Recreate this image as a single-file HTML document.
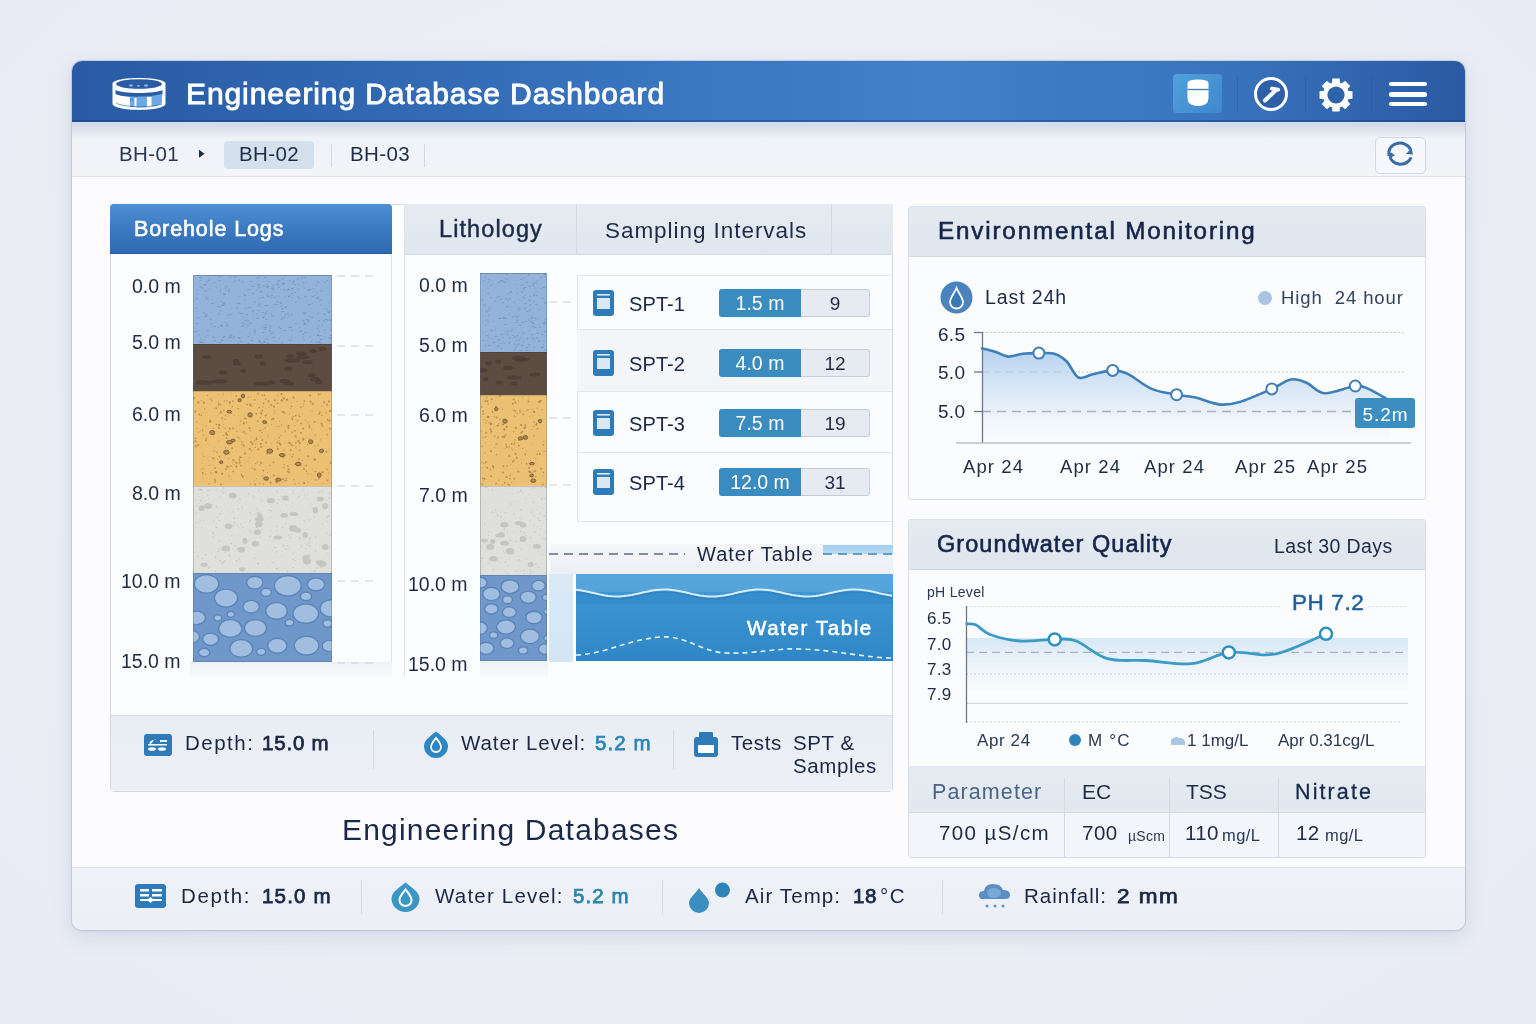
<!DOCTYPE html><html><head><meta charset="utf-8"><style>
html,body{margin:0;padding:0;}
body{width:1536px;height:1024px;overflow:hidden;position:relative;background:#eceef4;font-family:"Liberation Sans",sans-serif;}
.t{position:absolute;white-space:nowrap;line-height:1;will-change:transform;}
.r{position:absolute;display:block;}
</style></head><body>
<div class="r" style="left:0px;top:0px;width:1536px;height:1024px;background:radial-gradient(ellipse at 50% 45%, #eff1f7 0%, #ebeef5 60%, #e8ebf3 100%);"></div>
<div class="r" style="left:72px;top:61px;width:1393px;height:869px;background:#fafbfd;border-radius:10px;box-shadow:0 0 0 1px rgba(175,185,205,0.55),0 6px 22px rgba(70,100,160,0.15),0 1px 3px rgba(70,100,160,0.10);"></div>
<div class="r" style="left:72px;top:61px;width:1393px;height:61px;border-radius:10px 10px 0 0;background:linear-gradient(90deg,#2a5aa4 0%,#3168b2 22%,#3c79c4 48%,#4280c9 62%,#3a74bf 82%,#2a5aa2 100%);box-shadow:inset 0 -2px 0 rgba(20,60,120,0.45);"></div>
<svg class="r" style="left:110px;top:74px;" width="58" height="40" viewBox="0 0 58 40">
<path d="M2.5 9.5 C2.5 2 55.5 2 55.5 9.5 V29.5 C55.5 38 2.5 38 2.5 29.5Z" fill="#fff"/>
<ellipse cx="29" cy="10" rx="23" ry="4.8" fill="#2a5ca6"/>
<ellipse cx="21" cy="11.5" rx="2" ry="1.2" fill="#7eaee4"/><ellipse cx="28.5" cy="11.8" rx="1.8" ry="0.9" fill="#7eaee4"/><ellipse cx="36" cy="11.5" rx="2.2" ry="1.3" fill="#7eaee4"/>
<path d="M5.5 16 C12 20 46 20 52.5 16 V20 C46 24.5 12 24 5.5 20Z" fill="#2a5ca6"/>
<path d="M20 22.5 C33 23 45 22 52 20 V29 C49 32 40 33.5 29 33.5 C25 33.5 22 33.3 20 33Z" fill="#6ea8e6"/>
<rect x="24.5" y="24" width="2" height="9.5" fill="#fff"/><rect x="37" y="23" width="4.5" height="10" fill="#fff"/><rect x="20" y="24.5" width="3" height="2" fill="#4d86cc"/>
<path d="M6 29 C12 33 40 34.5 52 30" stroke="#2a5ca6" stroke-width="0.9" fill="none" opacity="0.7"/>
</svg>
<div class="t" style="left:186.0px;top:79.0px;font-size:30px;color:#ffffff;font-weight:400;letter-spacing:0.9px;-webkit-text-stroke:0.9px #ffffff;">Engineering Database Dashboard</div>
<div class="r" style="left:1173px;top:74px;width:49px;height:39px;background:linear-gradient(135deg,#52a0dc,#3f88cc);border-radius:4px;"></div>
<svg class="r" style="left:1185px;top:78px;" width="26" height="30" viewBox="0 0 26 30"><path d="M2.5 5 Q2.5 1.5 13 1.5 Q23.5 1.5 23.5 5 V20 Q23.5 28 13 28 Q2.5 28 2.5 20Z" fill="#fff"/><line x1="2.5" y1="11.5" x2="23.5" y2="11.5" stroke="#3f7fc0" stroke-width="1.3"/></svg>
<div class="r" style="left:1237px;top:76px;width:1px;height:36px;background:rgba(20,50,100,0.14);"></div>
<div class="r" style="left:1305px;top:76px;width:1px;height:36px;background:rgba(20,50,100,0.14);"></div>
<div class="r" style="left:1371px;top:76px;width:1px;height:36px;background:rgba(20,50,100,0.14);"></div>
<svg class="r" style="left:1252px;top:75px;" width="38" height="38" viewBox="0 0 38 38"><circle cx="19" cy="19" r="15.5" stroke="#fff" stroke-width="3" fill="#2e60a8"/><path d="M13 25.5 L24 15" stroke="#fff" stroke-width="4" stroke-linecap="round"/><path d="M20 13.6 L26 14.6" stroke="#fff" stroke-width="4" stroke-linecap="round"/></svg>
<svg class="r" style="left:1317px;top:75.5px;" width="38" height="38" viewBox="0 0 38 38"><path d="M30.87 15.07 L35.49 15.31 L35.49 22.69 L30.87 22.93 L30.17 24.61 L33.27 28.05 L28.05 33.27 L24.61 30.17 L22.93 30.87 L22.69 35.49 L15.31 35.49 L15.07 30.87 L13.39 30.17 L9.95 33.27 L4.73 28.05 L7.83 24.61 L7.13 22.93 L2.51 22.69 L2.51 15.31 L7.13 15.07 L7.83 13.39 L4.73 9.95 L9.95 4.73 L13.39 7.83 L15.07 7.13 L15.31 2.51 L22.69 2.51 L22.93 7.13 L24.61 7.83 L28.05 4.73 L33.27 9.95 L30.17 13.39Z" fill="#fff"/><circle cx="19" cy="19" r="13" fill="#fff"/><circle cx="19" cy="19" r="8.6" fill="#2f63ac"/></svg>
<div class="r" style="left:1389px;top:81.9px;width:38px;height:4.6px;background:#fff;border-radius:2.3px;"></div>
<div class="r" style="left:1389px;top:92.0px;width:38px;height:4.6px;background:#fff;border-radius:2.3px;"></div>
<div class="r" style="left:1389px;top:101.6px;width:38px;height:4.6px;background:#fff;border-radius:2.3px;"></div>
<div class="r" style="left:72px;top:122px;width:1393px;height:54px;background:linear-gradient(180deg,#eef1f7,#f3f5f9);border-bottom:1px solid #dfe4ec;"></div>
<div class="r" style="left:72px;top:122px;width:1393px;height:2px;background:#cfdff3;"></div>
<div class="r" style="left:72px;top:124px;width:1393px;height:14px;background:linear-gradient(180deg,rgba(190,198,215,0.55),rgba(230,234,242,0));"></div>
<div class="t" style="left:119.0px;top:143.6px;font-size:20.5px;color:#2a3856;font-weight:400;letter-spacing:0.4px;">BH-01</div>
<svg class="r" style="left:198px;top:149px;" width="8" height="10" viewBox="0 0 8 10"><path d="M1 0.8 L6.5 4.8 L1 8.8Z" fill="#1e2c48"/></svg>
<div class="r" style="left:224px;top:141px;width:90px;height:28px;background:#d5e0ed;border-radius:4px;"></div>
<div class="t" style="left:239.0px;top:143.6px;font-size:20.5px;color:#1e2c48;font-weight:400;letter-spacing:0.4px;">BH-02</div>
<div class="r" style="left:331px;top:144px;width:1px;height:23px;background:#d3d9e3;"></div>
<div class="t" style="left:350.0px;top:143.6px;font-size:20.5px;color:#1e2c48;font-weight:400;letter-spacing:0.4px;">BH-03</div>
<div class="r" style="left:424px;top:144px;width:1px;height:23px;background:#d3d9e3;"></div>
<div class="r" style="left:1375px;top:137px;width:51px;height:37px;background:#f5f7fa;border:1px solid #d3d9e3;border-radius:5px;box-sizing:border-box;"></div>
<svg class="r" style="left:1384px;top:140px;" width="32" height="30" viewBox="0 0 32 30"><path d="M5.5 15.4 A10.7 9 0 0 1 26.5 9.5" stroke="#3a6ca6" stroke-width="3" fill="none"/><path d="M22 14 L29 14.5 L27.5 8Z" fill="#3a6ca6"/><path d="M6 16.4 A10.7 9 0 0 0 27 17.3" stroke="#3a6ca6" stroke-width="3" fill="none"/><path d="M3 15.4 L7.5 12.5 L11 15.4 L7 17.3Z" fill="#3a6ca6"/></svg>
<div class="r" style="left:72px;top:176px;width:1393px;height:691px;background:#fcfcfe;"></div>
<div class="r" style="left:72px;top:176px;width:1393px;height:1px;background:#dde2ea;"></div>
<div class="r" style="left:110px;top:204px;width:783px;height:588px;background:#fcfdfe;border:1px solid #d3d9e3;border-radius:4px;box-sizing:border-box;"></div>
<div class="r" style="left:110px;top:204px;width:282px;height:50px;background:linear-gradient(180deg,#4f8fd3 0%,#3a78c0 55%,#2f69b0 100%);border-radius:4px 4px 0 0;box-shadow:inset 0 -1px 0 #2a5d9e;"></div>
<div class="t" style="left:134.0px;top:218.8px;font-size:21.5px;color:#ffffff;font-weight:400;letter-spacing:0.9px;-webkit-text-stroke:0.6px #ffffff;">Borehole Logs</div>
<div class="r" style="left:391px;top:254px;width:1px;height:422px;background:#dde3ec;"></div>
<div class="r" style="left:190px;top:662px;width:202px;height:14px;background:linear-gradient(180deg,#eef1f6,#f7f8fb);"></div>
<svg class="r" style="left:193px;top:275px;" width="139" height="387" viewBox="0 0 139 387"><defs><clipPath id="c11"><rect width="139" height="387"/></clipPath></defs><g clip-path="url(#c11)"><rect x="0" y="0" width="139" height="69" fill="#94b3da"/><rect x="63.0" y="38.5" width="2.5" height="0.9" fill="#6582b0" opacity="0.6"/><rect x="64.8" y="35.0" width="1.9" height="0.9" fill="#6582b0" opacity="0.6"/><rect x="26.3" y="35.3" width="2.0" height="0.9" fill="#6582b0" opacity="0.6"/><rect x="109.6" y="7.3" width="1.5" height="0.9" fill="#6582b0" opacity="0.6"/><rect x="13.4" y="55.2" width="2.1" height="0.9" fill="#6582b0" opacity="0.6"/><rect x="6.7" y="66.8" width="2.5" height="0.9" fill="#6582b0" opacity="0.6"/><rect x="90.6" y="42.2" width="1.3" height="0.9" fill="#6582b0" opacity="0.6"/><rect x="3.1" y="36.4" width="1.1" height="0.9" fill="#6582b0" opacity="0.6"/><rect x="27.1" y="17.2" width="1.0" height="0.9" fill="#6582b0" opacity="0.6"/><rect x="64.6" y="30.5" width="2.3" height="0.9" fill="#6582b0" opacity="0.6"/><rect x="72.1" y="43.9" width="1.8" height="0.9" fill="#6582b0" opacity="0.6"/><rect x="91.8" y="31.6" width="1.4" height="0.9" fill="#6582b0" opacity="0.6"/><rect x="137.7" y="67.7" width="2.3" height="0.9" fill="#6582b0" opacity="0.6"/><rect x="98.0" y="22.1" width="1.4" height="0.9" fill="#6582b0" opacity="0.6"/><rect x="40.6" y="5.7" width="2.2" height="0.9" fill="#6582b0" opacity="0.6"/><rect x="55.9" y="57.7" width="1.6" height="0.9" fill="#6582b0" opacity="0.6"/><rect x="132.3" y="57.8" width="1.0" height="0.9" fill="#6582b0" opacity="0.6"/><rect x="29.7" y="62.0" width="1.8" height="0.9" fill="#6582b0" opacity="0.6"/><rect x="135.3" y="27.6" width="1.1" height="0.9" fill="#6582b0" opacity="0.6"/><rect x="87.2" y="53.2" width="1.4" height="0.9" fill="#6582b0" opacity="0.6"/><rect x="12.9" y="23.3" width="2.5" height="0.9" fill="#6582b0" opacity="0.6"/><rect x="104.9" y="8.9" width="1.4" height="0.9" fill="#6582b0" opacity="0.6"/><rect x="14.8" y="5.0" width="2.3" height="0.9" fill="#6582b0" opacity="0.6"/><rect x="25.3" y="38.5" width="1.7" height="0.9" fill="#6582b0" opacity="0.6"/><rect x="27.1" y="50.0" width="1.2" height="0.9" fill="#6582b0" opacity="0.6"/><rect x="89.2" y="8.8" width="1.7" height="0.9" fill="#6582b0" opacity="0.6"/><rect x="30.2" y="19.1" width="2.6" height="0.9" fill="#6582b0" opacity="0.6"/><rect x="111.1" y="21.4" width="2.4" height="0.9" fill="#6582b0" opacity="0.6"/><rect x="29.9" y="27.4" width="2.4" height="0.9" fill="#6582b0" opacity="0.6"/><rect x="88.9" y="7.7" width="2.6" height="0.9" fill="#6582b0" opacity="0.6"/><rect x="30.2" y="18.3" width="2.2" height="0.9" fill="#6582b0" opacity="0.6"/><rect x="46.1" y="20.9" width="1.1" height="0.9" fill="#6582b0" opacity="0.6"/><rect x="13.3" y="40.0" width="1.4" height="0.9" fill="#6582b0" opacity="0.6"/><rect x="83.4" y="25.9" width="1.7" height="0.9" fill="#6582b0" opacity="0.6"/><rect x="132.4" y="33.4" width="1.9" height="0.9" fill="#6582b0" opacity="0.6"/><rect x="119.7" y="13.2" width="1.2" height="0.9" fill="#6582b0" opacity="0.6"/><rect x="125.5" y="55.8" width="1.4" height="0.9" fill="#6582b0" opacity="0.6"/><rect x="27.0" y="50.5" width="2.5" height="0.9" fill="#6582b0" opacity="0.6"/><rect x="27.9" y="64.7" width="2.4" height="0.9" fill="#6582b0" opacity="0.6"/><rect x="83.7" y="29.2" width="1.2" height="0.9" fill="#6582b0" opacity="0.6"/><rect x="6.3" y="65.5" width="1.4" height="0.9" fill="#6582b0" opacity="0.6"/><rect x="97.5" y="18.2" width="2.3" height="0.9" fill="#6582b0" opacity="0.6"/><rect x="82.7" y="20.7" width="1.3" height="0.9" fill="#6582b0" opacity="0.6"/><rect x="99.7" y="5.6" width="1.4" height="0.9" fill="#6582b0" opacity="0.6"/><rect x="77.6" y="58.1" width="2.0" height="0.9" fill="#6582b0" opacity="0.6"/><rect x="39.4" y="62.5" width="1.3" height="0.9" fill="#6582b0" opacity="0.6"/><rect x="3.3" y="19.0" width="1.7" height="0.9" fill="#6582b0" opacity="0.6"/><rect x="9.3" y="12.8" width="1.6" height="0.9" fill="#6582b0" opacity="0.6"/><rect x="79.4" y="9.8" width="1.6" height="0.9" fill="#6582b0" opacity="0.6"/><rect x="123.1" y="66.7" width="2.1" height="0.9" fill="#6582b0" opacity="0.6"/><rect x="95.7" y="40.2" width="1.2" height="0.9" fill="#6582b0" opacity="0.6"/><rect x="5.8" y="2.2" width="2.5" height="0.9" fill="#6582b0" opacity="0.6"/><rect x="97.0" y="65.5" width="1.0" height="0.9" fill="#6582b0" opacity="0.6"/><rect x="88.2" y="33.3" width="2.2" height="0.9" fill="#6582b0" opacity="0.6"/><rect x="44.7" y="68.0" width="1.1" height="0.9" fill="#6582b0" opacity="0.6"/><rect x="75.8" y="50.4" width="2.4" height="0.9" fill="#6582b0" opacity="0.6"/><rect x="102.0" y="48.1" width="2.3" height="0.9" fill="#6582b0" opacity="0.6"/><rect x="126.4" y="24.6" width="2.1" height="0.9" fill="#6582b0" opacity="0.6"/><rect x="124.4" y="59.4" width="1.7" height="0.9" fill="#6582b0" opacity="0.6"/><rect x="109.3" y="58.9" width="1.9" height="0.9" fill="#6582b0" opacity="0.6"/><rect x="86.6" y="26.6" width="1.9" height="0.9" fill="#6582b0" opacity="0.6"/><rect x="84.4" y="6.4" width="2.0" height="0.9" fill="#6582b0" opacity="0.6"/><rect x="137.1" y="59.9" width="2.2" height="0.9" fill="#6582b0" opacity="0.6"/><rect x="54.2" y="50.2" width="1.9" height="0.9" fill="#6582b0" opacity="0.6"/><rect x="61.4" y="57.2" width="1.1" height="0.9" fill="#6582b0" opacity="0.6"/><rect x="103.8" y="3.0" width="2.0" height="0.9" fill="#6582b0" opacity="0.6"/><rect x="66.9" y="16.4" width="2.1" height="0.9" fill="#6582b0" opacity="0.6"/><rect x="69.1" y="42.2" width="2.5" height="0.9" fill="#6582b0" opacity="0.6"/><rect x="36.0" y="1.8" width="1.5" height="0.9" fill="#6582b0" opacity="0.6"/><rect x="93.9" y="14.6" width="1.3" height="0.9" fill="#6582b0" opacity="0.6"/><rect x="125.1" y="45.2" width="1.7" height="0.9" fill="#6582b0" opacity="0.6"/><rect x="123.2" y="22.9" width="2.1" height="0.9" fill="#6582b0" opacity="0.6"/><rect x="28.2" y="29.9" width="2.3" height="0.9" fill="#6582b0" opacity="0.6"/><rect x="126.2" y="60.0" width="1.6" height="0.9" fill="#6582b0" opacity="0.6"/><rect x="80.9" y="22.2" width="1.2" height="0.9" fill="#6582b0" opacity="0.6"/><rect x="69.0" y="57.1" width="2.4" height="0.9" fill="#6582b0" opacity="0.6"/><rect x="98.4" y="64.7" width="1.4" height="0.9" fill="#6582b0" opacity="0.6"/><rect x="24.2" y="31.2" width="1.4" height="0.9" fill="#6582b0" opacity="0.6"/><rect x="30.3" y="28.7" width="2.0" height="0.9" fill="#6582b0" opacity="0.6"/><rect x="68.7" y="22.1" width="2.3" height="0.9" fill="#6582b0" opacity="0.6"/><rect x="135.5" y="31.3" width="1.1" height="0.9" fill="#6582b0" opacity="0.6"/><rect x="5.3" y="59.5" width="1.1" height="0.9" fill="#6582b0" opacity="0.6"/><rect x="98.1" y="39.2" width="1.5" height="0.9" fill="#6582b0" opacity="0.6"/><rect x="109.4" y="2.3" width="1.2" height="0.9" fill="#6582b0" opacity="0.6"/><rect x="63.3" y="2.7" width="2.3" height="0.9" fill="#6582b0" opacity="0.6"/><rect x="33.5" y="10.4" width="1.1" height="0.9" fill="#6582b0" opacity="0.6"/><rect x="87.2" y="30.9" width="2.0" height="0.9" fill="#6582b0" opacity="0.6"/><rect x="90.7" y="55.1" width="2.5" height="0.9" fill="#6582b0" opacity="0.6"/><rect x="94.8" y="14.4" width="1.8" height="0.9" fill="#6582b0" opacity="0.6"/><rect x="25.5" y="1.7" width="1.8" height="0.9" fill="#6582b0" opacity="0.6"/><rect x="98.8" y="13.0" width="1.4" height="0.9" fill="#6582b0" opacity="0.6"/><rect x="48.4" y="47.7" width="1.8" height="0.9" fill="#6582b0" opacity="0.6"/><rect x="85.2" y="51.7" width="1.6" height="0.9" fill="#6582b0" opacity="0.6"/><rect x="109.5" y="61.7" width="1.1" height="0.9" fill="#6582b0" opacity="0.6"/><rect x="128.8" y="49.4" width="1.2" height="0.9" fill="#6582b0" opacity="0.6"/><rect x="63.1" y="42.9" width="2.5" height="0.9" fill="#6582b0" opacity="0.6"/><rect x="52.6" y="39.1" width="2.4" height="0.9" fill="#6582b0" opacity="0.6"/><rect x="110.2" y="64.3" width="1.7" height="0.9" fill="#6582b0" opacity="0.6"/><rect x="90.2" y="14.7" width="2.2" height="0.9" fill="#6582b0" opacity="0.6"/><rect x="113.1" y="44.0" width="2.1" height="0.9" fill="#6582b0" opacity="0.6"/><rect x="30.2" y="61.3" width="2.6" height="0.9" fill="#6582b0" opacity="0.6"/><rect x="134.9" y="37.0" width="2.3" height="0.9" fill="#6582b0" opacity="0.6"/><rect x="44.9" y="62.0" width="2.4" height="0.9" fill="#6582b0" opacity="0.6"/><rect x="48.7" y="6.5" width="1.7" height="0.9" fill="#6582b0" opacity="0.6"/><rect x="76.4" y="52.5" width="1.8" height="0.9" fill="#6582b0" opacity="0.6"/><rect x="4.9" y="55.2" width="1.1" height="0.9" fill="#6582b0" opacity="0.6"/><rect x="110.6" y="12.6" width="1.5" height="0.9" fill="#6582b0" opacity="0.6"/><rect x="108.9" y="10.4" width="1.2" height="0.9" fill="#6582b0" opacity="0.6"/><rect x="71.8" y="49.5" width="2.3" height="0.9" fill="#6582b0" opacity="0.6"/><rect x="95.4" y="64.4" width="1.8" height="0.9" fill="#6582b0" opacity="0.6"/><rect x="131.0" y="6.8" width="1.4" height="0.9" fill="#6582b0" opacity="0.6"/><rect x="73.2" y="20.4" width="2.2" height="0.9" fill="#6582b0" opacity="0.6"/><rect x="88.5" y="36.0" width="2.3" height="0.9" fill="#6582b0" opacity="0.6"/><rect x="77.7" y="21.9" width="1.6" height="0.9" fill="#6582b0" opacity="0.6"/><rect x="116.8" y="61.3" width="1.3" height="0.9" fill="#6582b0" opacity="0.6"/><rect x="117.6" y="65.9" width="1.8" height="0.9" fill="#6582b0" opacity="0.6"/><rect x="79.5" y="14.5" width="1.9" height="0.9" fill="#6582b0" opacity="0.6"/><rect x="69.9" y="41.6" width="1.0" height="0.9" fill="#6582b0" opacity="0.6"/><rect x="133.8" y="35.6" width="1.6" height="0.9" fill="#6582b0" opacity="0.6"/><rect x="110.7" y="38.7" width="1.8" height="0.9" fill="#6582b0" opacity="0.6"/><rect x="95.7" y="5.4" width="1.9" height="0.9" fill="#6582b0" opacity="0.6"/><rect x="57.7" y="65.1" width="2.5" height="0.9" fill="#6582b0" opacity="0.6"/><rect x="37.9" y="32.7" width="1.2" height="0.9" fill="#6582b0" opacity="0.6"/><rect x="60.4" y="55.7" width="2.4" height="0.9" fill="#6582b0" opacity="0.6"/><rect x="66.3" y="22.3" width="1.3" height="0.9" fill="#6582b0" opacity="0.6"/><rect x="85.7" y="63.0" width="1.2" height="0.9" fill="#6582b0" opacity="0.6"/><rect x="107.8" y="2.5" width="1.3" height="0.9" fill="#6582b0" opacity="0.6"/><rect x="32.1" y="47.0" width="1.5" height="0.9" fill="#6582b0" opacity="0.6"/><rect x="49.7" y="42.5" width="1.2" height="0.9" fill="#6582b0" opacity="0.6"/><rect x="101.1" y="9.2" width="1.8" height="0.9" fill="#6582b0" opacity="0.6"/><rect x="35.3" y="14.2" width="1.8" height="0.9" fill="#6582b0" opacity="0.6"/><rect x="60.8" y="26.2" width="1.7" height="0.9" fill="#6582b0" opacity="0.6"/><rect x="73.5" y="11.7" width="1.3" height="0.9" fill="#6582b0" opacity="0.6"/><rect x="87.5" y="43.8" width="1.8" height="0.9" fill="#6582b0" opacity="0.6"/><rect x="117.6" y="42.0" width="2.4" height="0.9" fill="#6582b0" opacity="0.6"/><rect x="32.9" y="50.6" width="2.3" height="0.9" fill="#6582b0" opacity="0.6"/><rect x="124.7" y="22.2" width="1.5" height="0.9" fill="#6582b0" opacity="0.6"/><rect x="127.4" y="15.6" width="2.6" height="0.9" fill="#6582b0" opacity="0.6"/><rect x="122.6" y="10.0" width="1.4" height="0.9" fill="#6582b0" opacity="0.6"/><rect x="100.5" y="18.4" width="1.2" height="0.9" fill="#6582b0" opacity="0.6"/><rect x="115.0" y="29.2" width="2.3" height="0.9" fill="#6582b0" opacity="0.6"/><rect x="18.3" y="28.0" width="2.1" height="0.9" fill="#6582b0" opacity="0.6"/><rect x="3.4" y="14.5" width="2.1" height="0.9" fill="#6582b0" opacity="0.6"/><rect x="125.9" y="65.9" width="1.2" height="0.9" fill="#6582b0" opacity="0.6"/><rect x="70.3" y="51.8" width="1.8" height="0.9" fill="#6582b0" opacity="0.6"/><rect x="94.9" y="13.7" width="1.1" height="0.9" fill="#6582b0" opacity="0.6"/><rect x="15.5" y="3.5" width="1.9" height="0.9" fill="#6582b0" opacity="0.6"/><rect x="71.5" y="39.1" width="1.2" height="0.9" fill="#6582b0" opacity="0.6"/><rect x="26.3" y="14.7" width="2.3" height="0.9" fill="#6582b0" opacity="0.6"/><rect x="136.7" y="63.1" width="1.2" height="0.9" fill="#6582b0" opacity="0.6"/><rect x="9.5" y="64.8" width="1.7" height="0.9" fill="#6582b0" opacity="0.6"/><rect x="105.8" y="22.9" width="1.7" height="0.9" fill="#6582b0" opacity="0.6"/><rect x="71.6" y="29.8" width="2.0" height="0.9" fill="#6582b0" opacity="0.6"/><rect x="2.8" y="48.0" width="2.4" height="0.9" fill="#6582b0" opacity="0.6"/><rect x="25.8" y="31.4" width="2.2" height="0.9" fill="#6582b0" opacity="0.6"/><rect x="56.5" y="14.1" width="1.3" height="0.9" fill="#6582b0" opacity="0.6"/><rect x="71.2" y="2.0" width="2.4" height="0.9" fill="#6582b0" opacity="0.6"/><rect x="110.8" y="48.2" width="2.4" height="0.9" fill="#6582b0" opacity="0.6"/><rect x="87.2" y="28.1" width="2.0" height="0.9" fill="#6582b0" opacity="0.6"/><rect x="70.1" y="66.8" width="2.3" height="0.9" fill="#6582b0" opacity="0.6"/><rect x="36.4" y="62.1" width="2.2" height="0.9" fill="#6582b0" opacity="0.6"/><rect x="107.6" y="55.6" width="1.6" height="0.9" fill="#6582b0" opacity="0.6"/><rect x="123.8" y="59.9" width="2.1" height="0.9" fill="#6582b0" opacity="0.6"/><rect x="106.1" y="52.3" width="1.6" height="0.9" fill="#6582b0" opacity="0.6"/><rect x="100.0" y="5.7" width="1.5" height="0.9" fill="#6582b0" opacity="0.6"/><rect x="65.2" y="1.7" width="1.6" height="0.9" fill="#6582b0" opacity="0.6"/><rect x="88.5" y="42.8" width="1.4" height="0.9" fill="#6582b0" opacity="0.6"/><rect x="130.4" y="45.6" width="1.5" height="0.9" fill="#6582b0" opacity="0.6"/><rect x="91.4" y="39.2" width="1.9" height="0.9" fill="#6582b0" opacity="0.6"/><rect x="54.4" y="68.0" width="2.0" height="0.9" fill="#6582b0" opacity="0.6"/><rect x="97.1" y="52.0" width="2.6" height="0.9" fill="#6582b0" opacity="0.6"/><rect x="4.1" y="42.2" width="2.2" height="0.9" fill="#6582b0" opacity="0.6"/><rect x="36.2" y="27.9" width="1.1" height="0.9" fill="#6582b0" opacity="0.6"/><rect x="27.8" y="26.2" width="1.2" height="0.9" fill="#6582b0" opacity="0.6"/><rect x="35.4" y="61.7" width="1.9" height="0.9" fill="#6582b0" opacity="0.6"/><rect x="70.6" y="65.8" width="1.9" height="0.9" fill="#6582b0" opacity="0.6"/><rect x="137.3" y="43.7" width="2.3" height="0.9" fill="#6582b0" opacity="0.6"/><rect x="11.4" y="41.0" width="2.2" height="0.9" fill="#6582b0" opacity="0.6"/><rect x="7.2" y="63.3" width="1.3" height="0.9" fill="#6582b0" opacity="0.6"/><rect x="65.6" y="12.3" width="1.8" height="0.9" fill="#6582b0" opacity="0.6"/><rect x="84.7" y="4.9" width="2.5" height="0.9" fill="#6582b0" opacity="0.6"/><rect x="58.6" y="36.3" width="2.0" height="0.9" fill="#6582b0" opacity="0.6"/><rect x="51.1" y="20.1" width="2.0" height="0.9" fill="#6582b0" opacity="0.6"/><rect x="77.8" y="20.0" width="2.1" height="0.9" fill="#6582b0" opacity="0.6"/><rect x="41.6" y="1.9" width="1.4" height="0.9" fill="#6582b0" opacity="0.6"/><rect x="6.9" y="11.5" width="2.2" height="0.9" fill="#6582b0" opacity="0.6"/><rect x="54.4" y="61.1" width="2.2" height="0.9" fill="#6582b0" opacity="0.6"/><rect x="7.9" y="67.2" width="2.5" height="0.9" fill="#6582b0" opacity="0.6"/><rect x="11.1" y="61.7" width="1.7" height="0.9" fill="#6582b0" opacity="0.6"/><rect x="66.4" y="66.2" width="1.4" height="0.9" fill="#6582b0" opacity="0.6"/><rect x="72.7" y="63.8" width="2.2" height="0.9" fill="#6582b0" opacity="0.6"/><rect x="65.2" y="66.6" width="2.3" height="0.9" fill="#6582b0" opacity="0.6"/><rect x="83.7" y="8.7" width="2.0" height="0.9" fill="#6582b0" opacity="0.6"/><rect x="63.4" y="14.6" width="1.1" height="0.9" fill="#6582b0" opacity="0.6"/><rect x="73.3" y="9.3" width="1.7" height="0.9" fill="#6582b0" opacity="0.6"/><rect x="92.5" y="31.5" width="1.4" height="0.9" fill="#6582b0" opacity="0.6"/><rect x="80.8" y="29.1" width="2.2" height="0.9" fill="#6582b0" opacity="0.6"/><rect x="73.7" y="67.8" width="2.5" height="0.9" fill="#6582b0" opacity="0.6"/><rect x="101.6" y="17.0" width="1.2" height="0.9" fill="#6582b0" opacity="0.6"/><rect x="123.3" y="53.5" width="2.0" height="0.9" fill="#6582b0" opacity="0.6"/><rect x="50.2" y="19.2" width="2.1" height="0.9" fill="#6582b0" opacity="0.6"/><rect x="78.4" y="40.6" width="2.0" height="0.9" fill="#6582b0" opacity="0.6"/><rect x="104.2" y="13.7" width="1.4" height="0.9" fill="#6582b0" opacity="0.6"/><rect x="135.2" y="62.4" width="2.4" height="0.9" fill="#6582b0" opacity="0.6"/><rect x="6.4" y="5.1" width="1.4" height="0.9" fill="#6582b0" opacity="0.6"/><rect x="59.3" y="42.8" width="1.2" height="0.9" fill="#6582b0" opacity="0.6"/><rect x="75.2" y="5.9" width="1.1" height="0.9" fill="#6582b0" opacity="0.6"/><rect x="93.7" y="37.9" width="2.0" height="0.9" fill="#6582b0" opacity="0.6"/><rect x="52.1" y="33.1" width="1.3" height="0.9" fill="#6582b0" opacity="0.6"/><rect x="48.1" y="50.9" width="2.3" height="0.9" fill="#6582b0" opacity="0.6"/><rect x="11.2" y="9.0" width="2.3" height="0.9" fill="#6582b0" opacity="0.6"/><rect x="86.5" y="52.5" width="1.3" height="0.9" fill="#6582b0" opacity="0.6"/><rect x="59.1" y="18.3" width="2.3" height="0.9" fill="#6582b0" opacity="0.6"/><rect x="51.5" y="44.8" width="2.6" height="0.9" fill="#6582b0" opacity="0.6"/><rect x="45.6" y="37.8" width="2.2" height="0.9" fill="#6582b0" opacity="0.6"/><rect x="127.2" y="29.7" width="1.6" height="0.9" fill="#6582b0" opacity="0.6"/><rect x="14.3" y="59.6" width="1.1" height="0.9" fill="#6582b0" opacity="0.6"/><rect x="12.4" y="38.8" width="1.8" height="0.9" fill="#6582b0" opacity="0.6"/><rect x="94.9" y="21.0" width="2.2" height="0.9" fill="#6582b0" opacity="0.6"/><rect x="11.4" y="15.3" width="2.1" height="0.9" fill="#6582b0" opacity="0.6"/><rect x="12.2" y="21.4" width="2.2" height="0.9" fill="#6582b0" opacity="0.6"/><rect x="96.1" y="20.0" width="1.2" height="0.9" fill="#6582b0" opacity="0.6"/><rect x="50.0" y="49.6" width="1.6" height="0.9" fill="#6582b0" opacity="0.6"/><rect x="17.1" y="48.5" width="1.9" height="0.9" fill="#6582b0" opacity="0.6"/><rect x="126.8" y="64.0" width="2.5" height="0.9" fill="#6582b0" opacity="0.6"/><rect x="61.0" y="54.8" width="1.5" height="0.9" fill="#6582b0" opacity="0.6"/><rect x="44.5" y="27.8" width="2.5" height="0.9" fill="#6582b0" opacity="0.6"/><rect x="123.6" y="17.6" width="1.6" height="0.9" fill="#6582b0" opacity="0.6"/><rect x="51.1" y="25.3" width="1.6" height="0.9" fill="#6582b0" opacity="0.6"/><rect x="54.1" y="14.1" width="1.9" height="0.9" fill="#6582b0" opacity="0.6"/><rect x="110.2" y="37.2" width="2.3" height="0.9" fill="#6582b0" opacity="0.6"/><rect x="78.1" y="12.8" width="2.2" height="0.9" fill="#6582b0" opacity="0.6"/><rect x="121.7" y="19.9" width="1.0" height="0.9" fill="#6582b0" opacity="0.6"/><rect x="71.6" y="37.5" width="1.9" height="0.9" fill="#6582b0" opacity="0.6"/><rect x="133.4" y="44.6" width="2.3" height="0.9" fill="#6582b0" opacity="0.6"/><rect x="9.8" y="37.6" width="2.3" height="0.9" fill="#6582b0" opacity="0.6"/><rect x="12.5" y="6.5" width="2.2" height="0.9" fill="#6582b0" opacity="0.6"/><rect x="124.2" y="6.7" width="2.0" height="0.9" fill="#6582b0" opacity="0.6"/><rect x="20.7" y="51.0" width="2.0" height="0.9" fill="#6582b0" opacity="0.6"/><rect x="34.6" y="15.8" width="2.2" height="0.9" fill="#6582b0" opacity="0.6"/><rect x="72.5" y="52.2" width="1.6" height="0.9" fill="#6582b0" opacity="0.6"/><rect x="47.3" y="65.9" width="2.1" height="0.9" fill="#6582b0" opacity="0.6"/><rect x="68.6" y="37.0" width="2.2" height="0.9" fill="#6582b0" opacity="0.6"/><rect x="98.0" y="62.3" width="1.7" height="0.9" fill="#6582b0" opacity="0.6"/><rect x="114.2" y="45.7" width="2.4" height="0.9" fill="#6582b0" opacity="0.6"/><rect x="111.4" y="56.9" width="2.4" height="0.9" fill="#6582b0" opacity="0.6"/><rect x="132.2" y="43.9" width="1.8" height="0.9" fill="#6582b0" opacity="0.6"/><rect x="98.3" y="54.8" width="1.7" height="0.9" fill="#6582b0" opacity="0.6"/><rect x="58.6" y="10.8" width="2.2" height="0.9" fill="#6582b0" opacity="0.6"/><rect x="136.8" y="26.2" width="1.3" height="0.9" fill="#6582b0" opacity="0.6"/><rect x="29.0" y="29.5" width="1.5" height="0.9" fill="#6582b0" opacity="0.6"/><rect x="133.9" y="5.0" width="1.5" height="0.9" fill="#6582b0" opacity="0.6"/><rect x="16.7" y="44.4" width="2.2" height="0.9" fill="#6582b0" opacity="0.6"/><rect x="25.6" y="5.2" width="1.7" height="0.9" fill="#6582b0" opacity="0.6"/><rect x="81.0" y="61.9" width="1.1" height="0.9" fill="#6582b0" opacity="0.6"/><rect x="15.9" y="13.4" width="1.3" height="0.9" fill="#6582b0" opacity="0.6"/><rect x="33.3" y="49.1" width="2.0" height="0.9" fill="#6582b0" opacity="0.6"/><rect x="31.7" y="13.4" width="1.4" height="0.9" fill="#6582b0" opacity="0.6"/><rect x="24.6" y="51.8" width="1.5" height="0.9" fill="#6582b0" opacity="0.6"/><rect x="76.1" y="55.7" width="1.8" height="0.9" fill="#6582b0" opacity="0.6"/><rect x="36.7" y="60.5" width="2.5" height="0.9" fill="#6582b0" opacity="0.6"/><rect x="47.9" y="37.7" width="2.5" height="0.9" fill="#6582b0" opacity="0.6"/><rect x="67.1" y="15.8" width="1.1" height="0.9" fill="#6582b0" opacity="0.6"/><rect x="130.8" y="54.7" width="1.6" height="0.9" fill="#6582b0" opacity="0.6"/><rect x="73.3" y="35.6" width="1.4" height="0.9" fill="#6582b0" opacity="0.6"/><rect x="136.7" y="45.1" width="1.4" height="0.9" fill="#6582b0" opacity="0.6"/><rect x="2.5" y="32.7" width="1.6" height="0.9" fill="#6582b0" opacity="0.6"/><rect x="110.2" y="48.8" width="2.0" height="0.9" fill="#6582b0" opacity="0.6"/><rect x="22.5" y="11.5" width="1.5" height="0.9" fill="#6582b0" opacity="0.6"/><rect x="36.5" y="59.2" width="1.8" height="0.9" fill="#6582b0" opacity="0.6"/><rect x="88.3" y="67.5" width="1.4" height="0.9" fill="#6582b0" opacity="0.6"/><rect x="74.2" y="11.1" width="2.2" height="0.9" fill="#6582b0" opacity="0.6"/><rect x="1.2" y="56.0" width="2.4" height="0.9" fill="#6582b0" opacity="0.6"/><rect x="113.6" y="6.5" width="1.4" height="0.9" fill="#6582b0" opacity="0.6"/><rect x="99.2" y="7.5" width="1.8" height="0.9" fill="#6582b0" opacity="0.6"/><rect x="65.2" y="65.0" width="1.9" height="0.9" fill="#6582b0" opacity="0.6"/><rect x="118.5" y="21.3" width="2.3" height="0.9" fill="#6582b0" opacity="0.6"/><rect x="58.1" y="62.4" width="1.1" height="0.9" fill="#6582b0" opacity="0.6"/><rect x="114.2" y="15.0" width="1.9" height="0.9" fill="#6582b0" opacity="0.6"/><rect x="73.0" y="11.6" width="2.3" height="0.9" fill="#6582b0" opacity="0.6"/><rect x="43.7" y="21.8" width="1.1" height="0.9" fill="#6582b0" opacity="0.6"/><rect x="42.9" y="32.3" width="2.1" height="0.9" fill="#6582b0" opacity="0.6"/><rect x="50.3" y="47.0" width="1.2" height="0.9" fill="#6582b0" opacity="0.6"/><rect x="55.0" y="31.9" width="2.5" height="0.9" fill="#6582b0" opacity="0.6"/><rect x="114.7" y="44.8" width="1.0" height="0.9" fill="#6582b0" opacity="0.6"/><rect x="52.7" y="48.6" width="1.4" height="0.9" fill="#6582b0" opacity="0.6"/><rect x="78.3" y="31.7" width="1.0" height="0.9" fill="#6582b0" opacity="0.6"/><rect x="136.9" y="54.6" width="1.3" height="0.9" fill="#6582b0" opacity="0.6"/><rect x="85.4" y="20.5" width="1.6" height="0.9" fill="#6582b0" opacity="0.6"/><rect x="74.9" y="21.0" width="1.5" height="0.9" fill="#6582b0" opacity="0.6"/><rect x="54.7" y="45.7" width="1.4" height="0.9" fill="#6582b0" opacity="0.6"/><rect x="28.4" y="50.0" width="1.5" height="0.9" fill="#6582b0" opacity="0.6"/><rect x="130.5" y="38.7" width="2.2" height="0.9" fill="#6582b0" opacity="0.6"/><rect x="46.4" y="56.4" width="1.1" height="0.9" fill="#6582b0" opacity="0.6"/><rect x="20.3" y="7.3" width="2.1" height="0.9" fill="#6582b0" opacity="0.6"/><rect x="98.0" y="13.1" width="1.6" height="0.9" fill="#6582b0" opacity="0.6"/><rect x="115.7" y="40.7" width="1.1" height="0.9" fill="#6582b0" opacity="0.6"/><rect x="32.0" y="11.5" width="1.2" height="0.9" fill="#6582b0" opacity="0.6"/><rect x="56.7" y="5.9" width="2.5" height="0.9" fill="#6582b0" opacity="0.6"/><rect x="59.5" y="35.3" width="2.0" height="0.9" fill="#6582b0" opacity="0.6"/><rect x="106.1" y="56.0" width="1.6" height="0.9" fill="#6582b0" opacity="0.6"/><rect x="46.4" y="28.6" width="1.0" height="0.9" fill="#6582b0" opacity="0.6"/><rect x="55.9" y="47.9" width="2.6" height="0.9" fill="#6582b0" opacity="0.6"/><rect x="109.2" y="45.2" width="2.0" height="0.9" fill="#6582b0" opacity="0.6"/><rect x="3.5" y="23.2" width="1.5" height="0.9" fill="#6582b0" opacity="0.6"/><rect x="90.1" y="8.1" width="1.6" height="0.9" fill="#6582b0" opacity="0.6"/><rect x="70.8" y="53.8" width="2.3" height="0.9" fill="#6582b0" opacity="0.6"/><rect x="84.8" y="11.6" width="2.2" height="0.9" fill="#6582b0" opacity="0.6"/><rect x="124.7" y="37.7" width="1.6" height="0.9" fill="#6582b0" opacity="0.6"/><rect x="69.6" y="10.5" width="2.1" height="0.9" fill="#6582b0" opacity="0.6"/><rect x="136.2" y="35.6" width="2.1" height="0.9" fill="#6582b0" opacity="0.6"/><rect x="115.5" y="14.2" width="2.5" height="0.9" fill="#6582b0" opacity="0.6"/><rect x="86.9" y="14.3" width="1.1" height="0.9" fill="#6582b0" opacity="0.6"/><rect x="34.5" y="39.6" width="2.1" height="0.9" fill="#6582b0" opacity="0.6"/><rect x="46.1" y="63.2" width="1.6" height="0.9" fill="#6582b0" opacity="0.6"/><rect x="64.4" y="9.3" width="2.6" height="0.9" fill="#6582b0" opacity="0.6"/><rect x="19.6" y="61.6" width="1.9" height="0.9" fill="#6582b0" opacity="0.6"/><rect x="77.8" y="38.5" width="1.4" height="0.9" fill="#6582b0" opacity="0.6"/><rect x="125.6" y="67.5" width="2.3" height="0.9" fill="#6582b0" opacity="0.6"/><rect x="83.4" y="9.2" width="2.3" height="0.9" fill="#6582b0" opacity="0.6"/><rect x="40.5" y="61.1" width="1.4" height="0.9" fill="#6582b0" opacity="0.6"/><rect x="79.6" y="56.7" width="1.3" height="0.9" fill="#6582b0" opacity="0.6"/><rect x="76.1" y="6.1" width="1.1" height="0.9" fill="#6582b0" opacity="0.6"/><rect x="25.7" y="67.1" width="2.5" height="0.9" fill="#6582b0" opacity="0.6"/><rect x="91.2" y="21.6" width="2.1" height="0.9" fill="#6582b0" opacity="0.6"/><rect x="102.1" y="26.6" width="1.9" height="0.9" fill="#6582b0" opacity="0.6"/><rect x="111.1" y="2.1" width="1.3" height="0.9" fill="#6582b0" opacity="0.6"/><rect x="65.1" y="10.6" width="1.6" height="0.9" fill="#6582b0" opacity="0.6"/><rect x="79.0" y="12.6" width="1.8" height="0.9" fill="#6582b0" opacity="0.6"/><rect x="37.1" y="39.1" width="1.5" height="0.9" fill="#6582b0" opacity="0.6"/><rect x="88.9" y="3.5" width="2.1" height="0.9" fill="#6582b0" opacity="0.6"/><rect x="20.8" y="65.3" width="2.0" height="0.9" fill="#6582b0" opacity="0.6"/><rect x="65.4" y="28.6" width="2.0" height="0.9" fill="#6582b0" opacity="0.6"/><rect x="95.4" y="51.8" width="2.2" height="0.9" fill="#6582b0" opacity="0.6"/><rect x="67.6" y="67.6" width="2.3" height="0.9" fill="#6582b0" opacity="0.6"/><rect x="118.1" y="28.4" width="1.7" height="0.9" fill="#6582b0" opacity="0.6"/><rect x="78.5" y="61.7" width="1.8" height="0.9" fill="#6582b0" opacity="0.6"/><rect x="72.9" y="30.0" width="2.4" height="0.9" fill="#6582b0" opacity="0.6"/><rect x="44.9" y="4.7" width="2.2" height="0.9" fill="#6582b0" opacity="0.6"/><rect x="124.3" y="50.0" width="2.0" height="0.9" fill="#6582b0" opacity="0.6"/><rect x="104.0" y="21.4" width="1.9" height="0.9" fill="#6582b0" opacity="0.6"/><rect x="10.6" y="9.3" width="1.7" height="0.9" fill="#6582b0" opacity="0.6"/><rect x="0" y="0" width="139" height="1" fill="#000" opacity="0.12"/><rect x="0" y="69" width="139" height="47" fill="#5d4c42"/><ellipse cx="69.9" cy="88.7" rx="2.8" ry="1.6" fill="#4f4038" stroke="#463830" stroke-width="0.6"/><ellipse cx="95.4" cy="93.5" rx="3.8" ry="1.6" fill="#4f4038" stroke="#463830" stroke-width="0.6"/><ellipse cx="43.7" cy="88.6" rx="3.8" ry="1.6" fill="#4f4038" stroke="#463830" stroke-width="0.6"/><ellipse cx="12.1" cy="107.7" rx="7.8" ry="1.6" fill="#4f4038" stroke="#463830" stroke-width="0.6"/><ellipse cx="91.5" cy="106.1" rx="4.8" ry="1.6" fill="#4f4038" stroke="#463830" stroke-width="0.6"/><ellipse cx="110.1" cy="82.2" rx="6.6" ry="1.6" fill="#4f4038" stroke="#463830" stroke-width="0.6"/><ellipse cx="78.4" cy="107.4" rx="3.0" ry="1.6" fill="#4f4038" stroke="#463830" stroke-width="0.6"/><ellipse cx="108.4" cy="78.6" rx="5.5" ry="1.6" fill="#4f4038" stroke="#463830" stroke-width="0.6"/><ellipse cx="129.5" cy="74.0" rx="3.8" ry="1.6" fill="#4f4038" stroke="#463830" stroke-width="0.6"/><ellipse cx="42.8" cy="86.0" rx="2.8" ry="1.6" fill="#4f4038" stroke="#463830" stroke-width="0.6"/><ellipse cx="122.1" cy="104.2" rx="4.7" ry="1.6" fill="#4f4038" stroke="#463830" stroke-width="0.6"/><ellipse cx="50.4" cy="95.7" rx="2.8" ry="1.6" fill="#4f4038" stroke="#463830" stroke-width="0.6"/><ellipse cx="7.1" cy="107.2" rx="4.2" ry="1.6" fill="#4f4038" stroke="#463830" stroke-width="0.6"/><ellipse cx="69.3" cy="108.6" rx="7.9" ry="1.6" fill="#4f4038" stroke="#463830" stroke-width="0.6"/><ellipse cx="65.9" cy="81.6" rx="4.1" ry="1.6" fill="#4f4038" stroke="#463830" stroke-width="0.6"/><ellipse cx="125.7" cy="107.2" rx="3.6" ry="1.6" fill="#4f4038" stroke="#463830" stroke-width="0.6"/><ellipse cx="114.4" cy="87.1" rx="5.1" ry="1.6" fill="#4f4038" stroke="#463830" stroke-width="0.6"/><ellipse cx="25.9" cy="106.5" rx="8.0" ry="1.6" fill="#4f4038" stroke="#463830" stroke-width="0.6"/><ellipse cx="29.9" cy="97.4" rx="3.6" ry="1.6" fill="#4f4038" stroke="#463830" stroke-width="0.6"/><ellipse cx="120.1" cy="75.9" rx="3.1" ry="1.6" fill="#4f4038" stroke="#463830" stroke-width="0.6"/><ellipse cx="99.5" cy="85.6" rx="7.5" ry="1.6" fill="#4f4038" stroke="#463830" stroke-width="0.6"/><ellipse cx="118.7" cy="100.4" rx="3.2" ry="1.6" fill="#4f4038" stroke="#463830" stroke-width="0.6"/><ellipse cx="95.6" cy="108.7" rx="4.9" ry="1.6" fill="#4f4038" stroke="#463830" stroke-width="0.6"/><ellipse cx="13.5" cy="82.3" rx="4.2" ry="1.6" fill="#4f4038" stroke="#463830" stroke-width="0.6"/><ellipse cx="97.5" cy="81.3" rx="3.5" ry="1.6" fill="#4f4038" stroke="#463830" stroke-width="0.6"/><rect x="0" y="69" width="139" height="1" fill="#000" opacity="0.12"/><rect x="0" y="116" width="139" height="95" fill="#ecc174"/><circle cx="33.3" cy="178.8" r="0.94" fill="#a27940" opacity="0.7"/><circle cx="52.0" cy="178.6" r="1.01" fill="#a27940" opacity="0.7"/><circle cx="81.8" cy="138.3" r="0.58" fill="#a27940" opacity="0.7"/><circle cx="128.0" cy="179.0" r="0.56" fill="#a27940" opacity="0.7"/><circle cx="88.7" cy="125.4" r="1.09" fill="#a27940" opacity="0.7"/><circle cx="61.3" cy="166.1" r="0.75" fill="#a27940" opacity="0.7"/><circle cx="7.2" cy="172.8" r="0.56" fill="#a27940" opacity="0.7"/><circle cx="35.4" cy="191.7" r="0.42" fill="#a27940" opacity="0.7"/><circle cx="40.1" cy="187.3" r="0.53" fill="#a27940" opacity="0.7"/><circle cx="39.2" cy="168.0" r="0.49" fill="#a27940" opacity="0.7"/><circle cx="123.9" cy="208.9" r="0.38" fill="#a27940" opacity="0.7"/><circle cx="64.2" cy="186.8" r="0.64" fill="#a27940" opacity="0.7"/><circle cx="128.3" cy="163.5" r="0.48" fill="#a27940" opacity="0.7"/><circle cx="77.2" cy="177.0" r="0.62" fill="#a27940" opacity="0.7"/><circle cx="91.2" cy="189.8" r="0.74" fill="#a27940" opacity="0.7"/><circle cx="70.3" cy="195.6" r="0.86" fill="#a27940" opacity="0.7"/><circle cx="72.3" cy="205.5" r="0.48" fill="#a27940" opacity="0.7"/><circle cx="107.8" cy="132.4" r="0.81" fill="#a27940" opacity="0.7"/><circle cx="33.2" cy="158.0" r="0.93" fill="#a27940" opacity="0.7"/><circle cx="108.8" cy="190.6" r="0.53" fill="#a27940" opacity="0.7"/><circle cx="68.0" cy="137.6" r="0.79" fill="#a27940" opacity="0.7"/><circle cx="69.4" cy="120.3" r="0.80" fill="#a27940" opacity="0.7"/><circle cx="98.9" cy="170.3" r="1.00" fill="#a27940" opacity="0.7"/><circle cx="25.7" cy="131.1" r="0.36" fill="#a27940" opacity="0.7"/><circle cx="69.0" cy="157.4" r="0.68" fill="#a27940" opacity="0.7"/><circle cx="37.0" cy="191.3" r="0.40" fill="#a27940" opacity="0.7"/><circle cx="125.3" cy="169.9" r="0.76" fill="#a27940" opacity="0.7"/><circle cx="109.5" cy="139.1" r="0.46" fill="#a27940" opacity="0.7"/><circle cx="43.6" cy="120.9" r="0.59" fill="#a27940" opacity="0.7"/><circle cx="86.1" cy="165.9" r="0.55" fill="#a27940" opacity="0.7"/><circle cx="81.7" cy="125.2" r="0.97" fill="#a27940" opacity="0.7"/><circle cx="24.5" cy="140.7" r="0.47" fill="#a27940" opacity="0.7"/><circle cx="95.6" cy="194.3" r="0.94" fill="#a27940" opacity="0.7"/><circle cx="9.4" cy="155.2" r="0.62" fill="#a27940" opacity="0.7"/><circle cx="30.6" cy="207.3" r="0.38" fill="#a27940" opacity="0.7"/><circle cx="68.1" cy="187.8" r="1.09" fill="#a27940" opacity="0.7"/><circle cx="20.8" cy="159.3" r="0.91" fill="#a27940" opacity="0.7"/><circle cx="6.4" cy="139.4" r="1.02" fill="#a27940" opacity="0.7"/><circle cx="20.4" cy="153.5" r="0.57" fill="#a27940" opacity="0.7"/><circle cx="59.1" cy="124.1" r="0.38" fill="#a27940" opacity="0.7"/><circle cx="137.5" cy="188.0" r="0.90" fill="#a27940" opacity="0.7"/><circle cx="32.5" cy="140.5" r="0.76" fill="#a27940" opacity="0.7"/><circle cx="34.1" cy="159.9" r="1.05" fill="#a27940" opacity="0.7"/><circle cx="50.9" cy="148.3" r="1.09" fill="#a27940" opacity="0.7"/><circle cx="84.7" cy="120.7" r="0.65" fill="#a27940" opacity="0.7"/><circle cx="90.0" cy="122.4" r="0.61" fill="#a27940" opacity="0.7"/><circle cx="96.2" cy="197.4" r="0.79" fill="#a27940" opacity="0.7"/><circle cx="122.4" cy="160.0" r="0.64" fill="#a27940" opacity="0.7"/><circle cx="116.5" cy="152.4" r="0.94" fill="#a27940" opacity="0.7"/><circle cx="30.5" cy="149.3" r="0.49" fill="#a27940" opacity="0.7"/><circle cx="76.3" cy="132.2" r="0.50" fill="#a27940" opacity="0.7"/><circle cx="30.4" cy="160.5" r="0.58" fill="#a27940" opacity="0.7"/><circle cx="62.3" cy="209.4" r="0.86" fill="#a27940" opacity="0.7"/><circle cx="119.2" cy="136.0" r="0.64" fill="#a27940" opacity="0.7"/><circle cx="11.0" cy="181.3" r="0.62" fill="#a27940" opacity="0.7"/><circle cx="38.6" cy="118.7" r="0.49" fill="#a27940" opacity="0.7"/><circle cx="36.9" cy="153.5" r="1.04" fill="#a27940" opacity="0.7"/><circle cx="99.0" cy="142.0" r="0.62" fill="#a27940" opacity="0.7"/><circle cx="22.0" cy="204.1" r="0.62" fill="#a27940" opacity="0.7"/><circle cx="105.9" cy="184.3" r="1.03" fill="#a27940" opacity="0.7"/><circle cx="3.8" cy="147.0" r="0.64" fill="#a27940" opacity="0.7"/><circle cx="12.4" cy="199.1" r="0.59" fill="#a27940" opacity="0.7"/><circle cx="106.6" cy="165.3" r="0.39" fill="#a27940" opacity="0.7"/><circle cx="55.0" cy="139.2" r="0.38" fill="#a27940" opacity="0.7"/><circle cx="21.7" cy="172.4" r="0.37" fill="#a27940" opacity="0.7"/><circle cx="43.8" cy="156.4" r="0.76" fill="#a27940" opacity="0.7"/><circle cx="19.6" cy="182.7" r="0.55" fill="#a27940" opacity="0.7"/><circle cx="100.4" cy="179.0" r="0.46" fill="#a27940" opacity="0.7"/><circle cx="29.1" cy="143.1" r="0.88" fill="#a27940" opacity="0.7"/><circle cx="56.5" cy="152.9" r="1.00" fill="#a27940" opacity="0.7"/><circle cx="32.0" cy="144.2" r="0.61" fill="#a27940" opacity="0.7"/><circle cx="30.6" cy="120.8" r="0.37" fill="#a27940" opacity="0.7"/><circle cx="87.4" cy="169.6" r="0.96" fill="#a27940" opacity="0.7"/><circle cx="134.7" cy="144.7" r="0.85" fill="#a27940" opacity="0.7"/><circle cx="126.9" cy="137.1" r="0.87" fill="#a27940" opacity="0.7"/><circle cx="92.3" cy="205.8" r="1.00" fill="#a27940" opacity="0.7"/><circle cx="33.1" cy="175.8" r="0.42" fill="#a27940" opacity="0.7"/><circle cx="59.6" cy="153.5" r="0.40" fill="#a27940" opacity="0.7"/><circle cx="53.5" cy="147.5" r="0.72" fill="#a27940" opacity="0.7"/><circle cx="39.3" cy="131.7" r="0.65" fill="#a27940" opacity="0.7"/><circle cx="66.1" cy="132.5" r="0.85" fill="#a27940" opacity="0.7"/><circle cx="33.9" cy="125.7" r="0.61" fill="#a27940" opacity="0.7"/><circle cx="58.9" cy="131.0" r="0.79" fill="#a27940" opacity="0.7"/><circle cx="97.1" cy="168.4" r="0.88" fill="#a27940" opacity="0.7"/><circle cx="4.2" cy="153.4" r="0.62" fill="#a27940" opacity="0.7"/><circle cx="9.6" cy="154.6" r="0.39" fill="#a27940" opacity="0.7"/><circle cx="68.9" cy="171.5" r="0.70" fill="#a27940" opacity="0.7"/><circle cx="45.6" cy="140.6" r="0.37" fill="#a27940" opacity="0.7"/><circle cx="48.6" cy="199.9" r="0.77" fill="#a27940" opacity="0.7"/><circle cx="36.9" cy="179.1" r="0.49" fill="#a27940" opacity="0.7"/><circle cx="65.3" cy="174.2" r="1.07" fill="#a27940" opacity="0.7"/><circle cx="50.7" cy="170.6" r="1.06" fill="#a27940" opacity="0.7"/><circle cx="106.7" cy="175.3" r="0.82" fill="#a27940" opacity="0.7"/><circle cx="57.3" cy="155.6" r="0.56" fill="#a27940" opacity="0.7"/><circle cx="114.7" cy="198.8" r="0.64" fill="#a27940" opacity="0.7"/><circle cx="125.6" cy="120.5" r="0.45" fill="#a27940" opacity="0.7"/><circle cx="70.5" cy="145.7" r="0.62" fill="#a27940" opacity="0.7"/><circle cx="134.8" cy="130.9" r="0.49" fill="#a27940" opacity="0.7"/><circle cx="32.3" cy="180.3" r="0.53" fill="#a27940" opacity="0.7"/><circle cx="1.1" cy="167.6" r="0.65" fill="#a27940" opacity="0.7"/><circle cx="33.8" cy="162.9" r="0.84" fill="#a27940" opacity="0.7"/><circle cx="76.1" cy="175.1" r="0.77" fill="#a27940" opacity="0.7"/><circle cx="114.9" cy="207.1" r="0.60" fill="#a27940" opacity="0.7"/><circle cx="48.5" cy="199.4" r="0.59" fill="#a27940" opacity="0.7"/><circle cx="99.1" cy="181.7" r="0.86" fill="#a27940" opacity="0.7"/><circle cx="133.1" cy="193.7" r="0.47" fill="#a27940" opacity="0.7"/><circle cx="86.2" cy="162.6" r="0.77" fill="#a27940" opacity="0.7"/><circle cx="51.6" cy="143.6" r="0.91" fill="#a27940" opacity="0.7"/><circle cx="74.2" cy="139.0" r="0.54" fill="#a27940" opacity="0.7"/><circle cx="45.5" cy="133.5" r="0.74" fill="#a27940" opacity="0.7"/><circle cx="18.3" cy="122.9" r="0.40" fill="#a27940" opacity="0.7"/><circle cx="15.0" cy="182.5" r="0.43" fill="#a27940" opacity="0.7"/><circle cx="62.9" cy="188.8" r="0.71" fill="#a27940" opacity="0.7"/><circle cx="23.3" cy="197.6" r="1.00" fill="#a27940" opacity="0.7"/><circle cx="8.3" cy="140.6" r="0.73" fill="#a27940" opacity="0.7"/><circle cx="110.1" cy="153.5" r="0.89" fill="#a27940" opacity="0.7"/><circle cx="35.5" cy="183.6" r="0.60" fill="#a27940" opacity="0.7"/><circle cx="46.7" cy="187.6" r="0.98" fill="#a27940" opacity="0.7"/><circle cx="114.5" cy="169.8" r="0.67" fill="#a27940" opacity="0.7"/><circle cx="97.8" cy="174.9" r="0.97" fill="#a27940" opacity="0.7"/><circle cx="110.8" cy="128.6" r="0.63" fill="#a27940" opacity="0.7"/><circle cx="92.7" cy="138.5" r="0.49" fill="#a27940" opacity="0.7"/><circle cx="2.9" cy="171.5" r="1.06" fill="#a27940" opacity="0.7"/><circle cx="133.9" cy="129.4" r="0.87" fill="#a27940" opacity="0.7"/><circle cx="58.4" cy="175.7" r="0.65" fill="#a27940" opacity="0.7"/><circle cx="128.9" cy="209.0" r="0.39" fill="#a27940" opacity="0.7"/><circle cx="98.7" cy="128.0" r="0.38" fill="#a27940" opacity="0.7"/><circle cx="40.2" cy="185.0" r="1.10" fill="#a27940" opacity="0.7"/><circle cx="17.5" cy="147.7" r="0.37" fill="#a27940" opacity="0.7"/><circle cx="75.3" cy="161.9" r="0.63" fill="#a27940" opacity="0.7"/><circle cx="43.4" cy="191.4" r="0.98" fill="#a27940" opacity="0.7"/><circle cx="39.9" cy="153.4" r="0.81" fill="#a27940" opacity="0.7"/><circle cx="105.9" cy="208.2" r="0.64" fill="#a27940" opacity="0.7"/><circle cx="96.1" cy="167.8" r="0.95" fill="#a27940" opacity="0.7"/><circle cx="21.1" cy="133.3" r="0.43" fill="#a27940" opacity="0.7"/><circle cx="128.9" cy="140.4" r="0.72" fill="#a27940" opacity="0.7"/><circle cx="17.5" cy="147.1" r="0.36" fill="#a27940" opacity="0.7"/><circle cx="78.5" cy="130.4" r="0.82" fill="#a27940" opacity="0.7"/><circle cx="38.5" cy="138.2" r="0.71" fill="#a27940" opacity="0.7"/><circle cx="51.1" cy="141.1" r="0.39" fill="#a27940" opacity="0.7"/><circle cx="9.8" cy="200.0" r="0.58" fill="#a27940" opacity="0.7"/><circle cx="11.7" cy="134.0" r="0.71" fill="#a27940" opacity="0.7"/><circle cx="137.6" cy="135.8" r="1.00" fill="#a27940" opacity="0.7"/><circle cx="67.3" cy="155.6" r="0.96" fill="#a27940" opacity="0.7"/><circle cx="55.2" cy="122.4" r="0.76" fill="#a27940" opacity="0.7"/><circle cx="91.0" cy="174.9" r="0.56" fill="#a27940" opacity="0.7"/><circle cx="129.6" cy="197.4" r="1.10" fill="#a27940" opacity="0.7"/><circle cx="61.7" cy="194.5" r="0.89" fill="#a27940" opacity="0.7"/><circle cx="25.1" cy="119.5" r="0.48" fill="#a27940" opacity="0.7"/><circle cx="17.3" cy="123.9" r="0.62" fill="#a27940" opacity="0.7"/><circle cx="104.2" cy="145.8" r="0.74" fill="#a27940" opacity="0.7"/><circle cx="2.4" cy="136.5" r="1.07" fill="#a27940" opacity="0.7"/><circle cx="2.5" cy="166.0" r="0.96" fill="#a27940" opacity="0.7"/><circle cx="109.5" cy="185.4" r="0.65" fill="#a27940" opacity="0.7"/><circle cx="111.0" cy="194.0" r="0.93" fill="#a27940" opacity="0.7"/><circle cx="136.1" cy="126.4" r="1.06" fill="#a27940" opacity="0.7"/><circle cx="56.1" cy="182.6" r="0.54" fill="#a27940" opacity="0.7"/><circle cx="125.6" cy="119.2" r="0.78" fill="#a27940" opacity="0.7"/><circle cx="32.1" cy="153.1" r="0.63" fill="#a27940" opacity="0.7"/><circle cx="91.0" cy="192.4" r="0.62" fill="#a27940" opacity="0.7"/><circle cx="88.4" cy="149.9" r="0.56" fill="#a27940" opacity="0.7"/><circle cx="125.0" cy="146.9" r="0.42" fill="#a27940" opacity="0.7"/><circle cx="46.9" cy="186.0" r="0.51" fill="#a27940" opacity="0.7"/><circle cx="102.8" cy="167.8" r="0.86" fill="#a27940" opacity="0.7"/><circle cx="25.3" cy="126.8" r="0.46" fill="#a27940" opacity="0.7"/><circle cx="49.0" cy="157.1" r="0.36" fill="#a27940" opacity="0.7"/><circle cx="69.9" cy="154.5" r="0.59" fill="#a27940" opacity="0.7"/><circle cx="74.6" cy="205.6" r="0.50" fill="#a27940" opacity="0.7"/><circle cx="121.6" cy="146.8" r="0.92" fill="#a27940" opacity="0.7"/><circle cx="15.8" cy="208.8" r="0.67" fill="#a27940" opacity="0.7"/><circle cx="132.9" cy="137.4" r="0.66" fill="#a27940" opacity="0.7"/><circle cx="97.7" cy="133.5" r="0.56" fill="#a27940" opacity="0.7"/><circle cx="93.8" cy="205.1" r="0.59" fill="#a27940" opacity="0.7"/><circle cx="26.1" cy="150.2" r="1.09" fill="#a27940" opacity="0.7"/><circle cx="21.3" cy="176.0" r="0.63" fill="#a27940" opacity="0.7"/><circle cx="89.2" cy="136.7" r="0.81" fill="#a27940" opacity="0.7"/><circle cx="122.6" cy="196.6" r="0.82" fill="#a27940" opacity="0.7"/><circle cx="70.2" cy="169.8" r="0.44" fill="#a27940" opacity="0.7"/><circle cx="115.7" cy="181.2" r="0.69" fill="#a27940" opacity="0.7"/><circle cx="92.2" cy="156.0" r="0.64" fill="#a27940" opacity="0.7"/><circle cx="32.5" cy="172.9" r="0.78" fill="#a27940" opacity="0.7"/><circle cx="71.6" cy="120.0" r="0.82" fill="#a27940" opacity="0.7"/><circle cx="62.2" cy="172.2" r="0.80" fill="#a27940" opacity="0.7"/><circle cx="128.6" cy="131.1" r="0.70" fill="#a27940" opacity="0.7"/><circle cx="137.0" cy="185.6" r="0.58" fill="#a27940" opacity="0.7"/><circle cx="101.9" cy="209.0" r="0.65" fill="#a27940" opacity="0.7"/><circle cx="119.8" cy="128.8" r="1.09" fill="#a27940" opacity="0.7"/><circle cx="68.3" cy="138.8" r="0.98" fill="#a27940" opacity="0.7"/><circle cx="89.9" cy="204.2" r="0.97" fill="#a27940" opacity="0.7"/><circle cx="110.3" cy="164.6" r="1.10" fill="#a27940" opacity="0.7"/><circle cx="9.9" cy="197.9" r="0.88" fill="#a27940" opacity="0.7"/><circle cx="35.3" cy="192.1" r="0.69" fill="#a27940" opacity="0.7"/><circle cx="74.5" cy="197.5" r="0.50" fill="#a27940" opacity="0.7"/><circle cx="39.3" cy="176.9" r="0.41" fill="#a27940" opacity="0.7"/><circle cx="77.0" cy="190.2" r="0.72" fill="#a27940" opacity="0.7"/><circle cx="34.1" cy="191.4" r="0.99" fill="#a27940" opacity="0.7"/><circle cx="106.6" cy="168.1" r="1.03" fill="#a27940" opacity="0.7"/><circle cx="110.2" cy="131.1" r="0.62" fill="#a27940" opacity="0.7"/><circle cx="14.7" cy="120.4" r="0.61" fill="#a27940" opacity="0.7"/><circle cx="119.5" cy="194.6" r="0.44" fill="#a27940" opacity="0.7"/><circle cx="25.9" cy="153.1" r="0.99" fill="#a27940" opacity="0.7"/><circle cx="85.5" cy="200.9" r="0.40" fill="#a27940" opacity="0.7"/><circle cx="136.3" cy="136.2" r="0.82" fill="#a27940" opacity="0.7"/><circle cx="121.1" cy="184.7" r="0.50" fill="#a27940" opacity="0.7"/><circle cx="92.6" cy="157.1" r="0.36" fill="#a27940" opacity="0.7"/><circle cx="47.5" cy="146.3" r="0.82" fill="#a27940" opacity="0.7"/><circle cx="39.2" cy="173.1" r="0.87" fill="#a27940" opacity="0.7"/><circle cx="25.8" cy="128.9" r="0.87" fill="#a27940" opacity="0.7"/><circle cx="64.9" cy="129.0" r="0.44" fill="#a27940" opacity="0.7"/><circle cx="129.9" cy="173.7" r="0.62" fill="#a27940" opacity="0.7"/><circle cx="27.9" cy="209.5" r="0.87" fill="#a27940" opacity="0.7"/><circle cx="101.9" cy="150.5" r="0.58" fill="#a27940" opacity="0.7"/><circle cx="56.9" cy="130.6" r="0.82" fill="#a27940" opacity="0.7"/><circle cx="59.2" cy="193.3" r="0.66" fill="#a27940" opacity="0.7"/><circle cx="63.6" cy="164.1" r="1.06" fill="#a27940" opacity="0.7"/><circle cx="48.5" cy="182.4" r="0.53" fill="#a27940" opacity="0.7"/><circle cx="80.4" cy="143.5" r="1.00" fill="#a27940" opacity="0.7"/><circle cx="40.2" cy="196.5" r="0.86" fill="#a27940" opacity="0.7"/><circle cx="63.3" cy="203.8" r="0.64" fill="#a27940" opacity="0.7"/><circle cx="102.8" cy="172.9" r="0.69" fill="#a27940" opacity="0.7"/><circle cx="9.8" cy="156.0" r="0.56" fill="#a27940" opacity="0.7"/><circle cx="61.4" cy="205.8" r="0.57" fill="#a27940" opacity="0.7"/><circle cx="96.2" cy="179.5" r="0.53" fill="#a27940" opacity="0.7"/><circle cx="57.4" cy="129.3" r="1.02" fill="#a27940" opacity="0.7"/><circle cx="35.5" cy="156.1" r="0.61" fill="#a27940" opacity="0.7"/><circle cx="113.4" cy="196.1" r="0.79" fill="#a27940" opacity="0.7"/><circle cx="75.8" cy="126.2" r="1.02" fill="#a27940" opacity="0.7"/><circle cx="13.1" cy="150.8" r="0.63" fill="#a27940" opacity="0.7"/><circle cx="100.1" cy="179.2" r="0.61" fill="#a27940" opacity="0.7"/><circle cx="124.0" cy="205.3" r="0.37" fill="#a27940" opacity="0.7"/><circle cx="87.7" cy="160.6" r="0.62" fill="#a27940" opacity="0.7"/><circle cx="64.7" cy="146.4" r="0.85" fill="#a27940" opacity="0.7"/><circle cx="84.0" cy="207.2" r="1.08" fill="#a27940" opacity="0.7"/><circle cx="137.0" cy="153.7" r="0.97" fill="#a27940" opacity="0.7"/><circle cx="90.0" cy="182.2" r="1.10" fill="#a27940" opacity="0.7"/><circle cx="10.1" cy="160.0" r="0.65" fill="#a27940" opacity="0.7"/><circle cx="90.9" cy="137.3" r="1.09" fill="#a27940" opacity="0.7"/><circle cx="29.7" cy="151.4" r="0.46" fill="#a27940" opacity="0.7"/><circle cx="55.1" cy="186.0" r="0.41" fill="#a27940" opacity="0.7"/><circle cx="23.9" cy="177.4" r="0.82" fill="#a27940" opacity="0.7"/><circle cx="102.7" cy="140.6" r="0.96" fill="#a27940" opacity="0.7"/><circle cx="101.1" cy="189.2" r="0.44" fill="#a27940" opacity="0.7"/><circle cx="65.2" cy="118.5" r="0.99" fill="#a27940" opacity="0.7"/><circle cx="130.4" cy="200.3" r="0.37" fill="#a27940" opacity="0.7"/><circle cx="49.1" cy="166.8" r="0.75" fill="#a27940" opacity="0.7"/><circle cx="16.2" cy="190.4" r="0.58" fill="#a27940" opacity="0.7"/><circle cx="70.5" cy="128.6" r="0.78" fill="#a27940" opacity="0.7"/><circle cx="18.8" cy="125.2" r="0.73" fill="#a27940" opacity="0.7"/><circle cx="41.3" cy="189.3" r="0.54" fill="#a27940" opacity="0.7"/><circle cx="57.7" cy="122.0" r="0.51" fill="#a27940" opacity="0.7"/><circle cx="62.9" cy="168.9" r="0.69" fill="#a27940" opacity="0.7"/><circle cx="117.6" cy="126.7" r="0.99" fill="#a27940" opacity="0.7"/><circle cx="22.2" cy="207.2" r="0.74" fill="#a27940" opacity="0.7"/><circle cx="56.7" cy="173.9" r="1.00" fill="#a27940" opacity="0.7"/><circle cx="133.0" cy="155.4" r="0.36" fill="#a27940" opacity="0.7"/><circle cx="22.1" cy="193.1" r="0.90" fill="#a27940" opacity="0.7"/><circle cx="98.6" cy="131.6" r="0.75" fill="#a27940" opacity="0.7"/><circle cx="4.9" cy="127.3" r="0.58" fill="#a27940" opacity="0.7"/><circle cx="133.4" cy="176.8" r="0.99" fill="#a27940" opacity="0.7"/><circle cx="7.3" cy="155.7" r="0.41" fill="#a27940" opacity="0.7"/><circle cx="36.7" cy="127.4" r="1.04" fill="#a27940" opacity="0.7"/><circle cx="46.0" cy="162.5" r="0.84" fill="#a27940" opacity="0.7"/><circle cx="122.5" cy="205.0" r="0.78" fill="#a27940" opacity="0.7"/><circle cx="69.6" cy="201.1" r="0.65" fill="#a27940" opacity="0.7"/><circle cx="42.0" cy="185.8" r="0.54" fill="#a27940" opacity="0.7"/><circle cx="51.4" cy="156.9" r="0.71" fill="#a27940" opacity="0.7"/><circle cx="50.1" cy="157.0" r="0.69" fill="#a27940" opacity="0.7"/><circle cx="7.8" cy="194.7" r="0.40" fill="#a27940" opacity="0.7"/><circle cx="73.3" cy="167.9" r="0.65" fill="#a27940" opacity="0.7"/><circle cx="31.5" cy="126.2" r="0.63" fill="#a27940" opacity="0.7"/><circle cx="44.1" cy="162.0" r="0.52" fill="#a27940" opacity="0.7"/><circle cx="103.7" cy="162.3" r="0.36" fill="#a27940" opacity="0.7"/><circle cx="56.7" cy="206.9" r="0.36" fill="#a27940" opacity="0.7"/><circle cx="82.3" cy="206.4" r="0.62" fill="#a27940" opacity="0.7"/><circle cx="82.9" cy="151.3" r="0.58" fill="#a27940" opacity="0.7"/><circle cx="84.5" cy="171.8" r="0.59" fill="#a27940" opacity="0.7"/><circle cx="69.2" cy="165.0" r="0.92" fill="#a27940" opacity="0.7"/><circle cx="8.3" cy="125.6" r="0.54" fill="#a27940" opacity="0.7"/><circle cx="38.0" cy="191.0" r="0.67" fill="#a27940" opacity="0.7"/><circle cx="118.8" cy="154.4" r="0.56" fill="#a27940" opacity="0.7"/><circle cx="94.1" cy="124.9" r="1.09" fill="#a27940" opacity="0.7"/><circle cx="114.9" cy="147.5" r="0.59" fill="#a27940" opacity="0.7"/><circle cx="113.3" cy="190.3" r="0.83" fill="#a27940" opacity="0.7"/><circle cx="8.8" cy="188.0" r="0.39" fill="#a27940" opacity="0.7"/><circle cx="86.6" cy="168.3" r="1.05" fill="#a27940" opacity="0.7"/><circle cx="88.5" cy="119.1" r="1.05" fill="#a27940" opacity="0.7"/><circle cx="104.1" cy="170.9" r="0.35" fill="#a27940" opacity="0.7"/><circle cx="102.0" cy="155.9" r="0.86" fill="#a27940" opacity="0.7"/><circle cx="135.8" cy="202.3" r="0.41" fill="#a27940" opacity="0.7"/><circle cx="108.1" cy="158.0" r="0.91" fill="#a27940" opacity="0.7"/><circle cx="52.8" cy="158.6" r="0.68" fill="#a27940" opacity="0.7"/><circle cx="17.2" cy="146.8" r="0.90" fill="#a27940" opacity="0.7"/><circle cx="10.8" cy="127.8" r="0.98" fill="#a27940" opacity="0.7"/><circle cx="92.3" cy="168.0" r="0.43" fill="#a27940" opacity="0.7"/><circle cx="17.2" cy="145.8" r="1.07" fill="#a27940" opacity="0.7"/><circle cx="77.7" cy="202.8" r="0.51" fill="#a27940" opacity="0.7"/><circle cx="57.8" cy="166.9" r="0.98" fill="#a27940" opacity="0.7"/><circle cx="17.9" cy="198.3" r="0.70" fill="#a27940" opacity="0.7"/><circle cx="5.3" cy="157.2" r="0.63" fill="#a27940" opacity="0.7"/><circle cx="93.4" cy="203.3" r="0.72" fill="#a27940" opacity="0.7"/><circle cx="95.5" cy="153.1" r="0.93" fill="#a27940" opacity="0.7"/><circle cx="15.4" cy="186.0" r="0.47" fill="#a27940" opacity="0.7"/><circle cx="81.3" cy="135.8" r="0.61" fill="#a27940" opacity="0.7"/><circle cx="23.4" cy="149.5" r="0.79" fill="#a27940" opacity="0.7"/><circle cx="72.2" cy="153.1" r="0.78" fill="#a27940" opacity="0.7"/><circle cx="116.4" cy="150.3" r="0.79" fill="#a27940" opacity="0.7"/><circle cx="66.8" cy="208.2" r="0.60" fill="#a27940" opacity="0.7"/><circle cx="96.5" cy="138.7" r="0.55" fill="#a27940" opacity="0.7"/><circle cx="101.1" cy="170.5" r="0.54" fill="#a27940" opacity="0.7"/><circle cx="9.8" cy="193.7" r="0.63" fill="#a27940" opacity="0.7"/><circle cx="99.2" cy="157.2" r="0.81" fill="#a27940" opacity="0.7"/><circle cx="77.7" cy="207.7" r="1.03" fill="#a27940" opacity="0.7"/><circle cx="63.4" cy="162.3" r="0.52" fill="#a27940" opacity="0.7"/><circle cx="104.2" cy="126.5" r="0.58" fill="#a27940" opacity="0.7"/><circle cx="117.1" cy="120.3" r="0.87" fill="#a27940" opacity="0.7"/><circle cx="78.8" cy="168.3" r="0.60" fill="#a27940" opacity="0.7"/><circle cx="21.8" cy="205.4" r="0.92" fill="#a27940" opacity="0.7"/><circle cx="111.4" cy="126.1" r="0.94" fill="#a27940" opacity="0.7"/><circle cx="30.9" cy="135.5" r="0.75" fill="#a27940" opacity="0.7"/><circle cx="84.5" cy="128.2" r="0.92" fill="#a27940" opacity="0.7"/><circle cx="80.8" cy="200.6" r="1.04" fill="#a27940" opacity="0.7"/><circle cx="95.4" cy="150.9" r="1.06" fill="#a27940" opacity="0.7"/><circle cx="99.4" cy="144.1" r="0.99" fill="#a27940" opacity="0.7"/><circle cx="100.6" cy="141.6" r="0.54" fill="#a27940" opacity="0.7"/><circle cx="3.8" cy="167.0" r="0.54" fill="#a27940" opacity="0.7"/><circle cx="41.1" cy="140.5" r="0.45" fill="#a27940" opacity="0.7"/><circle cx="67.4" cy="142.4" r="0.56" fill="#a27940" opacity="0.7"/><circle cx="39.0" cy="164.4" r="1.01" fill="#a27940" opacity="0.7"/><circle cx="22.9" cy="196.9" r="0.99" fill="#a27940" opacity="0.7"/><circle cx="84.5" cy="167.6" r="0.90" fill="#a27940" opacity="0.7"/><circle cx="74.2" cy="178.4" r="1.04" fill="#a27940" opacity="0.7"/><circle cx="107.2" cy="141.2" r="0.39" fill="#a27940" opacity="0.7"/><circle cx="129.3" cy="150.7" r="0.94" fill="#a27940" opacity="0.7"/><circle cx="33.0" cy="159.1" r="0.63" fill="#a27940" opacity="0.7"/><circle cx="100.9" cy="204.8" r="0.73" fill="#a27940" opacity="0.7"/><circle cx="78.5" cy="149.4" r="0.52" fill="#a27940" opacity="0.7"/><circle cx="131.1" cy="127.3" r="1.06" fill="#a27940" opacity="0.7"/><circle cx="91.0" cy="123.7" r="1.03" fill="#a27940" opacity="0.7"/><circle cx="15.0" cy="169.6" r="0.44" fill="#a27940" opacity="0.7"/><circle cx="136.5" cy="145.8" r="1.00" fill="#a27940" opacity="0.7"/><circle cx="9.4" cy="179.0" r="0.40" fill="#a27940" opacity="0.7"/><circle cx="5.1" cy="170.1" r="1.09" fill="#a27940" opacity="0.7"/><circle cx="94.9" cy="196.5" r="0.94" fill="#a27940" opacity="0.7"/><circle cx="72.4" cy="124.2" r="0.75" fill="#a27940" opacity="0.7"/><circle cx="26.3" cy="166.0" r="0.62" fill="#a27940" opacity="0.7"/><circle cx="69.4" cy="135.4" r="0.88" fill="#a27940" opacity="0.7"/><circle cx="58.2" cy="162.2" r="0.41" fill="#a27940" opacity="0.7"/><circle cx="67.7" cy="168.9" r="1.08" fill="#a27940" opacity="0.7"/><circle cx="77.9" cy="129.5" r="0.58" fill="#a27940" opacity="0.7"/><circle cx="47.0" cy="182.3" r="1.05" fill="#a27940" opacity="0.7"/><circle cx="134.7" cy="205.3" r="1.04" fill="#a27940" opacity="0.7"/><circle cx="118.6" cy="204.0" r="0.37" fill="#a27940" opacity="0.7"/><circle cx="68.1" cy="171.9" r="0.86" fill="#a27940" opacity="0.7"/><circle cx="84.9" cy="174.0" r="1.05" fill="#a27940" opacity="0.7"/><circle cx="12.8" cy="165.3" r="1.07" fill="#a27940" opacity="0.7"/><circle cx="5.4" cy="127.4" r="1.00" fill="#a27940" opacity="0.7"/><circle cx="132.1" cy="119.2" r="0.37" fill="#a27940" opacity="0.7"/><circle cx="114.7" cy="181.0" r="0.74" fill="#a27940" opacity="0.7"/><circle cx="80.5" cy="187.4" r="0.96" fill="#a27940" opacity="0.7"/><circle cx="1.1" cy="123.3" r="0.95" fill="#a27940" opacity="0.7"/><circle cx="134.6" cy="194.5" r="0.66" fill="#a27940" opacity="0.7"/><circle cx="47.0" cy="149.2" r="0.36" fill="#a27940" opacity="0.7"/><circle cx="106.5" cy="141.4" r="0.79" fill="#a27940" opacity="0.7"/><circle cx="73.1" cy="148.2" r="0.86" fill="#a27940" opacity="0.7"/><circle cx="63.3" cy="138.8" r="1.01" fill="#a27940" opacity="0.7"/><circle cx="25.1" cy="130.9" r="0.54" fill="#a27940" opacity="0.7"/><circle cx="66.6" cy="189.9" r="0.60" fill="#a27940" opacity="0.7"/><circle cx="33.6" cy="177.9" r="0.55" fill="#a27940" opacity="0.7"/><circle cx="72.6" cy="140.7" r="1.01" fill="#a27940" opacity="0.7"/><circle cx="26.3" cy="138.6" r="0.58" fill="#a27940" opacity="0.7"/><circle cx="46.2" cy="184.6" r="0.86" fill="#a27940" opacity="0.7"/><circle cx="109.3" cy="167.2" r="0.41" fill="#a27940" opacity="0.7"/><circle cx="105.6" cy="139.7" r="0.51" fill="#a27940" opacity="0.7"/><circle cx="57.8" cy="209.1" r="0.63" fill="#a27940" opacity="0.7"/><circle cx="49.8" cy="201.7" r="1.09" fill="#a27940" opacity="0.7"/><circle cx="54.0" cy="129.6" r="0.94" fill="#a27940" opacity="0.7"/><circle cx="108.2" cy="148.4" r="0.94" fill="#a27940" opacity="0.7"/><circle cx="53.0" cy="143.7" r="0.79" fill="#a27940" opacity="0.7"/><circle cx="102.6" cy="161.3" r="0.96" fill="#a27940" opacity="0.7"/><circle cx="2.9" cy="163.4" r="0.64" fill="#a27940" opacity="0.7"/><circle cx="9.9" cy="202.1" r="0.46" fill="#a27940" opacity="0.7"/><circle cx="29.2" cy="198.7" r="1.07" fill="#a27940" opacity="0.7"/><circle cx="128.6" cy="148.8" r="1.05" fill="#a27940" opacity="0.7"/><circle cx="20.4" cy="183.5" r="1.06" fill="#a27940" opacity="0.7"/><circle cx="27.4" cy="129.6" r="0.86" fill="#a27940" opacity="0.7"/><circle cx="121.9" cy="184.6" r="1.06" fill="#a27940" opacity="0.7"/><circle cx="63.2" cy="151.6" r="0.44" fill="#a27940" opacity="0.7"/><circle cx="38.4" cy="204.3" r="0.40" fill="#a27940" opacity="0.7"/><circle cx="26.3" cy="149.3" r="0.39" fill="#a27940" opacity="0.7"/><circle cx="43.1" cy="134.0" r="0.44" fill="#a27940" opacity="0.7"/><circle cx="73.2" cy="167.2" r="0.78" fill="#a27940" opacity="0.7"/><circle cx="105.4" cy="166.0" r="1.06" fill="#a27940" opacity="0.7"/><circle cx="12.2" cy="137.7" r="0.41" fill="#a27940" opacity="0.7"/><circle cx="43.4" cy="187.7" r="1.04" fill="#a27940" opacity="0.7"/><circle cx="70.0" cy="131.9" r="0.60" fill="#a27940" opacity="0.7"/><circle cx="78.9" cy="144.4" r="0.94" fill="#a27940" opacity="0.7"/><circle cx="134.2" cy="159.8" r="0.80" fill="#a27940" opacity="0.7"/><circle cx="116.9" cy="160.2" r="0.49" fill="#a27940" opacity="0.7"/><circle cx="130.3" cy="207.9" r="0.37" fill="#a27940" opacity="0.7"/><circle cx="105.5" cy="154.2" r="0.39" fill="#a27940" opacity="0.7"/><circle cx="23.3" cy="133.1" r="0.90" fill="#a27940" opacity="0.7"/><circle cx="30.0" cy="118.8" r="0.51" fill="#a27940" opacity="0.7"/><circle cx="110.5" cy="163.4" r="0.84" fill="#a27940" opacity="0.7"/><circle cx="64.7" cy="134.0" r="0.36" fill="#a27940" opacity="0.7"/><circle cx="42.7" cy="120.9" r="0.55" fill="#a27940" opacity="0.7"/><circle cx="85.8" cy="151.4" r="0.70" fill="#a27940" opacity="0.7"/><circle cx="86.5" cy="146.5" r="0.62" fill="#a27940" opacity="0.7"/><circle cx="122.1" cy="171.0" r="0.66" fill="#a27940" opacity="0.7"/><circle cx="75.0" cy="159.8" r="0.60" fill="#a27940" opacity="0.7"/><circle cx="126.2" cy="138.7" r="1.05" fill="#a27940" opacity="0.7"/><circle cx="117.9" cy="199.0" r="0.47" fill="#a27940" opacity="0.7"/><circle cx="70.7" cy="208.6" r="0.57" fill="#a27940" opacity="0.7"/><circle cx="24.4" cy="184.3" r="0.53" fill="#a27940" opacity="0.7"/><circle cx="81.0" cy="131.7" r="1.06" fill="#a27940" opacity="0.7"/><circle cx="39.9" cy="126.0" r="0.87" fill="#a27940" opacity="0.7"/><circle cx="48.6" cy="169.0" r="0.72" fill="#a27940" opacity="0.7"/><circle cx="127.4" cy="164.8" r="0.63" fill="#a27940" opacity="0.7"/><circle cx="1.2" cy="163.2" r="0.55" fill="#a27940" opacity="0.7"/><circle cx="79.7" cy="175.8" r="0.70" fill="#a27940" opacity="0.7"/><circle cx="13.3" cy="163.3" r="0.71" fill="#a27940" opacity="0.7"/><circle cx="88.9" cy="207.2" r="0.56" fill="#a27940" opacity="0.7"/><circle cx="61.7" cy="124.9" r="0.95" fill="#a27940" opacity="0.7"/><circle cx="33.1" cy="194.1" r="0.95" fill="#a27940" opacity="0.7"/><circle cx="35.9" cy="201.0" r="0.73" fill="#a27940" opacity="0.7"/><circle cx="59.4" cy="168.6" r="1.06" fill="#a27940" opacity="0.7"/><circle cx="68.1" cy="161.8" r="0.57" fill="#a27940" opacity="0.7"/><circle cx="116.2" cy="163.8" r="0.61" fill="#a27940" opacity="0.7"/><circle cx="27.9" cy="137.0" r="0.98" fill="#a27940" opacity="0.7"/><circle cx="111.1" cy="208.0" r="1.04" fill="#a27940" opacity="0.7"/><circle cx="94.9" cy="191.2" r="0.88" fill="#a27940" opacity="0.7"/><circle cx="111.9" cy="191.5" r="0.48" fill="#a27940" opacity="0.7"/><circle cx="112.6" cy="145.2" r="0.53" fill="#a27940" opacity="0.7"/><circle cx="127.0" cy="119.1" r="0.73" fill="#a27940" opacity="0.7"/><circle cx="48.0" cy="190.6" r="0.81" fill="#a27940" opacity="0.7"/><circle cx="125.8" cy="203.7" r="0.83" fill="#a27940" opacity="0.7"/><circle cx="9.8" cy="179.1" r="0.43" fill="#a27940" opacity="0.7"/><circle cx="135.6" cy="198.0" r="0.58" fill="#a27940" opacity="0.7"/><circle cx="26.5" cy="181.6" r="0.92" fill="#a27940" opacity="0.7"/><circle cx="135.9" cy="174.9" r="0.44" fill="#a27940" opacity="0.7"/><circle cx="100.6" cy="122.4" r="1.00" fill="#a27940" opacity="0.7"/><ellipse cx="105.2" cy="188.9" rx="2.8" ry="1.8" fill="#b08a52" stroke="#80603a" stroke-width="1"/><ellipse cx="128.5" cy="175.9" rx="2.2" ry="1.6" fill="#b08a52" stroke="#80603a" stroke-width="1"/><ellipse cx="50.0" cy="121.0" rx="1.7" ry="2.0" fill="#b08a52" stroke="#80603a" stroke-width="1"/><ellipse cx="33.4" cy="177.2" rx="2.7" ry="1.9" fill="#b08a52" stroke="#80603a" stroke-width="1"/><ellipse cx="71.6" cy="147.1" rx="1.9" ry="1.4" fill="#b08a52" stroke="#80603a" stroke-width="1"/><ellipse cx="89.2" cy="180.1" rx="2.9" ry="1.5" fill="#b08a52" stroke="#80603a" stroke-width="1"/><ellipse cx="126.3" cy="200.1" rx="1.9" ry="2.2" fill="#b08a52" stroke="#80603a" stroke-width="1"/><ellipse cx="85.4" cy="204.7" rx="2.7" ry="1.5" fill="#b08a52" stroke="#80603a" stroke-width="1"/><ellipse cx="40.1" cy="165.5" rx="2.2" ry="1.2" fill="#b08a52" stroke="#80603a" stroke-width="1"/><ellipse cx="117.7" cy="166.7" rx="2.2" ry="1.9" fill="#b08a52" stroke="#80603a" stroke-width="1"/><ellipse cx="36.2" cy="136.7" rx="2.4" ry="1.4" fill="#b08a52" stroke="#80603a" stroke-width="1"/><ellipse cx="46.6" cy="125.2" rx="1.6" ry="1.6" fill="#b08a52" stroke="#80603a" stroke-width="1"/><ellipse cx="73.1" cy="203.5" rx="2.5" ry="1.6" fill="#b08a52" stroke="#80603a" stroke-width="1"/><ellipse cx="57.1" cy="139.9" rx="2.2" ry="2.2" fill="#b08a52" stroke="#80603a" stroke-width="1"/><ellipse cx="19.2" cy="157.5" rx="2.5" ry="2.0" fill="#b08a52" stroke="#80603a" stroke-width="1"/><ellipse cx="76.8" cy="176.1" rx="2.9" ry="2.1" fill="#b08a52" stroke="#80603a" stroke-width="1"/><ellipse cx="36.4" cy="167.2" rx="3.0" ry="1.7" fill="#b08a52" stroke="#80603a" stroke-width="1"/><ellipse cx="28.2" cy="187.2" rx="1.6" ry="1.4" fill="#b08a52" stroke="#80603a" stroke-width="1"/><rect x="0" y="116" width="139" height="1" fill="#000" opacity="0.12"/><rect x="0" y="211" width="139" height="87" fill="#dfdfdb"/><circle cx="76.5" cy="235.2" r="0.67" fill="#b0b0ac" opacity="0.6"/><circle cx="100.6" cy="239.1" r="0.70" fill="#b0b0ac" opacity="0.6"/><circle cx="89.7" cy="272.0" r="0.56" fill="#b0b0ac" opacity="0.6"/><circle cx="60.2" cy="221.1" r="0.56" fill="#b0b0ac" opacity="0.6"/><circle cx="131.8" cy="287.5" r="0.38" fill="#b0b0ac" opacity="0.6"/><circle cx="10.7" cy="234.9" r="0.66" fill="#b0b0ac" opacity="0.6"/><circle cx="61.0" cy="222.9" r="0.54" fill="#b0b0ac" opacity="0.6"/><circle cx="79.5" cy="275.3" r="0.53" fill="#b0b0ac" opacity="0.6"/><circle cx="90.0" cy="269.9" r="0.63" fill="#b0b0ac" opacity="0.6"/><circle cx="7.4" cy="272.4" r="0.41" fill="#b0b0ac" opacity="0.6"/><circle cx="8.5" cy="252.3" r="0.36" fill="#b0b0ac" opacity="0.6"/><circle cx="11.0" cy="245.2" r="0.56" fill="#b0b0ac" opacity="0.6"/><circle cx="15.5" cy="293.1" r="0.73" fill="#b0b0ac" opacity="0.6"/><circle cx="67.7" cy="262.0" r="0.49" fill="#b0b0ac" opacity="0.6"/><circle cx="135.8" cy="222.2" r="0.49" fill="#b0b0ac" opacity="0.6"/><circle cx="31.3" cy="285.6" r="0.58" fill="#b0b0ac" opacity="0.6"/><circle cx="57.2" cy="245.9" r="0.75" fill="#b0b0ac" opacity="0.6"/><circle cx="36.3" cy="279.3" r="0.67" fill="#b0b0ac" opacity="0.6"/><circle cx="62.4" cy="243.1" r="0.55" fill="#b0b0ac" opacity="0.6"/><circle cx="63.1" cy="238.8" r="0.63" fill="#b0b0ac" opacity="0.6"/><circle cx="57.3" cy="237.8" r="0.70" fill="#b0b0ac" opacity="0.6"/><circle cx="63.4" cy="252.3" r="0.75" fill="#b0b0ac" opacity="0.6"/><circle cx="63.3" cy="244.0" r="0.75" fill="#b0b0ac" opacity="0.6"/><circle cx="134.8" cy="278.8" r="0.53" fill="#b0b0ac" opacity="0.6"/><circle cx="92.9" cy="275.0" r="0.48" fill="#b0b0ac" opacity="0.6"/><circle cx="100.2" cy="292.7" r="0.65" fill="#b0b0ac" opacity="0.6"/><circle cx="92.6" cy="249.0" r="0.64" fill="#b0b0ac" opacity="0.6"/><circle cx="32.0" cy="277.5" r="0.59" fill="#b0b0ac" opacity="0.6"/><circle cx="135.3" cy="241.0" r="0.67" fill="#b0b0ac" opacity="0.6"/><circle cx="3.3" cy="247.4" r="0.69" fill="#b0b0ac" opacity="0.6"/><circle cx="36.5" cy="264.1" r="0.45" fill="#b0b0ac" opacity="0.6"/><circle cx="55.6" cy="296.5" r="0.44" fill="#b0b0ac" opacity="0.6"/><circle cx="126.0" cy="217.1" r="0.61" fill="#b0b0ac" opacity="0.6"/><circle cx="113.5" cy="283.2" r="0.53" fill="#b0b0ac" opacity="0.6"/><circle cx="81.9" cy="272.5" r="0.69" fill="#b0b0ac" opacity="0.6"/><circle cx="103.3" cy="261.2" r="0.46" fill="#b0b0ac" opacity="0.6"/><circle cx="97.6" cy="259.7" r="0.59" fill="#b0b0ac" opacity="0.6"/><circle cx="136.2" cy="223.6" r="0.70" fill="#b0b0ac" opacity="0.6"/><circle cx="45.5" cy="273.8" r="0.78" fill="#b0b0ac" opacity="0.6"/><circle cx="38.6" cy="260.2" r="0.59" fill="#b0b0ac" opacity="0.6"/><circle cx="68.8" cy="226.2" r="0.63" fill="#b0b0ac" opacity="0.6"/><circle cx="123.4" cy="268.4" r="0.48" fill="#b0b0ac" opacity="0.6"/><circle cx="111.4" cy="247.7" r="0.42" fill="#b0b0ac" opacity="0.6"/><circle cx="84.0" cy="251.1" r="0.59" fill="#b0b0ac" opacity="0.6"/><circle cx="136.8" cy="260.4" r="0.78" fill="#b0b0ac" opacity="0.6"/><circle cx="49.3" cy="276.5" r="0.38" fill="#b0b0ac" opacity="0.6"/><circle cx="42.2" cy="270.8" r="0.66" fill="#b0b0ac" opacity="0.6"/><circle cx="114.5" cy="244.3" r="0.47" fill="#b0b0ac" opacity="0.6"/><circle cx="50.1" cy="257.7" r="0.36" fill="#b0b0ac" opacity="0.6"/><circle cx="52.3" cy="267.9" r="0.42" fill="#b0b0ac" opacity="0.6"/><circle cx="43.6" cy="286.2" r="0.77" fill="#b0b0ac" opacity="0.6"/><circle cx="35.2" cy="227.1" r="0.40" fill="#b0b0ac" opacity="0.6"/><circle cx="12.7" cy="279.5" r="0.68" fill="#b0b0ac" opacity="0.6"/><circle cx="37.2" cy="253.6" r="0.66" fill="#b0b0ac" opacity="0.6"/><circle cx="4.8" cy="281.6" r="0.74" fill="#b0b0ac" opacity="0.6"/><circle cx="29.9" cy="271.8" r="0.66" fill="#b0b0ac" opacity="0.6"/><circle cx="47.2" cy="286.7" r="0.45" fill="#b0b0ac" opacity="0.6"/><circle cx="65.9" cy="238.7" r="0.55" fill="#b0b0ac" opacity="0.6"/><circle cx="112.3" cy="260.4" r="0.62" fill="#b0b0ac" opacity="0.6"/><circle cx="136.2" cy="231.0" r="0.45" fill="#b0b0ac" opacity="0.6"/><circle cx="85.9" cy="224.8" r="0.78" fill="#b0b0ac" opacity="0.6"/><circle cx="47.8" cy="249.4" r="0.54" fill="#b0b0ac" opacity="0.6"/><circle cx="114.4" cy="289.8" r="0.65" fill="#b0b0ac" opacity="0.6"/><circle cx="24.5" cy="242.2" r="0.67" fill="#b0b0ac" opacity="0.6"/><circle cx="30.6" cy="287.0" r="0.74" fill="#b0b0ac" opacity="0.6"/><circle cx="32.0" cy="243.0" r="0.45" fill="#b0b0ac" opacity="0.6"/><circle cx="99.4" cy="216.0" r="0.66" fill="#b0b0ac" opacity="0.6"/><circle cx="9.6" cy="283.5" r="0.59" fill="#b0b0ac" opacity="0.6"/><circle cx="80.9" cy="220.1" r="0.37" fill="#b0b0ac" opacity="0.6"/><circle cx="49.4" cy="295.7" r="0.62" fill="#b0b0ac" opacity="0.6"/><circle cx="119.1" cy="217.3" r="0.40" fill="#b0b0ac" opacity="0.6"/><circle cx="3.9" cy="271.2" r="0.43" fill="#b0b0ac" opacity="0.6"/><circle cx="38.4" cy="268.7" r="0.66" fill="#b0b0ac" opacity="0.6"/><circle cx="45.2" cy="251.7" r="0.48" fill="#b0b0ac" opacity="0.6"/><circle cx="77.9" cy="242.2" r="0.51" fill="#b0b0ac" opacity="0.6"/><circle cx="35.1" cy="236.8" r="0.47" fill="#b0b0ac" opacity="0.6"/><circle cx="3.2" cy="238.4" r="0.62" fill="#b0b0ac" opacity="0.6"/><circle cx="37.8" cy="221.6" r="0.73" fill="#b0b0ac" opacity="0.6"/><circle cx="65.3" cy="255.5" r="0.49" fill="#b0b0ac" opacity="0.6"/><circle cx="122.5" cy="276.1" r="0.63" fill="#b0b0ac" opacity="0.6"/><circle cx="91.3" cy="270.9" r="0.58" fill="#b0b0ac" opacity="0.6"/><circle cx="57.6" cy="245.2" r="0.58" fill="#b0b0ac" opacity="0.6"/><circle cx="65.2" cy="257.0" r="0.59" fill="#b0b0ac" opacity="0.6"/><circle cx="109.0" cy="287.9" r="0.45" fill="#b0b0ac" opacity="0.6"/><circle cx="4.0" cy="237.6" r="0.36" fill="#b0b0ac" opacity="0.6"/><circle cx="110.1" cy="264.7" r="0.48" fill="#b0b0ac" opacity="0.6"/><circle cx="27.2" cy="285.8" r="0.73" fill="#b0b0ac" opacity="0.6"/><circle cx="94.7" cy="270.8" r="0.69" fill="#b0b0ac" opacity="0.6"/><circle cx="63.3" cy="245.8" r="0.60" fill="#b0b0ac" opacity="0.6"/><circle cx="121.6" cy="296.3" r="0.76" fill="#b0b0ac" opacity="0.6"/><circle cx="115.5" cy="218.3" r="0.46" fill="#b0b0ac" opacity="0.6"/><circle cx="134.0" cy="258.2" r="0.58" fill="#b0b0ac" opacity="0.6"/><circle cx="43.4" cy="285.3" r="0.58" fill="#b0b0ac" opacity="0.6"/><circle cx="136.7" cy="218.4" r="0.80" fill="#b0b0ac" opacity="0.6"/><circle cx="2.8" cy="224.6" r="0.53" fill="#b0b0ac" opacity="0.6"/><circle cx="88.6" cy="221.4" r="0.60" fill="#b0b0ac" opacity="0.6"/><circle cx="129.7" cy="249.0" r="0.69" fill="#b0b0ac" opacity="0.6"/><circle cx="82.1" cy="261.5" r="0.43" fill="#b0b0ac" opacity="0.6"/><circle cx="64.6" cy="288.5" r="0.65" fill="#b0b0ac" opacity="0.6"/><circle cx="30.7" cy="250.0" r="0.59" fill="#b0b0ac" opacity="0.6"/><circle cx="47.1" cy="261.1" r="0.63" fill="#b0b0ac" opacity="0.6"/><circle cx="3.4" cy="230.7" r="0.65" fill="#b0b0ac" opacity="0.6"/><circle cx="30.4" cy="218.2" r="0.69" fill="#b0b0ac" opacity="0.6"/><circle cx="46.7" cy="293.4" r="0.60" fill="#b0b0ac" opacity="0.6"/><circle cx="14.9" cy="266.1" r="0.47" fill="#b0b0ac" opacity="0.6"/><circle cx="112.6" cy="273.6" r="0.69" fill="#b0b0ac" opacity="0.6"/><circle cx="8.8" cy="214.9" r="0.71" fill="#b0b0ac" opacity="0.6"/><circle cx="20.2" cy="229.2" r="0.36" fill="#b0b0ac" opacity="0.6"/><circle cx="23.4" cy="252.3" r="0.78" fill="#b0b0ac" opacity="0.6"/><circle cx="45.0" cy="234.0" r="0.72" fill="#b0b0ac" opacity="0.6"/><circle cx="26.3" cy="266.0" r="0.63" fill="#b0b0ac" opacity="0.6"/><circle cx="129.1" cy="215.7" r="0.60" fill="#b0b0ac" opacity="0.6"/><circle cx="53.5" cy="282.0" r="0.46" fill="#b0b0ac" opacity="0.6"/><circle cx="99.0" cy="227.7" r="0.57" fill="#b0b0ac" opacity="0.6"/><circle cx="133.7" cy="232.4" r="0.48" fill="#b0b0ac" opacity="0.6"/><circle cx="126.7" cy="269.3" r="0.38" fill="#b0b0ac" opacity="0.6"/><circle cx="26.5" cy="232.2" r="0.48" fill="#b0b0ac" opacity="0.6"/><circle cx="116.7" cy="271.5" r="0.79" fill="#b0b0ac" opacity="0.6"/><circle cx="92.7" cy="265.4" r="0.52" fill="#b0b0ac" opacity="0.6"/><circle cx="99.3" cy="253.9" r="0.38" fill="#b0b0ac" opacity="0.6"/><circle cx="68.4" cy="244.6" r="0.59" fill="#b0b0ac" opacity="0.6"/><circle cx="7.7" cy="214.4" r="0.79" fill="#b0b0ac" opacity="0.6"/><circle cx="51.9" cy="240.1" r="0.42" fill="#b0b0ac" opacity="0.6"/><circle cx="82.2" cy="289.8" r="0.43" fill="#b0b0ac" opacity="0.6"/><circle cx="69.5" cy="254.5" r="0.69" fill="#b0b0ac" opacity="0.6"/><circle cx="78.4" cy="232.3" r="0.44" fill="#b0b0ac" opacity="0.6"/><circle cx="100.3" cy="218.6" r="0.74" fill="#b0b0ac" opacity="0.6"/><circle cx="5.6" cy="228.1" r="0.56" fill="#b0b0ac" opacity="0.6"/><circle cx="116.6" cy="264.7" r="0.69" fill="#b0b0ac" opacity="0.6"/><circle cx="105.3" cy="273.4" r="0.37" fill="#b0b0ac" opacity="0.6"/><circle cx="114.1" cy="224.6" r="0.42" fill="#b0b0ac" opacity="0.6"/><circle cx="6.1" cy="214.4" r="0.74" fill="#b0b0ac" opacity="0.6"/><circle cx="53.2" cy="219.4" r="0.37" fill="#b0b0ac" opacity="0.6"/><circle cx="117.0" cy="263.1" r="0.76" fill="#b0b0ac" opacity="0.6"/><circle cx="6.1" cy="221.6" r="0.48" fill="#b0b0ac" opacity="0.6"/><circle cx="27.2" cy="221.5" r="0.44" fill="#b0b0ac" opacity="0.6"/><circle cx="88.7" cy="226.3" r="0.43" fill="#b0b0ac" opacity="0.6"/><circle cx="74.4" cy="243.9" r="0.42" fill="#b0b0ac" opacity="0.6"/><circle cx="78.8" cy="255.2" r="0.52" fill="#b0b0ac" opacity="0.6"/><circle cx="66.0" cy="215.4" r="0.63" fill="#b0b0ac" opacity="0.6"/><circle cx="27.5" cy="240.5" r="0.35" fill="#b0b0ac" opacity="0.6"/><circle cx="122.6" cy="261.9" r="0.53" fill="#b0b0ac" opacity="0.6"/><circle cx="75.2" cy="291.9" r="0.41" fill="#b0b0ac" opacity="0.6"/><circle cx="53.5" cy="272.2" r="0.52" fill="#b0b0ac" opacity="0.6"/><circle cx="97.8" cy="289.2" r="0.37" fill="#b0b0ac" opacity="0.6"/><circle cx="40.0" cy="236.9" r="0.69" fill="#b0b0ac" opacity="0.6"/><circle cx="108.4" cy="271.5" r="0.77" fill="#b0b0ac" opacity="0.6"/><circle cx="26.4" cy="245.4" r="0.73" fill="#b0b0ac" opacity="0.6"/><circle cx="105.9" cy="221.6" r="0.79" fill="#b0b0ac" opacity="0.6"/><circle cx="102.4" cy="285.6" r="0.51" fill="#b0b0ac" opacity="0.6"/><circle cx="83.9" cy="293.5" r="0.75" fill="#b0b0ac" opacity="0.6"/><circle cx="80.1" cy="287.6" r="0.80" fill="#b0b0ac" opacity="0.6"/><circle cx="116.0" cy="267.7" r="0.78" fill="#b0b0ac" opacity="0.6"/><circle cx="20.7" cy="246.3" r="0.60" fill="#b0b0ac" opacity="0.6"/><circle cx="19.0" cy="278.4" r="0.38" fill="#b0b0ac" opacity="0.6"/><circle cx="87.1" cy="235.8" r="0.50" fill="#b0b0ac" opacity="0.6"/><circle cx="84.1" cy="228.3" r="0.55" fill="#b0b0ac" opacity="0.6"/><circle cx="118.4" cy="295.9" r="0.47" fill="#b0b0ac" opacity="0.6"/><circle cx="51.1" cy="271.0" r="0.44" fill="#b0b0ac" opacity="0.6"/><circle cx="117.3" cy="228.9" r="0.60" fill="#b0b0ac" opacity="0.6"/><circle cx="47.5" cy="212.1" r="0.35" fill="#b0b0ac" opacity="0.6"/><circle cx="1.3" cy="239.9" r="0.47" fill="#b0b0ac" opacity="0.6"/><circle cx="136.8" cy="266.2" r="0.38" fill="#b0b0ac" opacity="0.6"/><circle cx="99.1" cy="231.8" r="0.57" fill="#b0b0ac" opacity="0.6"/><circle cx="100.0" cy="284.8" r="0.77" fill="#b0b0ac" opacity="0.6"/><circle cx="58.7" cy="239.0" r="0.53" fill="#b0b0ac" opacity="0.6"/><circle cx="43.8" cy="275.0" r="0.56" fill="#b0b0ac" opacity="0.6"/><circle cx="94.9" cy="224.9" r="0.70" fill="#b0b0ac" opacity="0.6"/><circle cx="133.4" cy="229.3" r="0.63" fill="#b0b0ac" opacity="0.6"/><circle cx="23.2" cy="215.0" r="0.54" fill="#b0b0ac" opacity="0.6"/><circle cx="26.1" cy="274.1" r="0.61" fill="#b0b0ac" opacity="0.6"/><circle cx="93.4" cy="294.3" r="0.38" fill="#b0b0ac" opacity="0.6"/><circle cx="14.5" cy="215.0" r="0.56" fill="#b0b0ac" opacity="0.6"/><circle cx="114.0" cy="270.1" r="0.60" fill="#b0b0ac" opacity="0.6"/><circle cx="118.3" cy="243.6" r="0.40" fill="#b0b0ac" opacity="0.6"/><circle cx="88.9" cy="214.2" r="0.45" fill="#b0b0ac" opacity="0.6"/><circle cx="5.1" cy="225.7" r="0.38" fill="#b0b0ac" opacity="0.6"/><circle cx="73.8" cy="222.9" r="0.62" fill="#b0b0ac" opacity="0.6"/><circle cx="113.9" cy="241.3" r="0.40" fill="#b0b0ac" opacity="0.6"/><circle cx="93.0" cy="273.9" r="0.75" fill="#b0b0ac" opacity="0.6"/><circle cx="76.9" cy="261.5" r="0.74" fill="#b0b0ac" opacity="0.6"/><circle cx="93.8" cy="294.9" r="0.48" fill="#b0b0ac" opacity="0.6"/><circle cx="107.1" cy="265.8" r="0.56" fill="#b0b0ac" opacity="0.6"/><circle cx="2.5" cy="252.5" r="0.47" fill="#b0b0ac" opacity="0.6"/><circle cx="83.4" cy="255.3" r="0.58" fill="#b0b0ac" opacity="0.6"/><circle cx="9.1" cy="223.2" r="0.62" fill="#b0b0ac" opacity="0.6"/><circle cx="94.4" cy="296.2" r="0.71" fill="#b0b0ac" opacity="0.6"/><circle cx="40.7" cy="250.7" r="0.58" fill="#b0b0ac" opacity="0.6"/><circle cx="111.1" cy="245.5" r="0.76" fill="#b0b0ac" opacity="0.6"/><circle cx="67.3" cy="245.8" r="0.57" fill="#b0b0ac" opacity="0.6"/><circle cx="50.0" cy="297.0" r="0.37" fill="#b0b0ac" opacity="0.6"/><circle cx="55.8" cy="218.8" r="0.66" fill="#b0b0ac" opacity="0.6"/><circle cx="21.6" cy="224.7" r="0.54" fill="#b0b0ac" opacity="0.6"/><circle cx="83.5" cy="276.9" r="0.55" fill="#b0b0ac" opacity="0.6"/><circle cx="41.4" cy="243.3" r="0.75" fill="#b0b0ac" opacity="0.6"/><circle cx="30.2" cy="213.0" r="0.75" fill="#b0b0ac" opacity="0.6"/><circle cx="67.2" cy="223.2" r="0.41" fill="#b0b0ac" opacity="0.6"/><circle cx="123.0" cy="275.7" r="0.38" fill="#b0b0ac" opacity="0.6"/><circle cx="93.5" cy="230.2" r="0.55" fill="#b0b0ac" opacity="0.6"/><circle cx="83.9" cy="216.3" r="0.77" fill="#b0b0ac" opacity="0.6"/><circle cx="46.9" cy="224.2" r="0.70" fill="#b0b0ac" opacity="0.6"/><circle cx="16.0" cy="215.2" r="0.64" fill="#b0b0ac" opacity="0.6"/><circle cx="65.4" cy="288.6" r="0.71" fill="#b0b0ac" opacity="0.6"/><circle cx="29.3" cy="215.8" r="0.62" fill="#b0b0ac" opacity="0.6"/><circle cx="65.4" cy="237.6" r="0.76" fill="#b0b0ac" opacity="0.6"/><circle cx="29.6" cy="266.7" r="0.38" fill="#b0b0ac" opacity="0.6"/><circle cx="127.5" cy="292.6" r="0.63" fill="#b0b0ac" opacity="0.6"/><circle cx="44.9" cy="273.5" r="0.76" fill="#b0b0ac" opacity="0.6"/><circle cx="109.9" cy="215.5" r="0.58" fill="#b0b0ac" opacity="0.6"/><circle cx="20.2" cy="258.4" r="0.78" fill="#b0b0ac" opacity="0.6"/><circle cx="119.5" cy="233.1" r="0.60" fill="#b0b0ac" opacity="0.6"/><circle cx="44.5" cy="226.3" r="0.68" fill="#b0b0ac" opacity="0.6"/><circle cx="105.0" cy="240.6" r="0.54" fill="#b0b0ac" opacity="0.6"/><circle cx="96.4" cy="273.8" r="0.56" fill="#b0b0ac" opacity="0.6"/><circle cx="17.2" cy="220.1" r="0.43" fill="#b0b0ac" opacity="0.6"/><circle cx="114.2" cy="254.2" r="0.64" fill="#b0b0ac" opacity="0.6"/><circle cx="50.9" cy="243.4" r="0.43" fill="#b0b0ac" opacity="0.6"/><circle cx="134.5" cy="263.5" r="0.41" fill="#b0b0ac" opacity="0.6"/><circle cx="97.3" cy="262.8" r="0.63" fill="#b0b0ac" opacity="0.6"/><circle cx="106.5" cy="263.7" r="0.74" fill="#b0b0ac" opacity="0.6"/><circle cx="133.8" cy="246.6" r="0.64" fill="#b0b0ac" opacity="0.6"/><circle cx="52.3" cy="246.9" r="0.51" fill="#b0b0ac" opacity="0.6"/><circle cx="89.7" cy="242.0" r="0.51" fill="#b0b0ac" opacity="0.6"/><circle cx="117.0" cy="280.0" r="0.65" fill="#b0b0ac" opacity="0.6"/><circle cx="116.6" cy="244.8" r="0.64" fill="#b0b0ac" opacity="0.6"/><circle cx="35.4" cy="238.8" r="0.40" fill="#b0b0ac" opacity="0.6"/><circle cx="110.4" cy="290.3" r="0.49" fill="#b0b0ac" opacity="0.6"/><circle cx="52.8" cy="221.9" r="0.41" fill="#b0b0ac" opacity="0.6"/><circle cx="88.4" cy="287.8" r="0.39" fill="#b0b0ac" opacity="0.6"/><circle cx="35.9" cy="276.5" r="0.45" fill="#b0b0ac" opacity="0.6"/><circle cx="121.2" cy="242.0" r="0.56" fill="#b0b0ac" opacity="0.6"/><circle cx="28.6" cy="236.7" r="0.54" fill="#b0b0ac" opacity="0.6"/><circle cx="39.1" cy="274.0" r="0.36" fill="#b0b0ac" opacity="0.6"/><circle cx="88.5" cy="280.2" r="0.50" fill="#b0b0ac" opacity="0.6"/><circle cx="27.2" cy="222.2" r="0.38" fill="#b0b0ac" opacity="0.6"/><circle cx="109.5" cy="263.3" r="0.36" fill="#b0b0ac" opacity="0.6"/><circle cx="63.1" cy="262.9" r="0.49" fill="#b0b0ac" opacity="0.6"/><circle cx="5.8" cy="247.8" r="0.51" fill="#b0b0ac" opacity="0.6"/><circle cx="134.2" cy="242.6" r="0.77" fill="#b0b0ac" opacity="0.6"/><circle cx="119.9" cy="260.8" r="0.41" fill="#b0b0ac" opacity="0.6"/><circle cx="111.7" cy="219.7" r="0.60" fill="#b0b0ac" opacity="0.6"/><circle cx="14.3" cy="219.9" r="0.53" fill="#b0b0ac" opacity="0.6"/><circle cx="22.4" cy="296.3" r="0.61" fill="#b0b0ac" opacity="0.6"/><circle cx="123.9" cy="293.3" r="0.69" fill="#b0b0ac" opacity="0.6"/><circle cx="89.5" cy="252.2" r="0.70" fill="#b0b0ac" opacity="0.6"/><circle cx="92.7" cy="225.4" r="0.59" fill="#b0b0ac" opacity="0.6"/><circle cx="57.7" cy="255.8" r="0.67" fill="#b0b0ac" opacity="0.6"/><circle cx="95.4" cy="260.4" r="0.70" fill="#b0b0ac" opacity="0.6"/><circle cx="114.1" cy="219.9" r="0.42" fill="#b0b0ac" opacity="0.6"/><circle cx="7.5" cy="225.6" r="0.78" fill="#b0b0ac" opacity="0.6"/><circle cx="43.4" cy="249.3" r="0.56" fill="#b0b0ac" opacity="0.6"/><circle cx="78.3" cy="235.8" r="0.70" fill="#b0b0ac" opacity="0.6"/><circle cx="46.4" cy="283.9" r="0.71" fill="#b0b0ac" opacity="0.6"/><circle cx="1.2" cy="258.6" r="0.39" fill="#b0b0ac" opacity="0.6"/><circle cx="122.1" cy="217.9" r="0.47" fill="#b0b0ac" opacity="0.6"/><circle cx="106.3" cy="262.2" r="0.65" fill="#b0b0ac" opacity="0.6"/><circle cx="57.6" cy="256.2" r="0.44" fill="#b0b0ac" opacity="0.6"/><circle cx="64.3" cy="233.9" r="0.65" fill="#b0b0ac" opacity="0.6"/><circle cx="15.6" cy="223.7" r="0.44" fill="#b0b0ac" opacity="0.6"/><circle cx="74.0" cy="261.4" r="0.35" fill="#b0b0ac" opacity="0.6"/><circle cx="136.2" cy="283.0" r="0.52" fill="#b0b0ac" opacity="0.6"/><circle cx="22.8" cy="282.2" r="0.79" fill="#b0b0ac" opacity="0.6"/><circle cx="25.4" cy="276.3" r="0.72" fill="#b0b0ac" opacity="0.6"/><circle cx="129.4" cy="229.7" r="0.40" fill="#b0b0ac" opacity="0.6"/><circle cx="23.5" cy="231.7" r="0.76" fill="#b0b0ac" opacity="0.6"/><circle cx="125.7" cy="252.3" r="0.41" fill="#b0b0ac" opacity="0.6"/><circle cx="49.3" cy="232.5" r="0.64" fill="#b0b0ac" opacity="0.6"/><circle cx="99.6" cy="278.0" r="0.55" fill="#b0b0ac" opacity="0.6"/><circle cx="63.6" cy="251.8" r="0.52" fill="#b0b0ac" opacity="0.6"/><circle cx="63.3" cy="270.2" r="0.67" fill="#b0b0ac" opacity="0.6"/><circle cx="45.7" cy="260.2" r="0.42" fill="#b0b0ac" opacity="0.6"/><circle cx="7.2" cy="244.9" r="0.51" fill="#b0b0ac" opacity="0.6"/><circle cx="5.5" cy="218.8" r="0.54" fill="#b0b0ac" opacity="0.6"/><circle cx="130.1" cy="283.2" r="0.36" fill="#b0b0ac" opacity="0.6"/><circle cx="44.4" cy="243.3" r="0.49" fill="#b0b0ac" opacity="0.6"/><circle cx="19.8" cy="262.2" r="0.73" fill="#b0b0ac" opacity="0.6"/><circle cx="53.3" cy="227.0" r="0.40" fill="#b0b0ac" opacity="0.6"/><circle cx="3.1" cy="277.1" r="0.45" fill="#b0b0ac" opacity="0.6"/><circle cx="100.2" cy="279.2" r="0.39" fill="#b0b0ac" opacity="0.6"/><circle cx="26.9" cy="238.8" r="0.70" fill="#b0b0ac" opacity="0.6"/><circle cx="101.9" cy="237.7" r="0.55" fill="#b0b0ac" opacity="0.6"/><circle cx="49.6" cy="252.1" r="0.71" fill="#b0b0ac" opacity="0.6"/><circle cx="36.9" cy="280.9" r="0.76" fill="#b0b0ac" opacity="0.6"/><circle cx="83.3" cy="293.5" r="0.77" fill="#b0b0ac" opacity="0.6"/><circle cx="24.4" cy="296.3" r="0.44" fill="#b0b0ac" opacity="0.6"/><circle cx="111.2" cy="222.3" r="0.49" fill="#b0b0ac" opacity="0.6"/><circle cx="61.6" cy="283.3" r="0.66" fill="#b0b0ac" opacity="0.6"/><circle cx="28.9" cy="288.3" r="0.74" fill="#b0b0ac" opacity="0.6"/><circle cx="70.9" cy="216.3" r="0.48" fill="#b0b0ac" opacity="0.6"/><circle cx="41.1" cy="247.6" r="0.77" fill="#b0b0ac" opacity="0.6"/><circle cx="82.5" cy="281.7" r="0.38" fill="#b0b0ac" opacity="0.6"/><circle cx="34.6" cy="274.2" r="0.50" fill="#b0b0ac" opacity="0.6"/><circle cx="32.2" cy="217.4" r="0.37" fill="#b0b0ac" opacity="0.6"/><circle cx="57.5" cy="258.4" r="0.53" fill="#b0b0ac" opacity="0.6"/><circle cx="78.4" cy="236.7" r="0.36" fill="#b0b0ac" opacity="0.6"/><circle cx="93.4" cy="240.5" r="0.57" fill="#b0b0ac" opacity="0.6"/><circle cx="52.7" cy="234.9" r="0.37" fill="#b0b0ac" opacity="0.6"/><circle cx="41.6" cy="237.3" r="0.40" fill="#b0b0ac" opacity="0.6"/><circle cx="5.0" cy="252.9" r="0.36" fill="#b0b0ac" opacity="0.6"/><circle cx="121.4" cy="242.6" r="0.55" fill="#b0b0ac" opacity="0.6"/><circle cx="73.0" cy="214.0" r="0.40" fill="#b0b0ac" opacity="0.6"/><circle cx="108.6" cy="259.3" r="0.57" fill="#b0b0ac" opacity="0.6"/><ellipse cx="48.7" cy="274.8" rx="3.5" ry="3.0" fill="#c5c5c2"/><ellipse cx="114.1" cy="286.4" rx="4.0" ry="2.8" fill="#c5c5c2"/><ellipse cx="64.4" cy="257.2" rx="3.7" ry="2.6" fill="#c5c5c2"/><ellipse cx="111.9" cy="283.5" rx="2.6" ry="2.9" fill="#c5c5c2"/><ellipse cx="85.0" cy="262.5" rx="4.3" ry="2.1" fill="#c5c5c2"/><ellipse cx="66.2" cy="244.4" rx="4.4" ry="2.2" fill="#c5c5c2"/><ellipse cx="77.9" cy="225.7" rx="4.0" ry="2.6" fill="#c5c5c2"/><ellipse cx="100.8" cy="238.9" rx="4.3" ry="2.0" fill="#c5c5c2"/><ellipse cx="32.9" cy="273.4" rx="4.3" ry="2.9" fill="#c5c5c2"/><ellipse cx="39.6" cy="220.6" rx="3.9" ry="2.9" fill="#c5c5c2"/><ellipse cx="11.1" cy="289.7" rx="3.6" ry="2.0" fill="#c5c5c2"/><ellipse cx="66.8" cy="241.4" rx="2.7" ry="3.1" fill="#c5c5c2"/><ellipse cx="127.3" cy="224.1" rx="3.4" ry="2.3" fill="#c5c5c2"/><ellipse cx="92.4" cy="222.9" rx="3.2" ry="2.5" fill="#c5c5c2"/><ellipse cx="65.9" cy="249.2" rx="3.7" ry="3.1" fill="#c5c5c2"/><ellipse cx="126.9" cy="287.5" rx="4.2" ry="2.3" fill="#c5c5c2"/><ellipse cx="35.5" cy="251.2" rx="3.8" ry="2.7" fill="#c5c5c2"/><ellipse cx="49.5" cy="294.3" rx="3.1" ry="2.0" fill="#c5c5c2"/><ellipse cx="15.1" cy="231.0" rx="4.0" ry="3.0" fill="#c5c5c2"/><ellipse cx="8.6" cy="233.2" rx="3.0" ry="2.9" fill="#c5c5c2"/><ellipse cx="122.4" cy="235.3" rx="2.7" ry="3.2" fill="#c5c5c2"/><ellipse cx="132.2" cy="272.0" rx="3.4" ry="2.9" fill="#c5c5c2"/><ellipse cx="105.1" cy="255.3" rx="3.0" ry="2.6" fill="#c5c5c2"/><ellipse cx="91.1" cy="240.3" rx="3.8" ry="2.2" fill="#c5c5c2"/><ellipse cx="132.1" cy="231.1" rx="3.0" ry="3.2" fill="#c5c5c2"/><ellipse cx="129.4" cy="288.9" rx="4.2" ry="3.0" fill="#c5c5c2"/><ellipse cx="112.2" cy="259.9" rx="2.6" ry="2.9" fill="#c5c5c2"/><ellipse cx="114.2" cy="281.9" rx="2.6" ry="2.1" fill="#c5c5c2"/><ellipse cx="100.2" cy="253.5" rx="4.3" ry="3.2" fill="#c5c5c2"/><ellipse cx="62.4" cy="268.7" rx="3.8" ry="2.8" fill="#c5c5c2"/><ellipse cx="51.9" cy="265.8" rx="2.6" ry="3.1" fill="#c5c5c2"/><rect x="0" y="211" width="139" height="1" fill="#000" opacity="0.12"/><rect x="0" y="298" width="139" height="89" fill="#6f97c9"/><ellipse cx="112.8" cy="338.6" rx="13.4" ry="10.4" fill="#5a84b9"/><ellipse cx="112.8" cy="338.6" rx="12.1" ry="9.1" fill="#a1bde0"/><ellipse cx="62.5" cy="353.0" rx="11.7" ry="9.1" fill="#5a84b9"/><ellipse cx="62.5" cy="353.0" rx="10.4" ry="7.8" fill="#a1bde0"/><ellipse cx="13.5" cy="308.9" rx="12.8" ry="9.9" fill="#5a84b9"/><ellipse cx="13.5" cy="308.9" rx="11.5" ry="8.6" fill="#a1bde0"/><ellipse cx="33.0" cy="323.1" rx="12.3" ry="9.6" fill="#5a84b9"/><ellipse cx="33.0" cy="323.1" rx="11.0" ry="8.3" fill="#a1bde0"/><ellipse cx="94.8" cy="310.8" rx="14.0" ry="10.8" fill="#5a84b9"/><ellipse cx="94.8" cy="310.8" rx="12.7" ry="9.5" fill="#a1bde0"/><ellipse cx="113.6" cy="370.6" rx="13.0" ry="10.1" fill="#5a84b9"/><ellipse cx="113.6" cy="370.6" rx="11.7" ry="8.8" fill="#a1bde0"/><ellipse cx="48.2" cy="373.4" rx="12.1" ry="9.4" fill="#5a84b9"/><ellipse cx="48.2" cy="373.4" rx="10.8" ry="8.1" fill="#a1bde0"/><ellipse cx="37.3" cy="353.5" rx="12.3" ry="9.6" fill="#5a84b9"/><ellipse cx="37.3" cy="353.5" rx="11.0" ry="8.3" fill="#a1bde0"/><ellipse cx="83.5" cy="335.9" rx="11.5" ry="8.9" fill="#5a84b9"/><ellipse cx="83.5" cy="335.9" rx="10.2" ry="7.6" fill="#a1bde0"/><ellipse cx="138.3" cy="333.4" rx="11.9" ry="9.3" fill="#5a84b9"/><ellipse cx="138.3" cy="333.4" rx="10.6" ry="8.0" fill="#a1bde0"/><ellipse cx="-1.8" cy="361.7" rx="8.9" ry="7.0" fill="#5a84b9"/><ellipse cx="-1.8" cy="361.7" rx="7.6" ry="5.7" fill="#a1bde0"/><ellipse cx="61.8" cy="307.6" rx="8.8" ry="7.0" fill="#5a84b9"/><ellipse cx="61.8" cy="307.6" rx="7.5" ry="5.7" fill="#a1bde0"/><ellipse cx="3.6" cy="342.8" rx="9.5" ry="7.4" fill="#5a84b9"/><ellipse cx="3.6" cy="342.8" rx="8.2" ry="6.1" fill="#a1bde0"/><ellipse cx="58.1" cy="331.7" rx="8.8" ry="6.9" fill="#5a84b9"/><ellipse cx="58.1" cy="331.7" rx="7.5" ry="5.6" fill="#a1bde0"/><ellipse cx="123.0" cy="309.4" rx="9.2" ry="7.2" fill="#5a84b9"/><ellipse cx="123.0" cy="309.4" rx="7.9" ry="5.9" fill="#a1bde0"/><ellipse cx="136.3" cy="371.0" rx="7.8" ry="6.2" fill="#5a84b9"/><ellipse cx="136.3" cy="371.0" rx="6.5" ry="4.9" fill="#a1bde0"/><ellipse cx="17.6" cy="364.2" rx="8.6" ry="6.8" fill="#5a84b9"/><ellipse cx="17.6" cy="364.2" rx="7.3" ry="5.5" fill="#a1bde0"/><ellipse cx="84.3" cy="370.8" rx="10.3" ry="8.1" fill="#5a84b9"/><ellipse cx="84.3" cy="370.8" rx="9.0" ry="6.8" fill="#a1bde0"/><ellipse cx="134.5" cy="348.5" rx="5.1" ry="4.2" fill="#5a84b9"/><ellipse cx="134.5" cy="348.5" rx="3.8" ry="2.9" fill="#a1bde0"/><ellipse cx="113.0" cy="321.4" rx="6.3" ry="5.0" fill="#5a84b9"/><ellipse cx="113.0" cy="321.4" rx="5.0" ry="3.7" fill="#a1bde0"/><ellipse cx="11.2" cy="377.5" rx="6.2" ry="4.9" fill="#5a84b9"/><ellipse cx="11.2" cy="377.5" rx="4.9" ry="3.6" fill="#a1bde0"/><ellipse cx="68.2" cy="376.8" rx="5.1" ry="4.1" fill="#5a84b9"/><ellipse cx="68.2" cy="376.8" rx="3.8" ry="2.8" fill="#a1bde0"/><ellipse cx="96.5" cy="347.6" rx="4.9" ry="4.0" fill="#5a84b9"/><ellipse cx="96.5" cy="347.6" rx="3.6" ry="2.7" fill="#a1bde0"/><ellipse cx="73.1" cy="317.3" rx="5.8" ry="4.7" fill="#5a84b9"/><ellipse cx="73.1" cy="317.3" rx="4.5" ry="3.4" fill="#a1bde0"/><ellipse cx="24.9" cy="342.9" rx="4.5" ry="3.7" fill="#5a84b9"/><ellipse cx="24.9" cy="342.9" rx="3.2" ry="2.4" fill="#a1bde0"/><ellipse cx="37.8" cy="339.2" rx="4.3" ry="3.6" fill="#5a84b9"/><ellipse cx="37.8" cy="339.2" rx="3.0" ry="2.3" fill="#a1bde0"/><rect x="0" y="298" width="139" height="1" fill="#000" opacity="0.12"/><rect x="0.5" y="0.5" width="138" height="386" fill="none" stroke="#4a6280" stroke-opacity="0.3"/></g></svg>
<svg class="r" style="left:337px;top:275px;" width="40" height="2" viewBox="0 0 40 2"><line x1="0" y1="1" x2="40" y2="1" stroke="#c9d0da" stroke-width="1.2" stroke-dasharray="8 6"/></svg>
<svg class="r" style="left:337px;top:345px;" width="40" height="2" viewBox="0 0 40 2"><line x1="0" y1="1" x2="40" y2="1" stroke="#c9d0da" stroke-width="1.2" stroke-dasharray="8 6"/></svg>
<svg class="r" style="left:337px;top:414px;" width="40" height="2" viewBox="0 0 40 2"><line x1="0" y1="1" x2="40" y2="1" stroke="#c9d0da" stroke-width="1.2" stroke-dasharray="8 6"/></svg>
<svg class="r" style="left:337px;top:485px;" width="40" height="2" viewBox="0 0 40 2"><line x1="0" y1="1" x2="40" y2="1" stroke="#c9d0da" stroke-width="1.2" stroke-dasharray="8 6"/></svg>
<svg class="r" style="left:337px;top:580px;" width="40" height="2" viewBox="0 0 40 2"><line x1="0" y1="1" x2="40" y2="1" stroke="#c9d0da" stroke-width="1.2" stroke-dasharray="8 6"/></svg>
<svg class="r" style="left:337px;top:662px;" width="40" height="2" viewBox="0 0 40 2"><line x1="0" y1="1" x2="40" y2="1" stroke="#c9d0da" stroke-width="1.2" stroke-dasharray="8 6"/></svg>
<div class="t" style="right:1355.0px;top:277.0px;font-size:19.5px;color:#1e2a44;font-weight:400;">0.0 m</div>
<div class="t" style="right:1355.0px;top:333.0px;font-size:19.5px;color:#1e2a44;font-weight:400;">5.0 m</div>
<div class="t" style="right:1355.0px;top:404.5px;font-size:19.5px;color:#1e2a44;font-weight:400;">6.0 m</div>
<div class="t" style="right:1355.0px;top:483.5px;font-size:19.5px;color:#1e2a44;font-weight:400;">8.0 m</div>
<div class="t" style="right:1355.0px;top:571.5px;font-size:19.5px;color:#1e2a44;font-weight:400;">10.0 m</div>
<div class="t" style="right:1355.0px;top:652.0px;font-size:19.5px;color:#1e2a44;font-weight:400;">15.0 m</div>
<div class="r" style="left:405px;top:204px;width:488px;height:51px;background:linear-gradient(180deg,#e6ebf2,#e1e7ef);border-bottom:1px solid #d3dae4;box-sizing:border-box;"></div>
<div class="r" style="left:404px;top:204px;width:1px;height:472px;background:#dde3ec;"></div>
<div class="r" style="left:576px;top:204px;width:1px;height:51px;background:#d3dae4;"></div>
<div class="r" style="left:831px;top:204px;width:1px;height:51px;background:#d3dae4;"></div>
<div class="t" style="left:438.5px;top:217.9px;font-size:23.5px;color:#1a2948;font-weight:400;letter-spacing:1.1px;-webkit-text-stroke:0.45px #1a2948;">Lithology</div>
<div class="t" style="left:605.0px;top:219.5px;font-size:22.5px;color:#1e2b48;font-weight:400;letter-spacing:0.95px;">Sampling Intervals</div>
<svg class="r" style="left:480px;top:273px;" width="67" height="388" viewBox="0 0 67 388"><defs><clipPath id="c23"><rect width="67" height="388"/></clipPath></defs><g clip-path="url(#c23)"><rect x="0" y="0" width="67" height="79" fill="#94b3da"/><rect x="61.1" y="74.0" width="2.4" height="0.9" fill="#6582b0" opacity="0.6"/><rect x="6.4" y="46.6" width="1.7" height="0.9" fill="#6582b0" opacity="0.6"/><rect x="35.5" y="11.0" width="1.3" height="0.9" fill="#6582b0" opacity="0.6"/><rect x="29.9" y="18.0" width="1.7" height="0.9" fill="#6582b0" opacity="0.6"/><rect x="2.6" y="7.6" width="2.1" height="0.9" fill="#6582b0" opacity="0.6"/><rect x="28.4" y="40.5" width="2.2" height="0.9" fill="#6582b0" opacity="0.6"/><rect x="24.3" y="5.4" width="2.3" height="0.9" fill="#6582b0" opacity="0.6"/><rect x="39.3" y="51.7" width="2.0" height="0.9" fill="#6582b0" opacity="0.6"/><rect x="64.1" y="28.9" width="2.2" height="0.9" fill="#6582b0" opacity="0.6"/><rect x="25.0" y="45.0" width="2.1" height="0.9" fill="#6582b0" opacity="0.6"/><rect x="21.4" y="7.6" width="1.8" height="0.9" fill="#6582b0" opacity="0.6"/><rect x="47.7" y="46.5" width="1.7" height="0.9" fill="#6582b0" opacity="0.6"/><rect x="42.8" y="15.0" width="1.3" height="0.9" fill="#6582b0" opacity="0.6"/><rect x="22.0" y="63.8" width="1.3" height="0.9" fill="#6582b0" opacity="0.6"/><rect x="8.4" y="8.6" width="1.1" height="0.9" fill="#6582b0" opacity="0.6"/><rect x="18.9" y="45.1" width="2.3" height="0.9" fill="#6582b0" opacity="0.6"/><rect x="22.5" y="29.5" width="1.5" height="0.9" fill="#6582b0" opacity="0.6"/><rect x="20.8" y="60.9" width="1.9" height="0.9" fill="#6582b0" opacity="0.6"/><rect x="17.8" y="9.2" width="2.3" height="0.9" fill="#6582b0" opacity="0.6"/><rect x="47.0" y="64.8" width="1.4" height="0.9" fill="#6582b0" opacity="0.6"/><rect x="36.5" y="71.7" width="1.9" height="0.9" fill="#6582b0" opacity="0.6"/><rect x="62.5" y="13.9" width="2.6" height="0.9" fill="#6582b0" opacity="0.6"/><rect x="4.6" y="33.0" width="1.0" height="0.9" fill="#6582b0" opacity="0.6"/><rect x="53.6" y="53.9" width="2.6" height="0.9" fill="#6582b0" opacity="0.6"/><rect x="53.3" y="74.1" width="1.9" height="0.9" fill="#6582b0" opacity="0.6"/><rect x="65.2" y="58.7" width="1.6" height="0.9" fill="#6582b0" opacity="0.6"/><rect x="64.3" y="30.0" width="1.3" height="0.9" fill="#6582b0" opacity="0.6"/><rect x="5.9" y="36.9" width="1.3" height="0.9" fill="#6582b0" opacity="0.6"/><rect x="61.7" y="74.2" width="1.3" height="0.9" fill="#6582b0" opacity="0.6"/><rect x="7.7" y="41.7" width="1.3" height="0.9" fill="#6582b0" opacity="0.6"/><rect x="36.3" y="63.6" width="1.4" height="0.9" fill="#6582b0" opacity="0.6"/><rect x="28.4" y="70.4" width="1.7" height="0.9" fill="#6582b0" opacity="0.6"/><rect x="23.3" y="69.7" width="2.3" height="0.9" fill="#6582b0" opacity="0.6"/><rect x="59.2" y="54.0" width="1.7" height="0.9" fill="#6582b0" opacity="0.6"/><rect x="46.0" y="64.9" width="2.0" height="0.9" fill="#6582b0" opacity="0.6"/><rect x="16.5" y="23.7" width="1.7" height="0.9" fill="#6582b0" opacity="0.6"/><rect x="51.2" y="43.9" width="1.9" height="0.9" fill="#6582b0" opacity="0.6"/><rect x="54.7" y="9.4" width="2.0" height="0.9" fill="#6582b0" opacity="0.6"/><rect x="22.6" y="44.1" width="2.3" height="0.9" fill="#6582b0" opacity="0.6"/><rect x="17.1" y="74.3" width="1.1" height="0.9" fill="#6582b0" opacity="0.6"/><rect x="37.5" y="42.7" width="1.4" height="0.9" fill="#6582b0" opacity="0.6"/><rect x="37.5" y="37.2" width="1.7" height="0.9" fill="#6582b0" opacity="0.6"/><rect x="47.7" y="1.3" width="1.6" height="0.9" fill="#6582b0" opacity="0.6"/><rect x="52.1" y="11.9" width="2.4" height="0.9" fill="#6582b0" opacity="0.6"/><rect x="14.2" y="53.4" width="1.3" height="0.9" fill="#6582b0" opacity="0.6"/><rect x="30.2" y="33.5" width="1.1" height="0.9" fill="#6582b0" opacity="0.6"/><rect x="46.5" y="38.0" width="2.1" height="0.9" fill="#6582b0" opacity="0.6"/><rect x="36.0" y="43.8" width="1.8" height="0.9" fill="#6582b0" opacity="0.6"/><rect x="20.4" y="70.2" width="1.1" height="0.9" fill="#6582b0" opacity="0.6"/><rect x="58.0" y="67.5" width="1.8" height="0.9" fill="#6582b0" opacity="0.6"/><rect x="51.5" y="52.8" width="2.0" height="0.9" fill="#6582b0" opacity="0.6"/><rect x="20.0" y="25.6" width="1.6" height="0.9" fill="#6582b0" opacity="0.6"/><rect x="20.6" y="74.9" width="1.5" height="0.9" fill="#6582b0" opacity="0.6"/><rect x="26.2" y="33.3" width="2.3" height="0.9" fill="#6582b0" opacity="0.6"/><rect x="32.1" y="43.6" width="1.4" height="0.9" fill="#6582b0" opacity="0.6"/><rect x="19.1" y="7.9" width="1.3" height="0.9" fill="#6582b0" opacity="0.6"/><rect x="18.2" y="66.6" width="1.8" height="0.9" fill="#6582b0" opacity="0.6"/><rect x="8.2" y="36.6" width="1.2" height="0.9" fill="#6582b0" opacity="0.6"/><rect x="37.8" y="35.0" width="2.4" height="0.9" fill="#6582b0" opacity="0.6"/><rect x="17.9" y="66.5" width="1.4" height="0.9" fill="#6582b0" opacity="0.6"/><rect x="64.9" y="49.8" width="1.1" height="0.9" fill="#6582b0" opacity="0.6"/><rect x="53.5" y="22.2" width="1.6" height="0.9" fill="#6582b0" opacity="0.6"/><rect x="10.5" y="65.5" width="1.1" height="0.9" fill="#6582b0" opacity="0.6"/><rect x="49.0" y="31.5" width="2.1" height="0.9" fill="#6582b0" opacity="0.6"/><rect x="20.0" y="7.0" width="2.5" height="0.9" fill="#6582b0" opacity="0.6"/><rect x="43.6" y="14.1" width="2.6" height="0.9" fill="#6582b0" opacity="0.6"/><rect x="60.3" y="15.1" width="1.0" height="0.9" fill="#6582b0" opacity="0.6"/><rect x="40.7" y="11.7" width="2.2" height="0.9" fill="#6582b0" opacity="0.6"/><rect x="31.5" y="55.6" width="1.9" height="0.9" fill="#6582b0" opacity="0.6"/><rect x="51.1" y="64.3" width="2.0" height="0.9" fill="#6582b0" opacity="0.6"/><rect x="39.4" y="26.2" width="1.2" height="0.9" fill="#6582b0" opacity="0.6"/><rect x="7.0" y="67.0" width="1.3" height="0.9" fill="#6582b0" opacity="0.6"/><rect x="28.7" y="25.4" width="2.0" height="0.9" fill="#6582b0" opacity="0.6"/><rect x="35.7" y="67.1" width="1.7" height="0.9" fill="#6582b0" opacity="0.6"/><rect x="24.5" y="51.1" width="2.2" height="0.9" fill="#6582b0" opacity="0.6"/><rect x="61.2" y="25.0" width="2.4" height="0.9" fill="#6582b0" opacity="0.6"/><rect x="64.8" y="76.6" width="1.2" height="0.9" fill="#6582b0" opacity="0.6"/><rect x="25.7" y="60.6" width="2.3" height="0.9" fill="#6582b0" opacity="0.6"/><rect x="3.6" y="31.4" width="2.2" height="0.9" fill="#6582b0" opacity="0.6"/><rect x="50.3" y="42.2" width="1.3" height="0.9" fill="#6582b0" opacity="0.6"/><rect x="27.4" y="5.5" width="1.5" height="0.9" fill="#6582b0" opacity="0.6"/><rect x="28.8" y="64.4" width="1.9" height="0.9" fill="#6582b0" opacity="0.6"/><rect x="27.9" y="19.9" width="1.5" height="0.9" fill="#6582b0" opacity="0.6"/><rect x="44.6" y="35.3" width="1.3" height="0.9" fill="#6582b0" opacity="0.6"/><rect x="54.4" y="45.3" width="2.5" height="0.9" fill="#6582b0" opacity="0.6"/><rect x="35.9" y="49.0" width="1.7" height="0.9" fill="#6582b0" opacity="0.6"/><rect x="40.5" y="71.8" width="2.6" height="0.9" fill="#6582b0" opacity="0.6"/><rect x="44.0" y="34.1" width="1.1" height="0.9" fill="#6582b0" opacity="0.6"/><rect x="55.6" y="31.1" width="1.6" height="0.9" fill="#6582b0" opacity="0.6"/><rect x="4.7" y="3.6" width="1.6" height="0.9" fill="#6582b0" opacity="0.6"/><rect x="64.4" y="58.0" width="2.1" height="0.9" fill="#6582b0" opacity="0.6"/><rect x="44.4" y="22.0" width="1.3" height="0.9" fill="#6582b0" opacity="0.6"/><rect x="40.2" y="5.9" width="1.9" height="0.9" fill="#6582b0" opacity="0.6"/><rect x="34.4" y="42.8" width="1.2" height="0.9" fill="#6582b0" opacity="0.6"/><rect x="5.4" y="37.4" width="1.2" height="0.9" fill="#6582b0" opacity="0.6"/><rect x="42.7" y="24.8" width="2.0" height="0.9" fill="#6582b0" opacity="0.6"/><rect x="49.8" y="47.7" width="1.9" height="0.9" fill="#6582b0" opacity="0.6"/><rect x="13.8" y="27.7" width="2.6" height="0.9" fill="#6582b0" opacity="0.6"/><rect x="18.5" y="22.9" width="1.8" height="0.9" fill="#6582b0" opacity="0.6"/><rect x="36.5" y="61.9" width="1.5" height="0.9" fill="#6582b0" opacity="0.6"/><rect x="63.6" y="2.7" width="2.3" height="0.9" fill="#6582b0" opacity="0.6"/><rect x="38.0" y="70.4" width="1.2" height="0.9" fill="#6582b0" opacity="0.6"/><rect x="45.8" y="73.9" width="2.1" height="0.9" fill="#6582b0" opacity="0.6"/><rect x="8.3" y="71.9" width="2.6" height="0.9" fill="#6582b0" opacity="0.6"/><rect x="8.2" y="64.7" width="1.1" height="0.9" fill="#6582b0" opacity="0.6"/><rect x="6.3" y="62.2" width="2.2" height="0.9" fill="#6582b0" opacity="0.6"/><rect x="63.2" y="49.7" width="1.8" height="0.9" fill="#6582b0" opacity="0.6"/><rect x="18.7" y="45.1" width="2.6" height="0.9" fill="#6582b0" opacity="0.6"/><rect x="43.0" y="68.4" width="1.3" height="0.9" fill="#6582b0" opacity="0.6"/><rect x="48.8" y="57.3" width="1.1" height="0.9" fill="#6582b0" opacity="0.6"/><rect x="54.3" y="14.6" width="1.3" height="0.9" fill="#6582b0" opacity="0.6"/><rect x="5.0" y="52.0" width="1.2" height="0.9" fill="#6582b0" opacity="0.6"/><rect x="64.4" y="1.0" width="2.3" height="0.9" fill="#6582b0" opacity="0.6"/><rect x="50.3" y="44.8" width="1.9" height="0.9" fill="#6582b0" opacity="0.6"/><rect x="52.9" y="50.0" width="1.2" height="0.9" fill="#6582b0" opacity="0.6"/><rect x="52.8" y="28.2" width="1.9" height="0.9" fill="#6582b0" opacity="0.6"/><rect x="34.3" y="70.6" width="1.7" height="0.9" fill="#6582b0" opacity="0.6"/><rect x="56.5" y="7.3" width="1.5" height="0.9" fill="#6582b0" opacity="0.6"/><rect x="44.6" y="48.1" width="2.3" height="0.9" fill="#6582b0" opacity="0.6"/><rect x="14.5" y="62.9" width="2.3" height="0.9" fill="#6582b0" opacity="0.6"/><rect x="10.3" y="11.8" width="1.9" height="0.9" fill="#6582b0" opacity="0.6"/><rect x="64.4" y="48.3" width="1.7" height="0.9" fill="#6582b0" opacity="0.6"/><rect x="33.9" y="63.3" width="1.8" height="0.9" fill="#6582b0" opacity="0.6"/><rect x="35.9" y="46.7" width="2.5" height="0.9" fill="#6582b0" opacity="0.6"/><rect x="53.0" y="65.6" width="1.4" height="0.9" fill="#6582b0" opacity="0.6"/><rect x="40.0" y="64.4" width="2.1" height="0.9" fill="#6582b0" opacity="0.6"/><rect x="62.9" y="71.5" width="1.2" height="0.9" fill="#6582b0" opacity="0.6"/><rect x="34.0" y="28.5" width="1.3" height="0.9" fill="#6582b0" opacity="0.6"/><rect x="33.6" y="76.7" width="2.2" height="0.9" fill="#6582b0" opacity="0.6"/><rect x="7.4" y="20.1" width="1.6" height="0.9" fill="#6582b0" opacity="0.6"/><rect x="58.5" y="36.4" width="1.3" height="0.9" fill="#6582b0" opacity="0.6"/><rect x="36.8" y="20.0" width="1.1" height="0.9" fill="#6582b0" opacity="0.6"/><rect x="39.5" y="77.3" width="2.2" height="0.9" fill="#6582b0" opacity="0.6"/><rect x="48.9" y="12.8" width="1.9" height="0.9" fill="#6582b0" opacity="0.6"/><rect x="42.4" y="59.5" width="1.7" height="0.9" fill="#6582b0" opacity="0.6"/><rect x="4.5" y="72.4" width="1.4" height="0.9" fill="#6582b0" opacity="0.6"/><rect x="49.0" y="36.7" width="2.2" height="0.9" fill="#6582b0" opacity="0.6"/><rect x="23.0" y="8.1" width="1.7" height="0.9" fill="#6582b0" opacity="0.6"/><rect x="32.2" y="62.0" width="1.6" height="0.9" fill="#6582b0" opacity="0.6"/><rect x="44.3" y="30.0" width="2.2" height="0.9" fill="#6582b0" opacity="0.6"/><rect x="12.3" y="68.8" width="2.5" height="0.9" fill="#6582b0" opacity="0.6"/><rect x="2.5" y="67.1" width="2.2" height="0.9" fill="#6582b0" opacity="0.6"/><rect x="46.0" y="9.2" width="2.2" height="0.9" fill="#6582b0" opacity="0.6"/><rect x="51.2" y="49.2" width="2.5" height="0.9" fill="#6582b0" opacity="0.6"/><rect x="62.6" y="49.8" width="2.5" height="0.9" fill="#6582b0" opacity="0.6"/><rect x="10.3" y="24.0" width="1.8" height="0.9" fill="#6582b0" opacity="0.6"/><rect x="35.0" y="74.4" width="2.0" height="0.9" fill="#6582b0" opacity="0.6"/><rect x="41.4" y="48.8" width="2.5" height="0.9" fill="#6582b0" opacity="0.6"/><rect x="27.0" y="57.9" width="2.0" height="0.9" fill="#6582b0" opacity="0.6"/><rect x="27.2" y="27.1" width="1.2" height="0.9" fill="#6582b0" opacity="0.6"/><rect x="1.7" y="26.9" width="1.5" height="0.9" fill="#6582b0" opacity="0.6"/><rect x="6.3" y="38.4" width="1.6" height="0.9" fill="#6582b0" opacity="0.6"/><rect x="61.2" y="61.1" width="2.1" height="0.9" fill="#6582b0" opacity="0.6"/><rect x="56.1" y="22.1" width="1.2" height="0.9" fill="#6582b0" opacity="0.6"/><rect x="40.6" y="18.5" width="2.6" height="0.9" fill="#6582b0" opacity="0.6"/><rect x="28.6" y="69.2" width="1.4" height="0.9" fill="#6582b0" opacity="0.6"/><rect x="7.1" y="49.3" width="2.1" height="0.9" fill="#6582b0" opacity="0.6"/><rect x="17.6" y="72.4" width="2.6" height="0.9" fill="#6582b0" opacity="0.6"/><rect x="45.7" y="76.6" width="2.6" height="0.9" fill="#6582b0" opacity="0.6"/><rect x="10.6" y="57.2" width="2.2" height="0.9" fill="#6582b0" opacity="0.6"/><rect x="48.6" y="27.1" width="1.9" height="0.9" fill="#6582b0" opacity="0.6"/><rect x="39.2" y="66.4" width="1.1" height="0.9" fill="#6582b0" opacity="0.6"/><rect x="25.4" y="25.2" width="2.3" height="0.9" fill="#6582b0" opacity="0.6"/><rect x="8.6" y="5.8" width="1.2" height="0.9" fill="#6582b0" opacity="0.6"/><rect x="8.5" y="34.5" width="2.4" height="0.9" fill="#6582b0" opacity="0.6"/><rect x="24.1" y="8.8" width="2.1" height="0.9" fill="#6582b0" opacity="0.6"/><rect x="22.6" y="45.0" width="2.2" height="0.9" fill="#6582b0" opacity="0.6"/><rect x="30.6" y="57.5" width="2.0" height="0.9" fill="#6582b0" opacity="0.6"/><rect x="56.4" y="59.7" width="2.4" height="0.9" fill="#6582b0" opacity="0.6"/><rect x="49.5" y="22.7" width="1.8" height="0.9" fill="#6582b0" opacity="0.6"/><rect x="51.2" y="61.4" width="2.2" height="0.9" fill="#6582b0" opacity="0.6"/><rect x="55.8" y="64.5" width="1.9" height="0.9" fill="#6582b0" opacity="0.6"/><rect x="42.6" y="4.4" width="1.8" height="0.9" fill="#6582b0" opacity="0.6"/><rect x="48.2" y="71.3" width="2.4" height="0.9" fill="#6582b0" opacity="0.6"/><rect x="29.6" y="18.7" width="2.4" height="0.9" fill="#6582b0" opacity="0.6"/><rect x="43.7" y="15.8" width="1.1" height="0.9" fill="#6582b0" opacity="0.6"/><rect x="58.1" y="45.4" width="1.2" height="0.9" fill="#6582b0" opacity="0.6"/><rect x="65.3" y="46.2" width="2.2" height="0.9" fill="#6582b0" opacity="0.6"/><rect x="53.4" y="20.7" width="1.8" height="0.9" fill="#6582b0" opacity="0.6"/><rect x="12.2" y="48.2" width="1.7" height="0.9" fill="#6582b0" opacity="0.6"/><rect x="52.4" y="9.9" width="1.3" height="0.9" fill="#6582b0" opacity="0.6"/><rect x="26.2" y="1.1" width="1.7" height="0.9" fill="#6582b0" opacity="0.6"/><rect x="63.6" y="67.7" width="1.3" height="0.9" fill="#6582b0" opacity="0.6"/><rect x="55.1" y="18.3" width="1.4" height="0.9" fill="#6582b0" opacity="0.6"/><rect x="42.4" y="23.6" width="1.3" height="0.9" fill="#6582b0" opacity="0.6"/><rect x="6.6" y="14.6" width="1.3" height="0.9" fill="#6582b0" opacity="0.6"/><rect x="60.3" y="4.2" width="1.9" height="0.9" fill="#6582b0" opacity="0.6"/><rect x="14.8" y="56.5" width="1.0" height="0.9" fill="#6582b0" opacity="0.6"/><rect x="25.1" y="57.8" width="1.0" height="0.9" fill="#6582b0" opacity="0.6"/><rect x="0" y="0" width="67" height="1" fill="#000" opacity="0.12"/><rect x="0" y="79" width="67" height="43" fill="#5d4c42"/><ellipse cx="28.1" cy="94.8" rx="5.2" ry="1.6" fill="#4f4038" stroke="#463830" stroke-width="0.6"/><ellipse cx="41.3" cy="86.6" rx="7.3" ry="1.6" fill="#4f4038" stroke="#463830" stroke-width="0.6"/><ellipse cx="19.5" cy="109.5" rx="3.2" ry="1.6" fill="#4f4038" stroke="#463830" stroke-width="0.6"/><ellipse cx="8.7" cy="90.4" rx="3.0" ry="1.6" fill="#4f4038" stroke="#463830" stroke-width="0.6"/><ellipse cx="18.1" cy="88.6" rx="3.0" ry="1.6" fill="#4f4038" stroke="#463830" stroke-width="0.6"/><ellipse cx="55.0" cy="101.4" rx="5.2" ry="1.6" fill="#4f4038" stroke="#463830" stroke-width="0.6"/><ellipse cx="34.0" cy="110.7" rx="2.8" ry="1.6" fill="#4f4038" stroke="#463830" stroke-width="0.6"/><ellipse cx="5.8" cy="106.0" rx="2.5" ry="1.6" fill="#4f4038" stroke="#463830" stroke-width="0.6"/><ellipse cx="33.8" cy="104.6" rx="7.2" ry="1.6" fill="#4f4038" stroke="#463830" stroke-width="0.6"/><ellipse cx="3.0" cy="97.3" rx="4.2" ry="1.6" fill="#4f4038" stroke="#463830" stroke-width="0.6"/><ellipse cx="38.4" cy="85.1" rx="6.6" ry="1.6" fill="#4f4038" stroke="#463830" stroke-width="0.6"/><rect x="0" y="79" width="67" height="1" fill="#000" opacity="0.12"/><rect x="0" y="122" width="67" height="91" fill="#ecc174"/><circle cx="63.2" cy="171.8" r="0.85" fill="#a27940" opacity="0.7"/><circle cx="55.3" cy="198.1" r="0.96" fill="#a27940" opacity="0.7"/><circle cx="32.7" cy="130.8" r="0.95" fill="#a27940" opacity="0.7"/><circle cx="55.8" cy="185.4" r="0.59" fill="#a27940" opacity="0.7"/><circle cx="64.4" cy="178.4" r="0.58" fill="#a27940" opacity="0.7"/><circle cx="52.1" cy="142.9" r="0.53" fill="#a27940" opacity="0.7"/><circle cx="59.8" cy="127.9" r="1.00" fill="#a27940" opacity="0.7"/><circle cx="26.8" cy="173.9" r="0.87" fill="#a27940" opacity="0.7"/><circle cx="59.7" cy="142.6" r="0.42" fill="#a27940" opacity="0.7"/><circle cx="34.3" cy="142.9" r="0.67" fill="#a27940" opacity="0.7"/><circle cx="8.2" cy="131.0" r="0.78" fill="#a27940" opacity="0.7"/><circle cx="4.4" cy="146.7" r="0.64" fill="#a27940" opacity="0.7"/><circle cx="7.2" cy="194.7" r="1.03" fill="#a27940" opacity="0.7"/><circle cx="3.1" cy="194.8" r="0.48" fill="#a27940" opacity="0.7"/><circle cx="48.4" cy="128.4" r="0.91" fill="#a27940" opacity="0.7"/><circle cx="61.6" cy="146.1" r="0.47" fill="#a27940" opacity="0.7"/><circle cx="23.1" cy="199.5" r="0.94" fill="#a27940" opacity="0.7"/><circle cx="11.2" cy="203.3" r="0.90" fill="#a27940" opacity="0.7"/><circle cx="63.2" cy="209.6" r="0.47" fill="#a27940" opacity="0.7"/><circle cx="48.3" cy="125.2" r="0.49" fill="#a27940" opacity="0.7"/><circle cx="35.9" cy="143.8" r="0.51" fill="#a27940" opacity="0.7"/><circle cx="24.3" cy="163.9" r="1.04" fill="#a27940" opacity="0.7"/><circle cx="38.8" cy="172.5" r="0.89" fill="#a27940" opacity="0.7"/><circle cx="13.2" cy="194.5" r="0.92" fill="#a27940" opacity="0.7"/><circle cx="53.9" cy="163.1" r="0.76" fill="#a27940" opacity="0.7"/><circle cx="5.9" cy="163.8" r="0.83" fill="#a27940" opacity="0.7"/><circle cx="62.7" cy="202.8" r="0.60" fill="#a27940" opacity="0.7"/><circle cx="50.2" cy="199.2" r="1.07" fill="#a27940" opacity="0.7"/><circle cx="45.2" cy="152.3" r="1.01" fill="#a27940" opacity="0.7"/><circle cx="2.1" cy="173.5" r="0.69" fill="#a27940" opacity="0.7"/><circle cx="58.4" cy="178.3" r="0.50" fill="#a27940" opacity="0.7"/><circle cx="11.8" cy="126.2" r="0.91" fill="#a27940" opacity="0.7"/><circle cx="51.9" cy="156.2" r="0.52" fill="#a27940" opacity="0.7"/><circle cx="37.2" cy="140.4" r="0.75" fill="#a27940" opacity="0.7"/><circle cx="23.3" cy="151.4" r="0.87" fill="#a27940" opacity="0.7"/><circle cx="17.2" cy="152.5" r="0.77" fill="#a27940" opacity="0.7"/><circle cx="62.2" cy="136.4" r="0.58" fill="#a27940" opacity="0.7"/><circle cx="18.7" cy="151.0" r="0.72" fill="#a27940" opacity="0.7"/><circle cx="54.3" cy="139.1" r="0.89" fill="#a27940" opacity="0.7"/><circle cx="29.1" cy="173.9" r="0.73" fill="#a27940" opacity="0.7"/><circle cx="40.2" cy="139.0" r="0.81" fill="#a27940" opacity="0.7"/><circle cx="27.1" cy="192.8" r="0.80" fill="#a27940" opacity="0.7"/><circle cx="27.5" cy="210.8" r="0.48" fill="#a27940" opacity="0.7"/><circle cx="1.9" cy="134.0" r="0.87" fill="#a27940" opacity="0.7"/><circle cx="7.0" cy="188.5" r="0.42" fill="#a27940" opacity="0.7"/><circle cx="20.3" cy="178.4" r="0.37" fill="#a27940" opacity="0.7"/><circle cx="29.1" cy="211.9" r="0.90" fill="#a27940" opacity="0.7"/><circle cx="26.3" cy="203.9" r="0.78" fill="#a27940" opacity="0.7"/><circle cx="53.7" cy="153.6" r="0.64" fill="#a27940" opacity="0.7"/><circle cx="46.5" cy="190.7" r="0.87" fill="#a27940" opacity="0.7"/><circle cx="10.8" cy="160.5" r="0.59" fill="#a27940" opacity="0.7"/><circle cx="16.0" cy="133.3" r="0.91" fill="#a27940" opacity="0.7"/><circle cx="10.2" cy="154.5" r="0.36" fill="#a27940" opacity="0.7"/><circle cx="46.8" cy="178.7" r="0.41" fill="#a27940" opacity="0.7"/><circle cx="62.8" cy="211.6" r="0.91" fill="#a27940" opacity="0.7"/><circle cx="53.4" cy="185.6" r="0.37" fill="#a27940" opacity="0.7"/><circle cx="18.8" cy="144.1" r="0.37" fill="#a27940" opacity="0.7"/><circle cx="42.5" cy="175.6" r="0.62" fill="#a27940" opacity="0.7"/><circle cx="49.6" cy="143.9" r="0.56" fill="#a27940" opacity="0.7"/><circle cx="8.5" cy="143.9" r="0.99" fill="#a27940" opacity="0.7"/><circle cx="32.9" cy="188.6" r="1.00" fill="#a27940" opacity="0.7"/><circle cx="44.3" cy="155.1" r="1.08" fill="#a27940" opacity="0.7"/><circle cx="6.2" cy="159.8" r="1.01" fill="#a27940" opacity="0.7"/><circle cx="45.3" cy="154.5" r="0.97" fill="#a27940" opacity="0.7"/><circle cx="50.3" cy="187.4" r="0.55" fill="#a27940" opacity="0.7"/><circle cx="45.2" cy="181.4" r="0.98" fill="#a27940" opacity="0.7"/><circle cx="34.3" cy="205.7" r="0.89" fill="#a27940" opacity="0.7"/><circle cx="14.6" cy="174.5" r="0.50" fill="#a27940" opacity="0.7"/><circle cx="41.1" cy="152.0" r="1.10" fill="#a27940" opacity="0.7"/><circle cx="23.2" cy="193.3" r="0.98" fill="#a27940" opacity="0.7"/><circle cx="25.3" cy="175.4" r="0.52" fill="#a27940" opacity="0.7"/><circle cx="25.4" cy="162.1" r="0.88" fill="#a27940" opacity="0.7"/><circle cx="34.0" cy="137.3" r="0.84" fill="#a27940" opacity="0.7"/><circle cx="34.5" cy="169.7" r="0.68" fill="#a27940" opacity="0.7"/><circle cx="57.3" cy="181.2" r="0.85" fill="#a27940" opacity="0.7"/><circle cx="33.6" cy="158.8" r="0.67" fill="#a27940" opacity="0.7"/><circle cx="45.1" cy="162.0" r="0.40" fill="#a27940" opacity="0.7"/><circle cx="15.3" cy="127.8" r="0.39" fill="#a27940" opacity="0.7"/><circle cx="24.4" cy="156.6" r="0.69" fill="#a27940" opacity="0.7"/><circle cx="14.1" cy="143.7" r="0.69" fill="#a27940" opacity="0.7"/><circle cx="19.9" cy="146.2" r="0.72" fill="#a27940" opacity="0.7"/><circle cx="50.6" cy="128.4" r="0.36" fill="#a27940" opacity="0.7"/><circle cx="30.1" cy="202.6" r="0.82" fill="#a27940" opacity="0.7"/><circle cx="24.7" cy="209.6" r="0.86" fill="#a27940" opacity="0.7"/><circle cx="54.7" cy="198.0" r="0.38" fill="#a27940" opacity="0.7"/><circle cx="13.7" cy="193.4" r="0.64" fill="#a27940" opacity="0.7"/><circle cx="59.5" cy="129.3" r="1.05" fill="#a27940" opacity="0.7"/><circle cx="41.3" cy="159.6" r="0.97" fill="#a27940" opacity="0.7"/><circle cx="35.8" cy="163.9" r="0.49" fill="#a27940" opacity="0.7"/><circle cx="52.0" cy="136.0" r="0.58" fill="#a27940" opacity="0.7"/><circle cx="6.7" cy="124.4" r="0.57" fill="#a27940" opacity="0.7"/><circle cx="3.9" cy="164.8" r="0.61" fill="#a27940" opacity="0.7"/><circle cx="2.2" cy="164.3" r="0.56" fill="#a27940" opacity="0.7"/><circle cx="16.0" cy="171.2" r="0.60" fill="#a27940" opacity="0.7"/><circle cx="4.5" cy="205.9" r="1.08" fill="#a27940" opacity="0.7"/><circle cx="16.4" cy="181.7" r="0.79" fill="#a27940" opacity="0.7"/><circle cx="17.2" cy="170.9" r="0.55" fill="#a27940" opacity="0.7"/><circle cx="18.9" cy="163.4" r="0.38" fill="#a27940" opacity="0.7"/><circle cx="16.0" cy="210.6" r="0.93" fill="#a27940" opacity="0.7"/><circle cx="22.5" cy="211.7" r="0.60" fill="#a27940" opacity="0.7"/><circle cx="56.3" cy="151.7" r="1.02" fill="#a27940" opacity="0.7"/><circle cx="30.4" cy="200.6" r="0.45" fill="#a27940" opacity="0.7"/><circle cx="26.6" cy="153.7" r="0.94" fill="#a27940" opacity="0.7"/><circle cx="57.3" cy="135.1" r="0.66" fill="#a27940" opacity="0.7"/><circle cx="12.2" cy="128.9" r="0.45" fill="#a27940" opacity="0.7"/><circle cx="5.8" cy="149.9" r="0.67" fill="#a27940" opacity="0.7"/><circle cx="59.8" cy="181.0" r="0.92" fill="#a27940" opacity="0.7"/><circle cx="22.5" cy="151.6" r="0.66" fill="#a27940" opacity="0.7"/><circle cx="16.1" cy="124.8" r="0.56" fill="#a27940" opacity="0.7"/><circle cx="61.3" cy="127.5" r="0.73" fill="#a27940" opacity="0.7"/><circle cx="16.1" cy="190.9" r="0.38" fill="#a27940" opacity="0.7"/><circle cx="34.2" cy="187.5" r="0.70" fill="#a27940" opacity="0.7"/><circle cx="10.3" cy="202.1" r="0.36" fill="#a27940" opacity="0.7"/><circle cx="61.2" cy="195.8" r="1.01" fill="#a27940" opacity="0.7"/><circle cx="57.3" cy="155.9" r="0.82" fill="#a27940" opacity="0.7"/><circle cx="31.6" cy="175.1" r="0.63" fill="#a27940" opacity="0.7"/><circle cx="56.6" cy="150.4" r="0.77" fill="#a27940" opacity="0.7"/><circle cx="5.4" cy="128.2" r="1.01" fill="#a27940" opacity="0.7"/><circle cx="24.2" cy="156.3" r="1.09" fill="#a27940" opacity="0.7"/><circle cx="48.0" cy="136.8" r="0.76" fill="#a27940" opacity="0.7"/><circle cx="32.4" cy="176.8" r="0.55" fill="#a27940" opacity="0.7"/><circle cx="18.9" cy="207.1" r="0.80" fill="#a27940" opacity="0.7"/><circle cx="36.8" cy="184.6" r="0.91" fill="#a27940" opacity="0.7"/><circle cx="12.6" cy="192.7" r="0.71" fill="#a27940" opacity="0.7"/><circle cx="10.8" cy="151.2" r="1.09" fill="#a27940" opacity="0.7"/><circle cx="55.9" cy="203.4" r="0.73" fill="#a27940" opacity="0.7"/><circle cx="42.4" cy="158.3" r="0.90" fill="#a27940" opacity="0.7"/><circle cx="35.8" cy="154.8" r="1.08" fill="#a27940" opacity="0.7"/><circle cx="33.6" cy="126.6" r="0.96" fill="#a27940" opacity="0.7"/><circle cx="7.2" cy="147.9" r="0.69" fill="#a27940" opacity="0.7"/><circle cx="14.8" cy="163.0" r="0.68" fill="#a27940" opacity="0.7"/><circle cx="35.5" cy="181.0" r="0.86" fill="#a27940" opacity="0.7"/><circle cx="4.3" cy="144.1" r="0.44" fill="#a27940" opacity="0.7"/><circle cx="22.6" cy="163.7" r="0.99" fill="#a27940" opacity="0.7"/><circle cx="1.9" cy="195.1" r="0.47" fill="#a27940" opacity="0.7"/><circle cx="49.1" cy="198.5" r="1.09" fill="#a27940" opacity="0.7"/><circle cx="38.4" cy="127.9" r="0.57" fill="#a27940" opacity="0.7"/><circle cx="29.3" cy="183.0" r="1.08" fill="#a27940" opacity="0.7"/><circle cx="58.0" cy="128.6" r="0.45" fill="#a27940" opacity="0.7"/><circle cx="43.4" cy="141.4" r="0.79" fill="#a27940" opacity="0.7"/><circle cx="34.1" cy="171.5" r="0.61" fill="#a27940" opacity="0.7"/><circle cx="60.2" cy="149.1" r="0.62" fill="#a27940" opacity="0.7"/><circle cx="11.5" cy="148.8" r="0.45" fill="#a27940" opacity="0.7"/><circle cx="42.6" cy="124.8" r="0.53" fill="#a27940" opacity="0.7"/><circle cx="53.5" cy="198.8" r="0.60" fill="#a27940" opacity="0.7"/><circle cx="48.8" cy="195.1" r="0.84" fill="#a27940" opacity="0.7"/><circle cx="41.4" cy="190.1" r="0.59" fill="#a27940" opacity="0.7"/><circle cx="22.5" cy="145.8" r="0.52" fill="#a27940" opacity="0.7"/><circle cx="34.4" cy="171.0" r="0.49" fill="#a27940" opacity="0.7"/><circle cx="6.5" cy="125.2" r="0.51" fill="#a27940" opacity="0.7"/><circle cx="11.1" cy="178.3" r="0.96" fill="#a27940" opacity="0.7"/><circle cx="35.7" cy="180.3" r="0.67" fill="#a27940" opacity="0.7"/><circle cx="5.8" cy="189.5" r="0.92" fill="#a27940" opacity="0.7"/><circle cx="10.6" cy="150.6" r="0.86" fill="#a27940" opacity="0.7"/><circle cx="46.9" cy="137.6" r="0.64" fill="#a27940" opacity="0.7"/><circle cx="26.1" cy="171.6" r="0.97" fill="#a27940" opacity="0.7"/><circle cx="10.5" cy="156.5" r="1.04" fill="#a27940" opacity="0.7"/><circle cx="12.5" cy="138.7" r="0.94" fill="#a27940" opacity="0.7"/><circle cx="41.6" cy="165.4" r="0.69" fill="#a27940" opacity="0.7"/><circle cx="5.0" cy="180.0" r="0.55" fill="#a27940" opacity="0.7"/><circle cx="29.7" cy="205.7" r="0.72" fill="#a27940" opacity="0.7"/><circle cx="26.7" cy="154.4" r="0.56" fill="#a27940" opacity="0.7"/><circle cx="41.2" cy="186.8" r="0.44" fill="#a27940" opacity="0.7"/><circle cx="1.3" cy="158.2" r="0.47" fill="#a27940" opacity="0.7"/><circle cx="39.9" cy="137.3" r="0.73" fill="#a27940" opacity="0.7"/><circle cx="31.8" cy="209.6" r="0.59" fill="#a27940" opacity="0.7"/><circle cx="18.0" cy="153.0" r="0.84" fill="#a27940" opacity="0.7"/><circle cx="16.6" cy="144.5" r="0.88" fill="#a27940" opacity="0.7"/><circle cx="35.4" cy="129.4" r="0.98" fill="#a27940" opacity="0.7"/><circle cx="9.2" cy="149.4" r="0.76" fill="#a27940" opacity="0.7"/><circle cx="30.7" cy="191.2" r="0.46" fill="#a27940" opacity="0.7"/><circle cx="43.6" cy="138.9" r="0.44" fill="#a27940" opacity="0.7"/><circle cx="46.4" cy="192.1" r="0.43" fill="#a27940" opacity="0.7"/><circle cx="3.2" cy="140.9" r="0.78" fill="#a27940" opacity="0.7"/><circle cx="3.1" cy="207.6" r="0.36" fill="#a27940" opacity="0.7"/><circle cx="49.2" cy="194.6" r="0.64" fill="#a27940" opacity="0.7"/><circle cx="54.0" cy="138.6" r="0.93" fill="#a27940" opacity="0.7"/><circle cx="38.4" cy="198.8" r="0.95" fill="#a27940" opacity="0.7"/><circle cx="52.1" cy="199.9" r="0.54" fill="#a27940" opacity="0.7"/><circle cx="3.0" cy="138.2" r="0.91" fill="#a27940" opacity="0.7"/><circle cx="34.7" cy="166.9" r="0.70" fill="#a27940" opacity="0.7"/><circle cx="2.6" cy="205.4" r="0.78" fill="#a27940" opacity="0.7"/><circle cx="39.0" cy="167.0" r="1.01" fill="#a27940" opacity="0.7"/><circle cx="31.7" cy="171.0" r="0.95" fill="#a27940" opacity="0.7"/><circle cx="10.6" cy="196.5" r="0.82" fill="#a27940" opacity="0.7"/><circle cx="22.6" cy="136.2" r="0.74" fill="#a27940" opacity="0.7"/><circle cx="20.1" cy="123.2" r="0.97" fill="#a27940" opacity="0.7"/><circle cx="49.6" cy="203.1" r="0.92" fill="#a27940" opacity="0.7"/><circle cx="27.4" cy="204.4" r="0.53" fill="#a27940" opacity="0.7"/><circle cx="17.8" cy="164.7" r="0.86" fill="#a27940" opacity="0.7"/><circle cx="7.4" cy="128.1" r="1.05" fill="#a27940" opacity="0.7"/><circle cx="1.9" cy="189.1" r="0.70" fill="#a27940" opacity="0.7"/><circle cx="63.4" cy="199.5" r="0.70" fill="#a27940" opacity="0.7"/><circle cx="36.5" cy="185.0" r="0.55" fill="#a27940" opacity="0.7"/><circle cx="2.3" cy="211.2" r="0.76" fill="#a27940" opacity="0.7"/><circle cx="53.0" cy="170.9" r="0.41" fill="#a27940" opacity="0.7"/><circle cx="7.7" cy="143.9" r="1.07" fill="#a27940" opacity="0.7"/><circle cx="54.0" cy="149.0" r="0.68" fill="#a27940" opacity="0.7"/><circle cx="63.9" cy="168.0" r="0.59" fill="#a27940" opacity="0.7"/><circle cx="35.4" cy="138.0" r="0.78" fill="#a27940" opacity="0.7"/><circle cx="5.7" cy="169.3" r="0.43" fill="#a27940" opacity="0.7"/><circle cx="3.6" cy="190.2" r="0.73" fill="#a27940" opacity="0.7"/><circle cx="11.4" cy="158.5" r="1.02" fill="#a27940" opacity="0.7"/><ellipse cx="25.0" cy="148.2" rx="2.2" ry="2.1" fill="#b08a52" stroke="#80603a" stroke-width="1"/><ellipse cx="40.6" cy="165.3" rx="2.4" ry="1.6" fill="#b08a52" stroke="#80603a" stroke-width="1"/><ellipse cx="60.0" cy="148.1" rx="1.8" ry="1.7" fill="#b08a52" stroke="#80603a" stroke-width="1"/><ellipse cx="51.9" cy="190.6" rx="2.5" ry="1.2" fill="#b08a52" stroke="#80603a" stroke-width="1"/><ellipse cx="51.8" cy="202.5" rx="1.7" ry="1.4" fill="#b08a52" stroke="#80603a" stroke-width="1"/><ellipse cx="16.3" cy="136.1" rx="1.7" ry="1.7" fill="#b08a52" stroke="#80603a" stroke-width="1"/><ellipse cx="45.4" cy="164.5" rx="2.3" ry="1.9" fill="#b08a52" stroke="#80603a" stroke-width="1"/><ellipse cx="53.3" cy="207.7" rx="2.6" ry="1.7" fill="#b08a52" stroke="#80603a" stroke-width="1"/><rect x="0" y="122" width="67" height="1" fill="#000" opacity="0.12"/><rect x="0" y="213" width="67" height="89" fill="#dfdfdb"/><circle cx="4.7" cy="239.6" r="0.44" fill="#b0b0ac" opacity="0.6"/><circle cx="63.4" cy="277.3" r="0.41" fill="#b0b0ac" opacity="0.6"/><circle cx="23.0" cy="250.7" r="0.63" fill="#b0b0ac" opacity="0.6"/><circle cx="64.3" cy="243.0" r="0.66" fill="#b0b0ac" opacity="0.6"/><circle cx="27.8" cy="292.7" r="0.58" fill="#b0b0ac" opacity="0.6"/><circle cx="50.8" cy="264.7" r="0.67" fill="#b0b0ac" opacity="0.6"/><circle cx="50.1" cy="248.0" r="0.55" fill="#b0b0ac" opacity="0.6"/><circle cx="41.3" cy="276.2" r="0.62" fill="#b0b0ac" opacity="0.6"/><circle cx="24.4" cy="256.5" r="0.58" fill="#b0b0ac" opacity="0.6"/><circle cx="25.8" cy="241.9" r="0.38" fill="#b0b0ac" opacity="0.6"/><circle cx="5.3" cy="227.5" r="0.39" fill="#b0b0ac" opacity="0.6"/><circle cx="25.2" cy="298.3" r="0.53" fill="#b0b0ac" opacity="0.6"/><circle cx="60.3" cy="273.9" r="0.77" fill="#b0b0ac" opacity="0.6"/><circle cx="43.4" cy="297.3" r="0.71" fill="#b0b0ac" opacity="0.6"/><circle cx="6.1" cy="214.2" r="0.78" fill="#b0b0ac" opacity="0.6"/><circle cx="23.2" cy="270.9" r="0.78" fill="#b0b0ac" opacity="0.6"/><circle cx="65.1" cy="259.7" r="0.50" fill="#b0b0ac" opacity="0.6"/><circle cx="39.4" cy="274.6" r="0.39" fill="#b0b0ac" opacity="0.6"/><circle cx="53.2" cy="214.3" r="0.52" fill="#b0b0ac" opacity="0.6"/><circle cx="55.8" cy="291.2" r="0.74" fill="#b0b0ac" opacity="0.6"/><circle cx="57.2" cy="253.6" r="0.54" fill="#b0b0ac" opacity="0.6"/><circle cx="32.1" cy="259.0" r="0.45" fill="#b0b0ac" opacity="0.6"/><circle cx="25.1" cy="255.7" r="0.36" fill="#b0b0ac" opacity="0.6"/><circle cx="38.2" cy="219.6" r="0.60" fill="#b0b0ac" opacity="0.6"/><circle cx="4.9" cy="230.1" r="0.56" fill="#b0b0ac" opacity="0.6"/><circle cx="50.4" cy="300.0" r="0.69" fill="#b0b0ac" opacity="0.6"/><circle cx="54.2" cy="251.9" r="0.58" fill="#b0b0ac" opacity="0.6"/><circle cx="36.5" cy="298.3" r="0.73" fill="#b0b0ac" opacity="0.6"/><circle cx="1.8" cy="274.0" r="0.67" fill="#b0b0ac" opacity="0.6"/><circle cx="58.9" cy="294.9" r="0.53" fill="#b0b0ac" opacity="0.6"/><circle cx="28.0" cy="234.5" r="0.44" fill="#b0b0ac" opacity="0.6"/><circle cx="58.1" cy="278.6" r="0.72" fill="#b0b0ac" opacity="0.6"/><circle cx="22.0" cy="280.4" r="0.36" fill="#b0b0ac" opacity="0.6"/><circle cx="33.4" cy="241.2" r="0.49" fill="#b0b0ac" opacity="0.6"/><circle cx="65.3" cy="214.3" r="0.78" fill="#b0b0ac" opacity="0.6"/><circle cx="44.4" cy="300.4" r="0.53" fill="#b0b0ac" opacity="0.6"/><circle cx="59.5" cy="262.0" r="0.61" fill="#b0b0ac" opacity="0.6"/><circle cx="41.8" cy="236.8" r="0.62" fill="#b0b0ac" opacity="0.6"/><circle cx="12.4" cy="216.8" r="0.67" fill="#b0b0ac" opacity="0.6"/><circle cx="2.7" cy="294.2" r="0.45" fill="#b0b0ac" opacity="0.6"/><circle cx="60.2" cy="240.8" r="0.67" fill="#b0b0ac" opacity="0.6"/><circle cx="23.0" cy="274.4" r="0.43" fill="#b0b0ac" opacity="0.6"/><circle cx="15.8" cy="237.2" r="0.79" fill="#b0b0ac" opacity="0.6"/><circle cx="59.6" cy="247.6" r="0.78" fill="#b0b0ac" opacity="0.6"/><circle cx="61.8" cy="226.4" r="0.63" fill="#b0b0ac" opacity="0.6"/><circle cx="14.8" cy="244.0" r="0.49" fill="#b0b0ac" opacity="0.6"/><circle cx="15.6" cy="265.0" r="0.45" fill="#b0b0ac" opacity="0.6"/><circle cx="22.6" cy="226.3" r="0.47" fill="#b0b0ac" opacity="0.6"/><circle cx="51.3" cy="239.0" r="0.79" fill="#b0b0ac" opacity="0.6"/><circle cx="8.2" cy="216.4" r="0.46" fill="#b0b0ac" opacity="0.6"/><circle cx="34.5" cy="241.0" r="0.53" fill="#b0b0ac" opacity="0.6"/><circle cx="49.6" cy="271.7" r="0.46" fill="#b0b0ac" opacity="0.6"/><circle cx="58.2" cy="245.4" r="0.61" fill="#b0b0ac" opacity="0.6"/><circle cx="24.4" cy="279.8" r="0.61" fill="#b0b0ac" opacity="0.6"/><circle cx="33.4" cy="229.0" r="0.38" fill="#b0b0ac" opacity="0.6"/><circle cx="18.0" cy="288.0" r="0.77" fill="#b0b0ac" opacity="0.6"/><circle cx="27.4" cy="220.3" r="0.44" fill="#b0b0ac" opacity="0.6"/><circle cx="61.8" cy="225.2" r="0.54" fill="#b0b0ac" opacity="0.6"/><circle cx="5.7" cy="257.2" r="0.51" fill="#b0b0ac" opacity="0.6"/><circle cx="64.9" cy="299.5" r="0.58" fill="#b0b0ac" opacity="0.6"/><circle cx="55.3" cy="272.6" r="0.56" fill="#b0b0ac" opacity="0.6"/><circle cx="51.1" cy="217.0" r="0.43" fill="#b0b0ac" opacity="0.6"/><circle cx="54.6" cy="259.0" r="0.66" fill="#b0b0ac" opacity="0.6"/><circle cx="40.3" cy="287.2" r="0.46" fill="#b0b0ac" opacity="0.6"/><circle cx="12.5" cy="239.2" r="0.74" fill="#b0b0ac" opacity="0.6"/><circle cx="33.8" cy="280.4" r="0.70" fill="#b0b0ac" opacity="0.6"/><circle cx="23.3" cy="278.1" r="0.70" fill="#b0b0ac" opacity="0.6"/><circle cx="34.1" cy="259.8" r="0.56" fill="#b0b0ac" opacity="0.6"/><circle cx="30.6" cy="232.3" r="0.61" fill="#b0b0ac" opacity="0.6"/><circle cx="56.7" cy="236.2" r="0.54" fill="#b0b0ac" opacity="0.6"/><circle cx="25.3" cy="239.8" r="0.77" fill="#b0b0ac" opacity="0.6"/><circle cx="48.3" cy="221.5" r="0.58" fill="#b0b0ac" opacity="0.6"/><circle cx="23.7" cy="245.8" r="0.40" fill="#b0b0ac" opacity="0.6"/><circle cx="40.2" cy="245.3" r="0.65" fill="#b0b0ac" opacity="0.6"/><circle cx="8.8" cy="259.0" r="0.55" fill="#b0b0ac" opacity="0.6"/><circle cx="42.5" cy="219.4" r="0.70" fill="#b0b0ac" opacity="0.6"/><circle cx="35.2" cy="235.9" r="0.43" fill="#b0b0ac" opacity="0.6"/><circle cx="53.9" cy="215.1" r="0.61" fill="#b0b0ac" opacity="0.6"/><circle cx="21.0" cy="243.8" r="0.78" fill="#b0b0ac" opacity="0.6"/><circle cx="10.0" cy="230.0" r="0.36" fill="#b0b0ac" opacity="0.6"/><circle cx="24.8" cy="220.6" r="0.37" fill="#b0b0ac" opacity="0.6"/><circle cx="45.4" cy="296.2" r="0.43" fill="#b0b0ac" opacity="0.6"/><circle cx="40.1" cy="297.8" r="0.43" fill="#b0b0ac" opacity="0.6"/><circle cx="11.1" cy="258.0" r="0.37" fill="#b0b0ac" opacity="0.6"/><circle cx="38.7" cy="286.6" r="0.75" fill="#b0b0ac" opacity="0.6"/><circle cx="8.4" cy="262.4" r="0.58" fill="#b0b0ac" opacity="0.6"/><circle cx="30.3" cy="230.0" r="0.62" fill="#b0b0ac" opacity="0.6"/><circle cx="10.9" cy="273.4" r="0.39" fill="#b0b0ac" opacity="0.6"/><circle cx="1.1" cy="288.4" r="0.50" fill="#b0b0ac" opacity="0.6"/><circle cx="27.6" cy="258.6" r="0.57" fill="#b0b0ac" opacity="0.6"/><circle cx="2.1" cy="285.2" r="0.79" fill="#b0b0ac" opacity="0.6"/><circle cx="20.7" cy="238.9" r="0.48" fill="#b0b0ac" opacity="0.6"/><circle cx="43.9" cy="259.9" r="0.60" fill="#b0b0ac" opacity="0.6"/><circle cx="40.7" cy="236.6" r="0.58" fill="#b0b0ac" opacity="0.6"/><circle cx="35.6" cy="268.5" r="0.64" fill="#b0b0ac" opacity="0.6"/><circle cx="64.8" cy="225.5" r="0.58" fill="#b0b0ac" opacity="0.6"/><circle cx="39.5" cy="228.0" r="0.52" fill="#b0b0ac" opacity="0.6"/><circle cx="17.0" cy="261.3" r="0.67" fill="#b0b0ac" opacity="0.6"/><circle cx="18.2" cy="254.2" r="0.44" fill="#b0b0ac" opacity="0.6"/><circle cx="27.6" cy="300.2" r="0.75" fill="#b0b0ac" opacity="0.6"/><circle cx="24.5" cy="243.6" r="0.43" fill="#b0b0ac" opacity="0.6"/><circle cx="58.3" cy="294.6" r="0.37" fill="#b0b0ac" opacity="0.6"/><circle cx="30.1" cy="248.8" r="0.46" fill="#b0b0ac" opacity="0.6"/><circle cx="44.2" cy="285.9" r="0.52" fill="#b0b0ac" opacity="0.6"/><circle cx="64.8" cy="267.0" r="0.46" fill="#b0b0ac" opacity="0.6"/><circle cx="45.5" cy="225.6" r="0.54" fill="#b0b0ac" opacity="0.6"/><circle cx="38.6" cy="230.1" r="0.40" fill="#b0b0ac" opacity="0.6"/><circle cx="25.7" cy="288.6" r="0.44" fill="#b0b0ac" opacity="0.6"/><circle cx="31.7" cy="267.1" r="0.43" fill="#b0b0ac" opacity="0.6"/><circle cx="25.3" cy="289.4" r="0.71" fill="#b0b0ac" opacity="0.6"/><circle cx="37.3" cy="268.5" r="0.35" fill="#b0b0ac" opacity="0.6"/><circle cx="16.4" cy="244.9" r="0.38" fill="#b0b0ac" opacity="0.6"/><circle cx="30.3" cy="267.4" r="0.65" fill="#b0b0ac" opacity="0.6"/><circle cx="40.5" cy="258.5" r="0.73" fill="#b0b0ac" opacity="0.6"/><circle cx="16.7" cy="239.9" r="0.46" fill="#b0b0ac" opacity="0.6"/><circle cx="20.2" cy="289.6" r="0.56" fill="#b0b0ac" opacity="0.6"/><circle cx="60.3" cy="256.3" r="0.52" fill="#b0b0ac" opacity="0.6"/><circle cx="41.1" cy="217.0" r="0.57" fill="#b0b0ac" opacity="0.6"/><circle cx="23.9" cy="256.0" r="0.53" fill="#b0b0ac" opacity="0.6"/><circle cx="44.1" cy="270.5" r="0.35" fill="#b0b0ac" opacity="0.6"/><circle cx="35.0" cy="250.2" r="0.52" fill="#b0b0ac" opacity="0.6"/><circle cx="13.1" cy="284.4" r="0.43" fill="#b0b0ac" opacity="0.6"/><circle cx="17.8" cy="242.5" r="0.76" fill="#b0b0ac" opacity="0.6"/><circle cx="32.2" cy="227.5" r="0.45" fill="#b0b0ac" opacity="0.6"/><circle cx="21.0" cy="285.5" r="0.35" fill="#b0b0ac" opacity="0.6"/><circle cx="16.8" cy="276.9" r="0.39" fill="#b0b0ac" opacity="0.6"/><circle cx="39.1" cy="287.0" r="0.56" fill="#b0b0ac" opacity="0.6"/><circle cx="46.2" cy="262.8" r="0.75" fill="#b0b0ac" opacity="0.6"/><circle cx="64.0" cy="265.5" r="0.68" fill="#b0b0ac" opacity="0.6"/><circle cx="46.8" cy="286.0" r="0.53" fill="#b0b0ac" opacity="0.6"/><circle cx="43.2" cy="250.1" r="0.74" fill="#b0b0ac" opacity="0.6"/><circle cx="54.2" cy="242.9" r="0.59" fill="#b0b0ac" opacity="0.6"/><circle cx="65.1" cy="277.9" r="0.45" fill="#b0b0ac" opacity="0.6"/><circle cx="32.2" cy="220.9" r="0.47" fill="#b0b0ac" opacity="0.6"/><circle cx="53.3" cy="229.5" r="0.63" fill="#b0b0ac" opacity="0.6"/><circle cx="50.3" cy="297.0" r="0.54" fill="#b0b0ac" opacity="0.6"/><circle cx="4.7" cy="250.7" r="0.64" fill="#b0b0ac" opacity="0.6"/><circle cx="50.5" cy="288.5" r="0.38" fill="#b0b0ac" opacity="0.6"/><circle cx="29.2" cy="277.5" r="0.47" fill="#b0b0ac" opacity="0.6"/><circle cx="53.7" cy="299.5" r="0.50" fill="#b0b0ac" opacity="0.6"/><circle cx="40.6" cy="218.1" r="0.65" fill="#b0b0ac" opacity="0.6"/><circle cx="62.9" cy="281.6" r="0.50" fill="#b0b0ac" opacity="0.6"/><circle cx="61.2" cy="214.3" r="0.60" fill="#b0b0ac" opacity="0.6"/><circle cx="4.9" cy="249.7" r="0.47" fill="#b0b0ac" opacity="0.6"/><circle cx="9.1" cy="290.3" r="0.72" fill="#b0b0ac" opacity="0.6"/><circle cx="35.8" cy="228.3" r="0.58" fill="#b0b0ac" opacity="0.6"/><circle cx="15.7" cy="261.7" r="0.65" fill="#b0b0ac" opacity="0.6"/><circle cx="62.4" cy="235.4" r="0.47" fill="#b0b0ac" opacity="0.6"/><circle cx="13.1" cy="296.1" r="0.71" fill="#b0b0ac" opacity="0.6"/><ellipse cx="24.4" cy="251.8" rx="4.1" ry="2.7" fill="#c5c5c2"/><ellipse cx="38.8" cy="250.0" rx="3.7" ry="2.0" fill="#c5c5c2"/><ellipse cx="13.6" cy="285.7" rx="4.3" ry="2.7" fill="#c5c5c2"/><ellipse cx="43.2" cy="252.1" rx="3.2" ry="2.7" fill="#c5c5c2"/><ellipse cx="50.7" cy="291.4" rx="3.0" ry="2.5" fill="#c5c5c2"/><ellipse cx="29.9" cy="278.1" rx="4.2" ry="3.2" fill="#c5c5c2"/><ellipse cx="43.8" cy="266.1" rx="2.7" ry="2.1" fill="#c5c5c2"/><ellipse cx="4.3" cy="267.5" rx="3.7" ry="2.0" fill="#c5c5c2"/><ellipse cx="56.9" cy="273.3" rx="3.9" ry="2.3" fill="#c5c5c2"/><ellipse cx="21.5" cy="262.0" rx="3.2" ry="2.7" fill="#c5c5c2"/><ellipse cx="42.9" cy="265.9" rx="3.1" ry="3.2" fill="#c5c5c2"/><ellipse cx="18.6" cy="262.4" rx="3.3" ry="2.0" fill="#c5c5c2"/><ellipse cx="24.5" cy="270.3" rx="4.2" ry="2.5" fill="#c5c5c2"/><ellipse cx="12.7" cy="268.6" rx="2.6" ry="2.6" fill="#c5c5c2"/><ellipse cx="10.1" cy="273.9" rx="4.0" ry="2.9" fill="#c5c5c2"/><rect x="0" y="213" width="67" height="1" fill="#000" opacity="0.12"/><rect x="0" y="302" width="67" height="86" fill="#6f97c9"/><ellipse cx="54.0" cy="344.5" rx="8.8" ry="6.9" fill="#5a84b9"/><ellipse cx="54.0" cy="344.5" rx="7.5" ry="5.6" fill="#a1bde0"/><ellipse cx="48.2" cy="324.2" rx="8.6" ry="6.8" fill="#5a84b9"/><ellipse cx="48.2" cy="324.2" rx="7.3" ry="5.5" fill="#a1bde0"/><ellipse cx="30.1" cy="313.7" rx="9.6" ry="7.5" fill="#5a84b9"/><ellipse cx="30.1" cy="313.7" rx="8.3" ry="6.2" fill="#a1bde0"/><ellipse cx="26.0" cy="354.0" rx="10.0" ry="7.8" fill="#5a84b9"/><ellipse cx="26.0" cy="354.0" rx="8.7" ry="6.5" fill="#a1bde0"/><ellipse cx="-0.8" cy="355.1" rx="8.9" ry="7.0" fill="#5a84b9"/><ellipse cx="-0.8" cy="355.1" rx="7.6" ry="5.7" fill="#a1bde0"/><ellipse cx="11.4" cy="320.9" rx="9.3" ry="7.3" fill="#5a84b9"/><ellipse cx="11.4" cy="320.9" rx="8.0" ry="6.0" fill="#a1bde0"/><ellipse cx="6.1" cy="375.3" rx="8.5" ry="6.7" fill="#5a84b9"/><ellipse cx="6.1" cy="375.3" rx="7.2" ry="5.4" fill="#a1bde0"/><ellipse cx="49.9" cy="363.3" rx="10.1" ry="7.9" fill="#5a84b9"/><ellipse cx="49.9" cy="363.3" rx="8.8" ry="6.6" fill="#a1bde0"/><ellipse cx="27.0" cy="370.2" rx="7.5" ry="5.9" fill="#5a84b9"/><ellipse cx="27.0" cy="370.2" rx="6.2" ry="4.6" fill="#a1bde0"/><ellipse cx="29.3" cy="339.2" rx="7.5" ry="5.9" fill="#5a84b9"/><ellipse cx="29.3" cy="339.2" rx="6.2" ry="4.6" fill="#a1bde0"/><ellipse cx="58.5" cy="312.7" rx="7.4" ry="5.9" fill="#5a84b9"/><ellipse cx="58.5" cy="312.7" rx="6.1" ry="4.6" fill="#a1bde0"/><ellipse cx="11.4" cy="335.9" rx="7.3" ry="5.8" fill="#5a84b9"/><ellipse cx="11.4" cy="335.9" rx="6.0" ry="4.5" fill="#a1bde0"/><ellipse cx="0.2" cy="309.7" rx="7.4" ry="5.9" fill="#5a84b9"/><ellipse cx="0.2" cy="309.7" rx="6.1" ry="4.6" fill="#a1bde0"/><ellipse cx="65.2" cy="376.1" rx="7.4" ry="5.9" fill="#5a84b9"/><ellipse cx="65.2" cy="376.1" rx="6.1" ry="4.6" fill="#a1bde0"/><ellipse cx="66.4" cy="324.4" rx="4.7" ry="3.8" fill="#5a84b9"/><ellipse cx="66.4" cy="324.4" rx="3.4" ry="2.5" fill="#a1bde0"/><ellipse cx="68.2" cy="365.1" rx="5.1" ry="4.1" fill="#5a84b9"/><ellipse cx="68.2" cy="365.1" rx="3.8" ry="2.8" fill="#a1bde0"/><ellipse cx="43.1" cy="377.4" rx="5.3" ry="4.3" fill="#5a84b9"/><ellipse cx="43.1" cy="377.4" rx="4.0" ry="3.0" fill="#a1bde0"/><ellipse cx="67.9" cy="338.5" rx="4.7" ry="3.8" fill="#5a84b9"/><ellipse cx="67.9" cy="338.5" rx="3.4" ry="2.5" fill="#a1bde0"/><ellipse cx="13.6" cy="362.1" rx="4.8" ry="3.9" fill="#5a84b9"/><ellipse cx="13.6" cy="362.1" rx="3.5" ry="2.6" fill="#a1bde0"/><ellipse cx="27.5" cy="326.7" rx="5.6" ry="4.5" fill="#5a84b9"/><ellipse cx="27.5" cy="326.7" rx="4.3" ry="3.2" fill="#a1bde0"/><rect x="0" y="302" width="67" height="1" fill="#000" opacity="0.12"/><rect x="0.5" y="0.5" width="66" height="387" fill="none" stroke="#4a6280" stroke-opacity="0.3"/></g></svg>
<svg class="r" style="left:549px;top:301px;" width="26" height="2" viewBox="0 0 26 2"><line x1="0" y1="1" x2="26" y2="1" stroke="#c9d0da" stroke-width="1.2" stroke-dasharray="8 6"/></svg>
<svg class="r" style="left:549px;top:417px;" width="26" height="2" viewBox="0 0 26 2"><line x1="0" y1="1" x2="26" y2="1" stroke="#c9d0da" stroke-width="1.2" stroke-dasharray="8 6"/></svg>
<svg class="r" style="left:549px;top:484px;" width="26" height="2" viewBox="0 0 26 2"><line x1="0" y1="1" x2="26" y2="1" stroke="#c9d0da" stroke-width="1.2" stroke-dasharray="8 6"/></svg>
<div class="t" style="right:1068.0px;top:275.5px;font-size:19.5px;color:#1e2a44;font-weight:400;">0.0 m</div>
<div class="t" style="right:1068.0px;top:335.5px;font-size:19.5px;color:#1e2a44;font-weight:400;">5.0 m</div>
<div class="t" style="right:1068.0px;top:406.0px;font-size:19.5px;color:#1e2a44;font-weight:400;">6.0 m</div>
<div class="t" style="right:1068.0px;top:486.0px;font-size:19.5px;color:#1e2a44;font-weight:400;">7.0 m</div>
<div class="t" style="right:1068.0px;top:575.0px;font-size:19.5px;color:#1e2a44;font-weight:400;">10.0 m</div>
<div class="t" style="right:1068.0px;top:654.5px;font-size:19.5px;color:#1e2a44;font-weight:400;">15.0 m</div>
<div class="r" style="left:480px;top:661px;width:68px;height:15px;background:linear-gradient(180deg,#eef1f6,#f7f8fb);"></div>
<div class="r" style="left:577px;top:275px;width:315px;height:246px;background:#fbfcfe;border-left:1px solid #dfe4ec;border-top:1px solid #e3e8ef;box-sizing:border-box;"></div>
<div class="r" style="left:577px;top:330px;width:315px;height:62px;background:#f3f5f9;"></div>
<div class="r" style="left:577px;top:329px;width:315px;height:1px;background:#e1e6ee;"></div>
<div class="r" style="left:577px;top:391px;width:315px;height:1px;background:#e1e6ee;"></div>
<div class="r" style="left:577px;top:452px;width:315px;height:1px;background:#e1e6ee;"></div>
<div class="r" style="left:577px;top:521px;width:315px;height:1px;background:#e1e6ee;"></div>
<svg class="r" style="left:592px;top:289px;" width="23" height="28" viewBox="0 0 23 28"><rect x="1" y="1" width="21" height="26" rx="3" fill="#2d7bb9"/><rect x="5" y="5" width="13" height="1.6" fill="#dfeaf5"/><rect x="5" y="9" width="13" height="11" fill="#dbe7f3"/></svg>
<div class="t" style="left:628.5px;top:294.1px;font-size:20px;color:#1a2644;font-weight:400;letter-spacing:0.1px;">SPT-1</div>
<div class="r" style="left:719px;top:289px;width:151px;height:28px;background:#e6eaf1;border:1px solid #c5cdd8;border-radius:3px;box-sizing:border-box;"></div>
<div class="r" style="left:719px;top:289px;width:82px;height:28px;background:#3a8bc0;border-radius:3px 0 0 3px;"></div>
<div class="t" style="left:760.0px;top:294.0px;font-size:19.5px;color:#ffffff;font-weight:400;transform:translateX(-50%);">1.5 m</div>
<div class="t" style="left:835.0px;top:294.4px;font-size:19px;color:#1e2a44;font-weight:400;transform:translateX(-50%);">9</div>
<svg class="r" style="left:592px;top:349px;" width="23" height="28" viewBox="0 0 23 28"><rect x="1" y="1" width="21" height="26" rx="3" fill="#2d7bb9"/><rect x="5" y="5" width="13" height="1.6" fill="#dfeaf5"/><rect x="5" y="9" width="13" height="11" fill="#dbe7f3"/></svg>
<div class="t" style="left:628.5px;top:353.6px;font-size:20px;color:#1a2644;font-weight:400;letter-spacing:0.1px;">SPT-2</div>
<div class="r" style="left:719px;top:349px;width:151px;height:28px;background:#e6eaf1;border:1px solid #c5cdd8;border-radius:3px;box-sizing:border-box;"></div>
<div class="r" style="left:719px;top:349px;width:82px;height:28px;background:#3a8bc0;border-radius:3px 0 0 3px;"></div>
<div class="t" style="left:760.0px;top:353.5px;font-size:19.5px;color:#ffffff;font-weight:400;transform:translateX(-50%);">4.0 m</div>
<div class="t" style="left:835.0px;top:353.9px;font-size:19px;color:#1e2a44;font-weight:400;transform:translateX(-50%);">12</div>
<svg class="r" style="left:592px;top:409px;" width="23" height="28" viewBox="0 0 23 28"><rect x="1" y="1" width="21" height="26" rx="3" fill="#2d7bb9"/><rect x="5" y="5" width="13" height="1.6" fill="#dfeaf5"/><rect x="5" y="9" width="13" height="11" fill="#dbe7f3"/></svg>
<div class="t" style="left:628.5px;top:413.6px;font-size:20px;color:#1a2644;font-weight:400;letter-spacing:0.1px;">SPT-3</div>
<div class="r" style="left:719px;top:409px;width:151px;height:28px;background:#e6eaf1;border:1px solid #c5cdd8;border-radius:3px;box-sizing:border-box;"></div>
<div class="r" style="left:719px;top:409px;width:82px;height:28px;background:#3a8bc0;border-radius:3px 0 0 3px;"></div>
<div class="t" style="left:760.0px;top:413.5px;font-size:19.5px;color:#ffffff;font-weight:400;transform:translateX(-50%);">7.5 m</div>
<div class="t" style="left:835.0px;top:413.9px;font-size:19px;color:#1e2a44;font-weight:400;transform:translateX(-50%);">19</div>
<svg class="r" style="left:592px;top:468px;" width="23" height="28" viewBox="0 0 23 28"><rect x="1" y="1" width="21" height="26" rx="3" fill="#2d7bb9"/><rect x="5" y="5" width="13" height="1.6" fill="#dfeaf5"/><rect x="5" y="9" width="13" height="11" fill="#dbe7f3"/></svg>
<div class="t" style="left:628.5px;top:472.6px;font-size:20px;color:#1a2644;font-weight:400;letter-spacing:0.1px;">SPT-4</div>
<div class="r" style="left:719px;top:468px;width:151px;height:28px;background:#e6eaf1;border:1px solid #c5cdd8;border-radius:3px;box-sizing:border-box;"></div>
<div class="r" style="left:719px;top:468px;width:82px;height:28px;background:#3a8bc0;border-radius:3px 0 0 3px;"></div>
<div class="t" style="left:760.0px;top:472.5px;font-size:19.5px;color:#ffffff;font-weight:400;transform:translateX(-50%);">12.0 m</div>
<div class="t" style="left:835.0px;top:472.9px;font-size:19px;color:#1e2a44;font-weight:400;transform:translateX(-50%);">31</div>
<div class="r" style="left:550px;top:544px;width:343px;height:30px;background:linear-gradient(180deg,#f4f6f9,#eceff4);"></div>
<svg class="r" style="left:549px;top:552px;" width="136" height="4" viewBox="0 0 136 4"><line x1="0" y1="2" x2="136" y2="2" stroke="#5b6b82" stroke-width="1.3" stroke-dasharray="9 6"/></svg>
<div class="t" style="left:697.0px;top:544.1px;font-size:20px;color:#1a2644;font-weight:400;letter-spacing:1.0px;">Water Table</div>
<div class="r" style="left:823px;top:545px;width:70px;height:9px;background:linear-gradient(180deg,#9fcdee,#b9dbf3);"></div>
<svg class="r" style="left:823px;top:552px;" width="70" height="4" viewBox="0 0 70 4"><line x1="0" y1="2" x2="70" y2="2" stroke="#3b86bd" stroke-width="1.3" stroke-dasharray="9 6"/></svg>
<div class="r" style="left:549px;top:574px;width:24px;height:88px;background:linear-gradient(180deg,#d9e9f6,#d3e5f4);"></div>
<svg class="r" style="left:576px;top:574px;" width="317" height="87" viewBox="0 0 317 87">
<defs><linearGradient id="wg" x1="0" y1="0" x2="0" y2="1"><stop offset="0" stop-color="#4aa0d8"/><stop offset="0.25" stop-color="#3d95d2"/><stop offset="1" stop-color="#2f86c6"/></linearGradient></defs>
<rect width="317" height="87" fill="url(#wg)"/>
<rect width="317" height="18" fill="#5fabe0" opacity="0.65"/>
<path d="M0 17.8 L4 18.3 L8 19.0 L12 19.8 L16 20.7 L20 21.6 L24 22.5 L28 23.3 L32 23.9 L36 24.3 L40 24.5 L44 24.4 L48 24.1 L52 23.6 L56 22.9 L60 22.1 L64 21.2 L68 20.3 L72 19.4 L76 18.6 L80 18.0 L84 17.7 L88 17.5 L92 17.6 L96 17.9 L100 18.5 L104 19.2 L108 20.0 L112 20.9 L116 21.9 L120 22.7 L124 23.5 L128 24.0 L132 24.4 L136 24.5 L140 24.4 L144 24.0 L148 23.5 L152 22.7 L156 21.9 L160 20.9 L164 20.0 L168 19.2 L172 18.5 L176 17.9 L180 17.6 L184 17.5 L188 17.7 L192 18.0 L196 18.6 L200 19.4 L204 20.3 L208 21.2 L212 22.1 L216 22.9 L220 23.6 L224 24.1 L228 24.4 L232 24.5 L236 24.3 L240 23.9 L244 23.3 L248 22.5 L252 21.6 L256 20.7 L260 19.8 L264 19.0 L268 18.3 L272 17.8 L276 17.5 L280 17.5 L284 17.7 L288 18.2 L292 18.8 L296 19.6 L300 20.5 L304 21.4 L308 22.3 L312 23.1 L316 23.8 L317 30 L0 30Z" fill="#2f86c8" opacity="0.55"/>
<path d="M0 15.8 L4 16.3 L8 17.0 L12 17.8 L16 18.7 L20 19.6 L24 20.5 L28 21.3 L32 21.9 L36 22.3 L40 22.5 L44 22.4 L48 22.1 L52 21.6 L56 20.9 L60 20.1 L64 19.2 L68 18.3 L72 17.4 L76 16.6 L80 16.0 L84 15.7 L88 15.5 L92 15.6 L96 15.9 L100 16.5 L104 17.2 L108 18.0 L112 18.9 L116 19.9 L120 20.7 L124 21.5 L128 22.0 L132 22.4 L136 22.5 L140 22.4 L144 22.0 L148 21.5 L152 20.7 L156 19.9 L160 18.9 L164 18.0 L168 17.2 L172 16.5 L176 15.9 L180 15.6 L184 15.5 L188 15.7 L192 16.0 L196 16.6 L200 17.4 L204 18.3 L208 19.2 L212 20.1 L216 20.9 L220 21.6 L224 22.1 L228 22.4 L232 22.5 L236 22.3 L240 21.9 L244 21.3 L248 20.5 L252 19.6 L256 18.7 L260 17.8 L264 17.0 L268 16.3 L272 15.8 L276 15.5 L280 15.5 L284 15.7 L288 16.2 L292 16.8 L296 17.6 L300 18.5 L304 19.4 L308 20.3 L312 21.1 L316 21.8" stroke="#2a78b8" stroke-width="3" fill="none" opacity="0.5" transform="translate(0,1.5)"/>
<path d="M0 15.8 L4 16.3 L8 17.0 L12 17.8 L16 18.7 L20 19.6 L24 20.5 L28 21.3 L32 21.9 L36 22.3 L40 22.5 L44 22.4 L48 22.1 L52 21.6 L56 20.9 L60 20.1 L64 19.2 L68 18.3 L72 17.4 L76 16.6 L80 16.0 L84 15.7 L88 15.5 L92 15.6 L96 15.9 L100 16.5 L104 17.2 L108 18.0 L112 18.9 L116 19.9 L120 20.7 L124 21.5 L128 22.0 L132 22.4 L136 22.5 L140 22.4 L144 22.0 L148 21.5 L152 20.7 L156 19.9 L160 18.9 L164 18.0 L168 17.2 L172 16.5 L176 15.9 L180 15.6 L184 15.5 L188 15.7 L192 16.0 L196 16.6 L200 17.4 L204 18.3 L208 19.2 L212 20.1 L216 20.9 L220 21.6 L224 22.1 L228 22.4 L232 22.5 L236 22.3 L240 21.9 L244 21.3 L248 20.5 L252 19.6 L256 18.7 L260 17.8 L264 17.0 L268 16.3 L272 15.8 L276 15.5 L280 15.5 L284 15.7 L288 16.2 L292 16.8 L296 17.6 L300 18.5 L304 19.4 L308 20.3 L312 21.1 L316 21.8" stroke="#d8eefb" stroke-width="2" fill="none"/>
<path d="M0 81 C30 80 50 66 84 63 C110 61 125 78 150 79 C180 80 200 74 224 75 C260 76 290 84 317 84" stroke="#eaf5fc" stroke-width="1.6" stroke-dasharray="5 4" fill="none"/>
</svg>
<div class="t" style="left:746.5px;top:617.6px;font-size:20.5px;color:#ffffff;font-weight:400;letter-spacing:1.6px;-webkit-text-stroke:0.6px #ffffff;">Water Table</div>
<div class="r" style="left:111px;top:715px;width:781px;height:76px;background:linear-gradient(180deg,#e8edf4,#edf1f6);border-top:1px solid #d6dde7;box-sizing:border-box;"></div>
<svg class="r" style="left:143px;top:733px;" width="30" height="24" viewBox="0 0 30 24"><rect x="1" y="1" width="28" height="22" rx="3" fill="#2f7ab8"/><path d="M6 10 Q9 6 14 7 H11 L8 11Z" fill="#fff"/><rect x="17" y="7" width="7" height="2" fill="#fff"/><rect x="5" y="11" width="19" height="1.5" fill="#fff"/><ellipse cx="9" cy="16" rx="4" ry="1.8" fill="#fff"/><ellipse cx="19" cy="16" rx="4" ry="1.8" fill="#fff"/></svg>
<div class="t" style="left:184.5px;top:732.6px;font-size:20.5px;color:#1a2644;font-weight:400;letter-spacing:1.5px;">Depth:</div>
<div class="t" style="left:261.5px;top:732.6px;font-size:20.5px;color:#1a2644;font-weight:400;letter-spacing:0.8px;-webkit-text-stroke:0.75px #1a2644;">15.0 m</div>
<div class="r" style="left:373px;top:730px;width:1px;height:39px;background:#d3dae4;"></div>
<svg class="r" style="left:422px;top:730px;" width="28" height="29" viewBox="0 0 28 29"><path d="M14 1.5 C18 5 26 9.5 26 16 A12 12 0 0 1 2 16 C2 9.5 10 5 14 1.5Z" fill="#2f86c4"/><path d="M14 8 C16 10.5 19 13.5 19 17 A5 5 0 0 1 9 17 C9 13.5 12 10.5 14 8Z" fill="none" stroke="#fff" stroke-width="1.8"/></svg>
<div class="t" style="left:461.0px;top:732.6px;font-size:20.5px;color:#1a2644;font-weight:400;letter-spacing:0.9px;">Water Level:</div>
<div class="t" style="left:595.0px;top:732.6px;font-size:20.5px;color:#2a84b8;font-weight:400;letter-spacing:1.1px;-webkit-text-stroke:0.75px #2a84b8;">5.2 m</div>
<div class="r" style="left:673px;top:730px;width:1px;height:39px;background:#d3dae4;"></div>
<svg class="r" style="left:693px;top:731px;" width="26" height="27" viewBox="0 0 26 27"><rect x="6" y="1" width="14" height="6" rx="1" fill="#2f7ab8"/><rect x="1" y="6" width="24" height="20" rx="3" fill="#2f7ab8"/><rect x="5" y="14" width="16" height="8" fill="#fff"/></svg>
<div class="t" style="left:731.0px;top:732.6px;font-size:20.5px;color:#1a2644;font-weight:400;letter-spacing:0.6px;">Tests</div>
<div class="t" style="left:793.0px;top:732.6px;font-size:20.5px;color:#1a2644;font-weight:400;letter-spacing:0.6px;">SPT &amp;</div>
<div class="t" style="left:793.0px;top:755.6px;font-size:20.5px;color:#1a2644;font-weight:400;letter-spacing:0.6px;">Samples</div>
<div class="t" style="left:342.0px;top:814.6px;font-size:30px;color:#1a2948;font-weight:400;letter-spacing:1.2px;">Engineering Databases</div>
<div class="r" style="left:908px;top:206px;width:518px;height:294px;background:#fbfcfe;border:1px solid #d9dfe8;border-radius:3px;box-sizing:border-box;"></div>
<div class="r" style="left:909px;top:207px;width:516px;height:50px;background:linear-gradient(180deg,#e5eaf1,#e0e6ee);border-bottom:1px solid #d3dae4;box-sizing:border-box;"></div>
<div class="t" style="left:938.0px;top:218.5px;font-size:24.2px;color:#15244a;font-weight:400;letter-spacing:1.85px;-webkit-text-stroke:0.6px #15244a;">Environmental Monitoring</div>
<svg class="r" style="left:940px;top:281px;" width="33" height="33" viewBox="0 0 33 33"><circle cx="16.5" cy="16.5" r="16" fill="#4a84bf"/><path d="M16.5 7 C18 11 23 17 23 21 A6.5 6.5 0 0 1 10 21 C10 17 15 11 16.5 7Z" fill="#3a78b8" stroke="#fff" stroke-width="1.8"/></svg>
<div class="t" style="left:985.0px;top:287.5px;font-size:19.5px;color:#1e2a44;font-weight:400;letter-spacing:0.9px;">Last 24h</div>
<svg class="r" style="left:1257px;top:290px;" width="16" height="16" viewBox="0 0 16 16"><circle cx="8" cy="8" r="7" fill="#a9c3e2"/></svg>
<div class="t" style="left:1281.0px;top:288.8px;font-size:18.5px;color:#34425e;font-weight:400;letter-spacing:0.9px;">High&nbsp; 24 hour</div>
<svg class="r" style="left:930px;top:320px;" width="500" height="140" viewBox="0 0 500 140">
<defs><linearGradient id="eg" x1="0" y1="0" x2="0" y2="1"><stop offset="0" stop-color="#9cc2ea" stop-opacity="0.75"/><stop offset="0.6" stop-color="#cfe0f3" stop-opacity="0.5"/><stop offset="1" stop-color="#eef4fb" stop-opacity="0.1"/></linearGradient></defs>
<line x1="52" y1="12.5" x2="476" y2="12.5" stroke="#c8ced8" stroke-width="1" stroke-dasharray="2 2"/>
<line x1="52" y1="52" x2="136" y2="52" stroke="#b3bbc7" stroke-width="1.2" stroke-dasharray="7 5"/>
<line x1="136" y1="52" x2="476" y2="52" stroke="#c8ced8" stroke-width="1" stroke-dasharray="2 2"/>
<path d="M52.0 28.4 C54.4 29.0 62.1 30.8 66.4 32.2 C70.7 33.6 73.6 36.4 78.0 36.6 C82.4 36.9 87.6 34.3 92.7 33.7 C97.9 33.1 103.5 33.1 108.9 33.1 C114.3 33.2 120.4 32.6 125.0 34.0 C129.6 35.4 132.8 37.6 136.7 41.5 C140.6 45.4 144.0 55.4 148.4 57.5 C152.8 59.6 157.3 55.4 163.0 54.2 C168.7 53.0 176.8 50.4 182.7 50.4 C188.6 50.4 191.7 51.1 198.2 54.2 C204.7 57.3 213.6 65.5 221.7 68.9 C229.8 72.3 239.3 73.2 246.6 74.7 C253.9 76.1 258.5 76.0 265.6 77.6 C272.7 79.2 281.7 83.7 289.0 84.4 C296.3 85.1 300.8 84.6 309.6 82.0 C318.4 79.4 333.3 72.6 341.8 68.9 C350.3 65.1 354.9 60.5 360.8 59.5 C366.7 58.5 371.4 60.7 377.0 63.0 C382.6 65.3 386.4 72.7 394.5 73.2 C402.6 73.7 418.0 66.7 425.3 66.0 C432.6 65.3 432.7 66.4 438.5 68.9 C444.3 71.4 456.4 79.0 460.0 81.0 L460 123 L52 123Z" fill="url(#eg)"/>
<line x1="52" y1="91.5" x2="476" y2="91.5" stroke="#a8b1be" stroke-width="1.3" stroke-dasharray="9 6"/>
<path d="M52.0 28.4 C54.4 29.0 62.1 30.8 66.4 32.2 C70.7 33.6 73.6 36.4 78.0 36.6 C82.4 36.9 87.6 34.3 92.7 33.7 C97.9 33.1 103.5 33.1 108.9 33.1 C114.3 33.2 120.4 32.6 125.0 34.0 C129.6 35.4 132.8 37.6 136.7 41.5 C140.6 45.4 144.0 55.4 148.4 57.5 C152.8 59.6 157.3 55.4 163.0 54.2 C168.7 53.0 176.8 50.4 182.7 50.4 C188.6 50.4 191.7 51.1 198.2 54.2 C204.7 57.3 213.6 65.5 221.7 68.9 C229.8 72.3 239.3 73.2 246.6 74.7 C253.9 76.1 258.5 76.0 265.6 77.6 C272.7 79.2 281.7 83.7 289.0 84.4 C296.3 85.1 300.8 84.6 309.6 82.0 C318.4 79.4 333.3 72.6 341.8 68.9 C350.3 65.1 354.9 60.5 360.8 59.5 C366.7 58.5 371.4 60.7 377.0 63.0 C382.6 65.3 386.4 72.7 394.5 73.2 C402.6 73.7 418.0 66.7 425.3 66.0 C432.6 65.3 432.7 66.4 438.5 68.9 C444.3 71.4 456.4 79.0 460.0 81.0" stroke="#3f7fb8" stroke-width="2.6" fill="none" stroke-linecap="round"/>
<circle cx="108.90000000000009" cy="33.10000000000002" r="5.5" fill="#fff" stroke="#3f7fb8" stroke-width="2"/><circle cx="182.70000000000005" cy="50.39999999999998" r="5.5" fill="#fff" stroke="#3f7fb8" stroke-width="2"/><circle cx="246.5999999999999" cy="74.69999999999999" r="5.5" fill="#fff" stroke="#3f7fb8" stroke-width="2"/><circle cx="341.79999999999995" cy="68.89999999999998" r="5.5" fill="#fff" stroke="#3f7fb8" stroke-width="2"/><circle cx="425.29999999999995" cy="66" r="5.5" fill="#fff" stroke="#3f7fb8" stroke-width="2"/>
<line x1="52.5" y1="12" x2="52.5" y2="123" stroke="#6a7891" stroke-width="1.3"/>
<line x1="44" y1="12.5" x2="53" y2="12.5" stroke="#6a7891" stroke-width="1.3"/>
<line x1="44" y1="52" x2="53" y2="52" stroke="#6a7891" stroke-width="1.3"/>
<line x1="44" y1="91.5" x2="53" y2="91.5" stroke="#6a7891" stroke-width="1.3"/>
<line x1="26" y1="123" x2="481" y2="123" stroke="#b9c1cd" stroke-width="1.5"/>
</svg>
<div class="r" style="left:1355px;top:398px;width:60px;height:30px;background:#3a8fc0;border-radius:3px;"></div>
<div class="t" style="left:1385.0px;top:404.9px;font-size:19px;color:#ffffff;font-weight:400;letter-spacing:1.0px;transform:translateX(-50%);">5.2<span style="letter-spacing:0">m</span></div>
<div class="t" style="left:938.0px;top:324.6px;font-size:19px;color:#1e2a44;font-weight:400;letter-spacing:0.3px;">6.5</div>
<div class="t" style="left:938.0px;top:362.5px;font-size:19px;color:#1e2a44;font-weight:400;letter-spacing:0.3px;">5.0</div>
<div class="t" style="left:938.0px;top:401.6px;font-size:19px;color:#1e2a44;font-weight:400;letter-spacing:0.3px;">5.0</div>
<div class="t" style="left:963.0px;top:458.3px;font-size:18.5px;color:#1e2a44;font-weight:400;letter-spacing:1.1px;">Apr 24</div>
<div class="t" style="left:1060.0px;top:458.3px;font-size:18.5px;color:#1e2a44;font-weight:400;letter-spacing:1.1px;">Apr 24</div>
<div class="t" style="left:1144.0px;top:458.3px;font-size:18.5px;color:#1e2a44;font-weight:400;letter-spacing:1.1px;">Apr 24</div>
<div class="t" style="left:1235.0px;top:458.3px;font-size:18.5px;color:#1e2a44;font-weight:400;letter-spacing:1.1px;">Apr 25</div>
<div class="t" style="left:1307.0px;top:458.3px;font-size:18.5px;color:#1e2a44;font-weight:400;letter-spacing:1.1px;">Apr 25</div>
<div class="r" style="left:908px;top:519px;width:518px;height:339px;background:#fbfcfe;border:1px solid #d9dfe8;border-radius:3px;box-sizing:border-box;"></div>
<div class="r" style="left:909px;top:520px;width:516px;height:50px;background:linear-gradient(180deg,#e5eaf1,#e0e6ee);border-bottom:1px solid #d3dae4;box-sizing:border-box;"></div>
<div class="t" style="left:937.0px;top:533.1px;font-size:23.5px;color:#15244a;font-weight:400;letter-spacing:1.05px;-webkit-text-stroke:0.6px #15244a;">Groundwater Quality</div>
<div class="t" style="left:1273.5px;top:536.5px;font-size:19.5px;color:#1e2a44;font-weight:400;letter-spacing:0.4px;">Last 30 Days</div>
<div class="t" style="left:927.0px;top:584.9px;font-size:14px;color:#2a3856;font-weight:400;letter-spacing:0.3px;">pH Level</div>
<div class="t" style="left:1292.0px;top:592.0px;font-size:22.5px;color:#1f5f9c;font-weight:400;letter-spacing:0.6px;-webkit-text-stroke:0.5px #1f5f9c;">PH 7.2</div>
<svg class="r" style="left:920px;top:595px;" width="500" height="135" viewBox="0 0 500 135">
<defs><linearGradient id="gg" x1="0" y1="0" x2="0" y2="1"><stop offset="0" stop-color="#cfe3f2" stop-opacity="0.85"/><stop offset="1" stop-color="#eef4fa" stop-opacity="0.2"/></linearGradient></defs>
<rect x="46" y="43" width="442" height="52" fill="url(#gg)"/>
<line x1="46" y1="11.7" x2="362" y2="11.7" stroke="#cdd3dc" stroke-width="1" stroke-dasharray="2 2"/><line x1="448" y1="11.7" x2="488" y2="11.7" stroke="#cdd3dc" stroke-width="1" stroke-dasharray="2 2"/>
<line x1="46" y1="57.4" x2="488" y2="57.4" stroke="#a9b2bf" stroke-width="1.2" stroke-dasharray="8 5"/>
<line x1="46" y1="79" x2="488" y2="79" stroke="#cdd3dc" stroke-width="1" stroke-dasharray="2 2"/>
<line x1="46" y1="108.4" x2="488" y2="108.4" stroke="#d3d9e2" stroke-width="1.3"/>
<line x1="46" y1="127" x2="482" y2="127" stroke="#cdd3dc" stroke-width="1" stroke-dasharray="2 2"/>
<path d="M46.8 29.0 C48.3 29.2 52.1 28.2 56.0 30.0 C59.9 31.8 62.8 36.8 70.0 39.5 C77.2 42.2 88.7 45.2 99.5 46.0 C110.3 46.8 125.3 44.4 134.7 44.4 C144.1 44.4 147.0 42.6 155.8 45.8 C164.6 49.0 175.8 60.4 187.5 63.7 C199.2 67.0 212.0 64.7 226.0 65.5 C240.0 66.3 258.0 70.1 271.8 68.7 C285.6 67.4 296.5 58.9 308.8 57.4 C321.1 55.9 336.0 60.2 345.7 59.9 C355.4 59.6 356.7 59.1 366.8 55.6 C376.8 52.1 399.5 41.6 406.0 38.8" stroke="#3a9cc6" stroke-width="2.8" fill="none" stroke-linecap="round"/>
<circle cx="134.70000000000005" cy="44.39999999999998" r="6" fill="#fff" stroke="#2f8fc0" stroke-width="2.5"/><circle cx="308.79999999999995" cy="57.39999999999998" r="6" fill="#fff" stroke="#2f8fc0" stroke-width="2.5"/><circle cx="406" cy="38.799999999999955" r="6" fill="#fff" stroke="#2f8fc0" stroke-width="2.5"/>
<line x1="46.5" y1="11" x2="46.5" y2="128" stroke="#6a7891" stroke-width="1.3"/>
</svg>
<div class="t" style="left:927.0px;top:609.6px;font-size:17px;color:#1e2a44;font-weight:400;letter-spacing:0.3px;">6.5</div>
<div class="t" style="left:927.0px;top:635.6px;font-size:17px;color:#1e2a44;font-weight:400;letter-spacing:0.3px;">7.0</div>
<div class="t" style="left:927.0px;top:660.6px;font-size:17px;color:#1e2a44;font-weight:400;letter-spacing:0.3px;">7.3</div>
<div class="t" style="left:927.0px;top:685.6px;font-size:17px;color:#1e2a44;font-weight:400;letter-spacing:0.3px;">7.9</div>
<div class="t" style="left:976.7px;top:731.6px;font-size:17px;color:#2a3856;font-weight:400;letter-spacing:0.6px;">Apr 24</div>
<svg class="r" style="left:1068px;top:733px;" width="14" height="14" viewBox="0 0 14 14"><circle cx="7" cy="7" r="6" fill="#2f83b8"/></svg>
<div class="t" style="left:1088.0px;top:731.6px;font-size:17px;color:#2a3856;font-weight:400;letter-spacing:1.2px;">M °C</div>
<svg class="r" style="left:1170px;top:736px;" width="16" height="10" viewBox="0 0 16 10"><path d="M1 9 V5 Q1 2 4 2 Q6 0 9 2 Q15 2 15 6 V9Z" fill="#a8c8e6"/></svg>
<div class="t" style="left:1187.0px;top:731.6px;font-size:17px;color:#2a3856;font-weight:400;">1 1mg/L</div>
<div class="t" style="left:1278.0px;top:731.6px;font-size:17px;color:#2a3856;font-weight:400;">Apr 0.31cg/L</div>
<div class="r" style="left:909px;top:766px;width:516px;height:91px;background:#f2f5f9;"></div>
<div class="r" style="left:909px;top:766px;width:516px;height:47px;background:linear-gradient(180deg,#e6ebf2,#e2e8ef);border-bottom:1px solid #d3dae4;box-sizing:border-box;"></div>
<div class="r" style="left:1064px;top:778px;width:1px;height:79px;background:#d3dae4;"></div>
<div class="r" style="left:1169px;top:778px;width:1px;height:79px;background:#d3dae4;"></div>
<div class="r" style="left:1278px;top:778px;width:1px;height:79px;background:#d3dae4;"></div>
<div class="t" style="left:932.0px;top:781.8px;font-size:21.5px;color:#4a6488;font-weight:400;letter-spacing:1.1px;">Parameter</div>
<div class="t" style="left:1081.8px;top:781.2px;font-size:21px;color:#1e2a44;font-weight:400;">EC</div>
<div class="t" style="left:1185.5px;top:781.2px;font-size:21px;color:#1e2a44;font-weight:400;">TSS</div>
<div class="t" style="left:1294.5px;top:781.8px;font-size:21.5px;color:#182a4c;font-weight:400;letter-spacing:2.1px;-webkit-text-stroke:0.3px #182a4c;">Nitrate</div>
<div class="t" style="left:939.4px;top:823.1px;font-size:20.5px;color:#1e2a44;font-weight:400;letter-spacing:1.4px;">700 µS/cm</div>
<div class="t" style="left:1081.8px;top:823.1px;font-size:20.5px;color:#1e2a44;font-weight:400;letter-spacing:0.5px;">700</div>
<div class="t" style="left:1128.0px;top:828.6px;font-size:14px;color:#2a3856;font-weight:400;letter-spacing:0.3px;">µScm</div>
<div class="t" style="left:1184.8px;top:823.1px;font-size:20.5px;color:#1e2a44;font-weight:400;letter-spacing:0.3px;">110</div>
<div class="t" style="left:1222.0px;top:826.5px;font-size:16.5px;color:#2a3856;font-weight:400;letter-spacing:0.4px;">mg/L</div>
<div class="t" style="left:1296.0px;top:823.1px;font-size:20.5px;color:#1e2a44;font-weight:400;letter-spacing:0.3px;">12</div>
<div class="t" style="left:1325.0px;top:826.5px;font-size:16.5px;color:#2a3856;font-weight:400;letter-spacing:0.4px;">mg/L</div>
<div class="r" style="left:72px;top:867px;width:1393px;height:63px;background:linear-gradient(180deg,#eef1f7,#ecf0f6);border-top:1px solid #dfe4ec;border-radius:0 0 10px 10px;box-sizing:border-box;"></div>
<svg class="r" style="left:134px;top:883px;" width="33" height="26" viewBox="0 0 33 26"><rect x="1" y="1" width="31" height="24" rx="3" fill="#2f7ab8"/><rect x="6" y="6" width="9" height="2.5" fill="#fff"/><rect x="18" y="6" width="10" height="2.5" fill="#fff"/><rect x="6" y="11" width="9" height="2.5" fill="#fff"/><rect x="18" y="11" width="10" height="2.5" fill="#fff"/><rect x="6" y="16" width="22" height="2" fill="#fff"/><path d="M13 17 L16.5 14 L20 17 L16.5 20Z" fill="#fff"/></svg>
<div class="t" style="left:181.0px;top:885.6px;font-size:20.5px;color:#1a2644;font-weight:400;letter-spacing:1.6px;">Depth:</div>
<div class="t" style="left:262.0px;top:885.6px;font-size:20.5px;color:#1a2644;font-weight:400;letter-spacing:1.2px;-webkit-text-stroke:0.75px #1a2644;">15.0 m</div>
<div class="r" style="left:361px;top:880px;width:1px;height:34px;background:#d3dae4;"></div>
<svg class="r" style="left:390px;top:881px;" width="31" height="32" viewBox="0 0 31 32"><path d="M15.5 1.5 C20 5.5 29.5 10.5 29.5 17.5 A14 13.5 0 0 1 1.5 17.5 C1.5 10.5 11 5.5 15.5 1.5Z" fill="#3a96c4"/><path d="M15.5 8.5 C17.5 11.5 21.5 15 21.5 19 A6 6 0 0 1 9.5 19 C9.5 15 13.5 11.5 15.5 8.5Z" fill="none" stroke="#fff" stroke-width="2"/></svg>
<div class="t" style="left:435.0px;top:885.6px;font-size:20.5px;color:#1a2644;font-weight:400;letter-spacing:1.2px;">Water Level:</div>
<div class="t" style="left:573.0px;top:885.6px;font-size:20.5px;color:#2a84a8;font-weight:400;letter-spacing:1.1px;-webkit-text-stroke:0.75px #2a84a8;">5.2 m</div>
<div class="r" style="left:662px;top:880px;width:1px;height:34px;background:#d3dae4;"></div>
<svg class="r" style="left:686px;top:880px;" width="50" height="34" viewBox="0 0 50 34"><path d="M13 8 C16 13 23 18 23 23 A10 10 0 0 1 3 23 C3 18 10 13 13 8Z" fill="#3a8fc0"/><circle cx="36.5" cy="10" r="7.5" fill="#2f83b8"/></svg>
<div class="t" style="left:745.0px;top:885.6px;font-size:20.5px;color:#1a2644;font-weight:400;letter-spacing:1.1px;">Air Temp:</div>
<div class="t" style="left:853.0px;top:885.6px;font-size:20.5px;color:#1a2644;font-weight:400;letter-spacing:0.6px;-webkit-text-stroke:0.75px #1a2644;">18</div>
<div class="t" style="left:880.0px;top:885.6px;font-size:20.5px;color:#1a2644;font-weight:400;letter-spacing:1.5px;">°C</div>
<div class="r" style="left:942px;top:880px;width:1px;height:34px;background:#d3dae4;"></div>
<svg class="r" style="left:977px;top:881px;" width="36" height="30" viewBox="0 0 36 30"><path d="M5 18 Q2 18 2 14 Q2 10 7 10 Q8 3 16 3 Q24 3 26 9 Q33 9 33 14 Q33 18 29 18Z" fill="#5b8fc4"/><ellipse cx="17" cy="12" rx="7" ry="5" fill="#7aa9d8"/><circle cx="10" cy="25" r="1.5" fill="#5b8fc4"/><circle cx="18" cy="25" r="1.5" fill="#5b8fc4"/><circle cx="26" cy="25" r="1.5" fill="#5b8fc4"/></svg>
<div class="t" style="left:1024.0px;top:885.6px;font-size:20.5px;color:#1a2644;font-weight:400;letter-spacing:1.0px;">Rainfall:</div>
<div class="t" style="left:1117.0px;top:885.6px;font-size:20.5px;color:#1a2644;font-weight:400;letter-spacing:1.3px;transform:scaleX(1.1);transform-origin:0 0;-webkit-text-stroke:0.75px #1a2644;">2 mm</div>
</body></html>
